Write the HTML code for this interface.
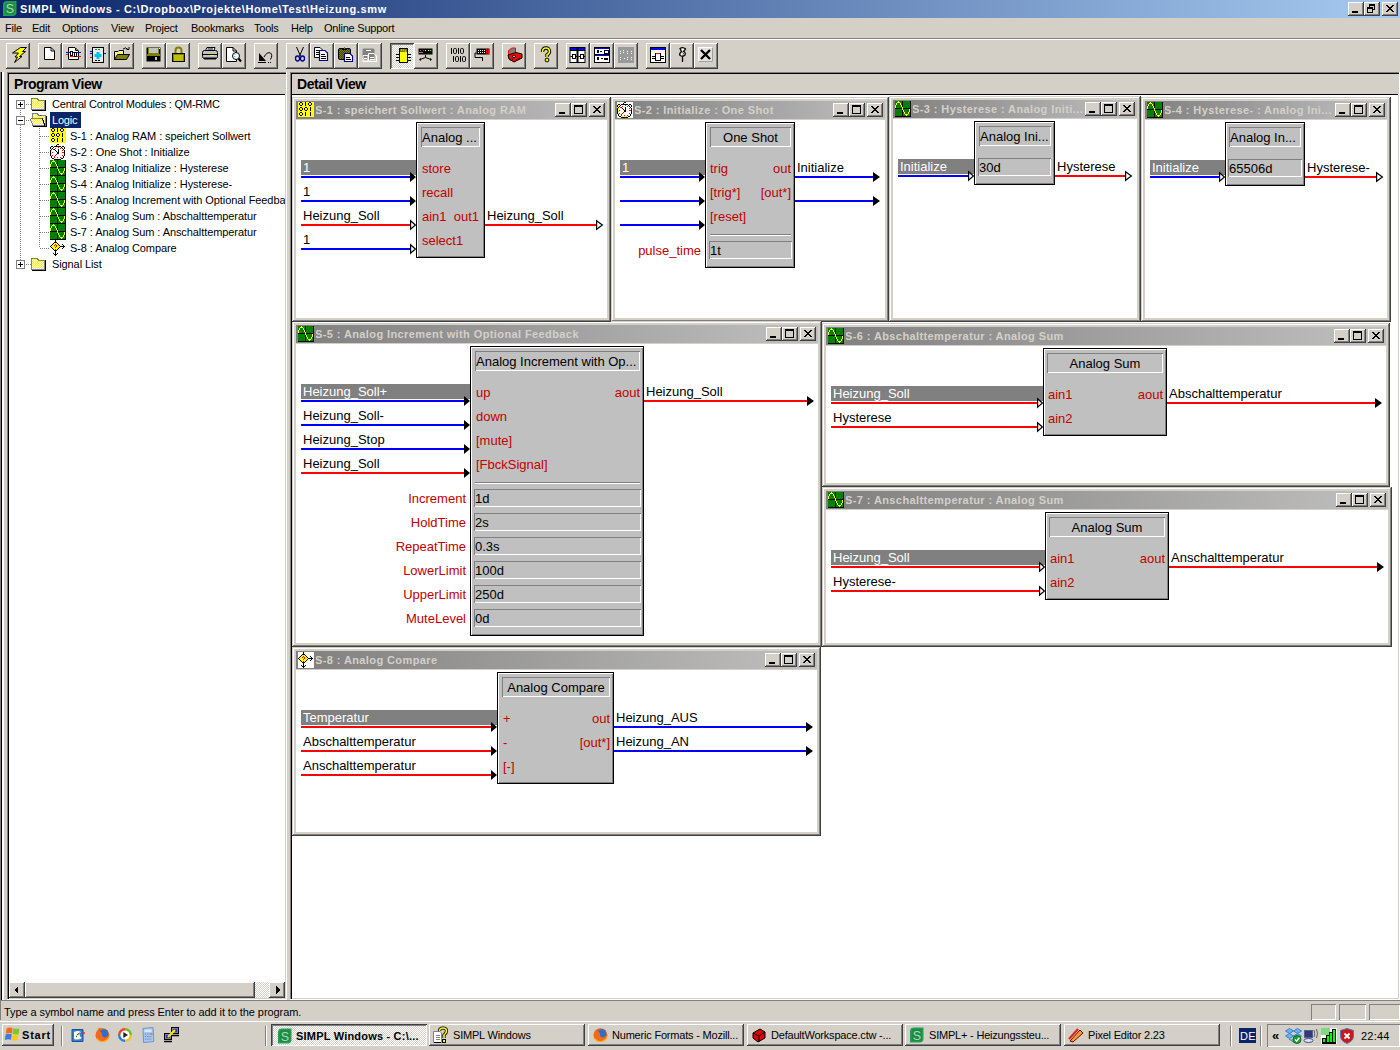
<!DOCTYPE html>
<html><head><meta charset="utf-8"><title>SIMPL Windows</title>
<style>
html,body{margin:0;padding:0;}
body{width:1400px;height:1050px;overflow:hidden;position:relative;background:#D4D0C8;font-family:"Liberation Sans",sans-serif;}
div,svg{position:absolute;box-sizing:border-box;}
.t{white-space:pre;}
svg{overflow:visible;}
</style></head><body>
<div style="left:0px;top:0px;width:1400px;height:18px;background:linear-gradient(to right,#0A246A,#A6CAF0);"></div>
<svg style="left:3px;top:1px;shape-rendering:auto" width="14" height="15" viewBox="0 0 14 15" shape-rendering="crispEdges"><path d="M4 0 H13.5 V11 Q13.5 15 9.5 15 H0 V4 Q0 0 4 0 Z" fill="#22A050"/><path d="M4 1.5 H12 V11 Q12 13.5 9.5 13.5 H1.5 V4 Q1.5 1.5 4 1.5 Z" fill="#1E8A46"/><text x="7" y="12" font-family="Liberation Sans" font-size="12.5" fill="#A8DCB4" text-anchor="middle">S</text></svg>
<div class="t" style="top:4px;font-size:11px;line-height:11px;color:#FFF;font-weight:bold;letter-spacing:0.6px;left:20px;">SIMPL Windows - C:\Dropbox\Projekte\Home\Test\Heizung.smw</div>
<div style="left:1348px;top:2px;width:16px;height:14px;background:#D4D0C8;box-shadow: inset -1px -1px #404040, inset 1px 1px #FFFFFF, inset -2px -2px #808080;"></div>
<svg style="left:1348px;top:2px;" width="16" height="14" viewBox="0 0 16 14" shape-rendering="crispEdges"><rect x="4" y="9" width="6" height="2" fill="#000"/></svg>
<div style="left:1364px;top:2px;width:16px;height:14px;background:#D4D0C8;box-shadow: inset -1px -1px #404040, inset 1px 1px #FFFFFF, inset -2px -2px #808080;"></div>
<svg style="left:1364px;top:2px;" width="16" height="14" viewBox="0 0 16 14" shape-rendering="crispEdges"><rect x="5.5" y="2.5" width="5" height="5" fill="none" stroke="#000"/><rect x="5" y="2" width="6" height="2" fill="#000"/><rect x="3.5" y="5.5" width="5" height="5" fill="#D4D0C8" stroke="#000"/><rect x="3" y="5" width="6" height="2" fill="#000"/></svg>
<div style="left:1382px;top:2px;width:16px;height:14px;background:#D4D0C8;box-shadow: inset -1px -1px #404040, inset 1px 1px #FFFFFF, inset -2px -2px #808080;"></div>
<svg style="left:1382px;top:2px;" width="16" height="14" viewBox="0 0 16 14" shape-rendering="crispEdges"><rect x="4" y="3" width="2" height="1" fill="#000"/><rect x="10" y="3" width="2" height="1" fill="#000"/><rect x="5" y="4" width="2" height="1" fill="#000"/><rect x="9" y="4" width="2" height="1" fill="#000"/><rect x="6" y="5" width="4" height="1" fill="#000"/><rect x="7" y="6" width="2" height="1" fill="#000"/><rect x="6" y="7" width="4" height="1" fill="#000"/><rect x="5" y="8" width="2" height="1" fill="#000"/><rect x="9" y="8" width="2" height="1" fill="#000"/><rect x="4" y="9" width="2" height="1" fill="#000"/><rect x="10" y="9" width="2" height="1" fill="#000"/></svg>
<div class="t" style="top:23px;font-size:11px;line-height:11px;color:#000;letter-spacing:-0.22px;left:5px;">File</div>
<div class="t" style="top:23px;font-size:11px;line-height:11px;color:#000;letter-spacing:-0.22px;left:32px;">Edit</div>
<div class="t" style="top:23px;font-size:11px;line-height:11px;color:#000;letter-spacing:-0.22px;left:62px;">Options</div>
<div class="t" style="top:23px;font-size:11px;line-height:11px;color:#000;letter-spacing:-0.22px;left:111px;">View</div>
<div class="t" style="top:23px;font-size:11px;line-height:11px;color:#000;letter-spacing:-0.22px;left:145px;">Project</div>
<div class="t" style="top:23px;font-size:11px;line-height:11px;color:#000;letter-spacing:-0.22px;left:191px;">Bookmarks</div>
<div class="t" style="top:23px;font-size:11px;line-height:11px;color:#000;letter-spacing:-0.22px;left:254px;">Tools</div>
<div class="t" style="top:23px;font-size:11px;line-height:11px;color:#000;letter-spacing:-0.22px;left:291px;">Help</div>
<div class="t" style="top:23px;font-size:11px;line-height:11px;color:#000;letter-spacing:-0.22px;left:324px;">Online Support</div>
<div style="left:0px;top:38px;width:1400px;height:1px;background:#808080;"></div>
<div style="left:0px;top:39px;width:1400px;height:1px;background:#FFFFFF;"></div>
<div style="left:6px;top:43px;width:24px;height:26px;background:#D4D0C8;box-shadow: inset -1px -1px #404040, inset 1px 1px #FFFFFF, inset -2px -2px #808080;"></div>
<div style="left:38px;top:43px;width:24px;height:26px;background:#D4D0C8;box-shadow: inset -1px -1px #404040, inset 1px 1px #FFFFFF, inset -2px -2px #808080;"></div>
<div style="left:62px;top:43px;width:24px;height:26px;background:#D4D0C8;box-shadow: inset -1px -1px #404040, inset 1px 1px #FFFFFF, inset -2px -2px #808080;"></div>
<div style="left:86px;top:43px;width:24px;height:26px;background:#D4D0C8;box-shadow: inset -1px -1px #404040, inset 1px 1px #FFFFFF, inset -2px -2px #808080;"></div>
<div style="left:110px;top:43px;width:24px;height:26px;background:#D4D0C8;box-shadow: inset -1px -1px #404040, inset 1px 1px #FFFFFF, inset -2px -2px #808080;"></div>
<div style="left:142px;top:43px;width:24px;height:26px;background:#D4D0C8;box-shadow: inset -1px -1px #404040, inset 1px 1px #FFFFFF, inset -2px -2px #808080;"></div>
<div style="left:166px;top:43px;width:24px;height:26px;background:#D4D0C8;box-shadow: inset -1px -1px #404040, inset 1px 1px #FFFFFF, inset -2px -2px #808080;"></div>
<div style="left:198px;top:43px;width:24px;height:26px;background:#D4D0C8;box-shadow: inset -1px -1px #404040, inset 1px 1px #FFFFFF, inset -2px -2px #808080;"></div>
<div style="left:222px;top:43px;width:24px;height:26px;background:#D4D0C8;box-shadow: inset -1px -1px #404040, inset 1px 1px #FFFFFF, inset -2px -2px #808080;"></div>
<div style="left:254px;top:43px;width:24px;height:26px;background:#D4D0C8;box-shadow: inset -1px -1px #404040, inset 1px 1px #FFFFFF, inset -2px -2px #808080;"></div>
<div style="left:286px;top:43px;width:24px;height:26px;background:#D4D0C8;box-shadow: inset -1px -1px #404040, inset 1px 1px #FFFFFF, inset -2px -2px #808080;"></div>
<div style="left:310px;top:43px;width:24px;height:26px;background:#D4D0C8;box-shadow: inset -1px -1px #404040, inset 1px 1px #FFFFFF, inset -2px -2px #808080;"></div>
<div style="left:334px;top:43px;width:24px;height:26px;background:#D4D0C8;box-shadow: inset -1px -1px #404040, inset 1px 1px #FFFFFF, inset -2px -2px #808080;"></div>
<div style="left:358px;top:43px;width:24px;height:26px;background:#D4D0C8;box-shadow: inset -1px -1px #404040, inset 1px 1px #FFFFFF, inset -2px -2px #808080;"></div>
<div style="left:390px;top:43px;width:24px;height:26px;background:repeating-conic-gradient(#FFF 0 25%,#D4D0C8 0 50%) 0 0/2px 2px;box-shadow: inset 1px 1px #404040, inset -1px -1px #FFFFFF, inset 2px 2px #808080;"></div>
<div style="left:414px;top:43px;width:24px;height:26px;background:#D4D0C8;box-shadow: inset -1px -1px #404040, inset 1px 1px #FFFFFF, inset -2px -2px #808080;"></div>
<div style="left:446px;top:43px;width:24px;height:26px;background:#D4D0C8;box-shadow: inset -1px -1px #404040, inset 1px 1px #FFFFFF, inset -2px -2px #808080;"></div>
<div style="left:470px;top:43px;width:24px;height:26px;background:#D4D0C8;box-shadow: inset -1px -1px #404040, inset 1px 1px #FFFFFF, inset -2px -2px #808080;"></div>
<div style="left:502px;top:43px;width:24px;height:26px;background:#D4D0C8;box-shadow: inset -1px -1px #404040, inset 1px 1px #FFFFFF, inset -2px -2px #808080;"></div>
<div style="left:534px;top:43px;width:24px;height:26px;background:#D4D0C8;box-shadow: inset -1px -1px #404040, inset 1px 1px #FFFFFF, inset -2px -2px #808080;"></div>
<div style="left:566px;top:43px;width:24px;height:26px;background:#D4D0C8;box-shadow: inset -1px -1px #404040, inset 1px 1px #FFFFFF, inset -2px -2px #808080;"></div>
<div style="left:590px;top:43px;width:24px;height:26px;background:#D4D0C8;box-shadow: inset -1px -1px #404040, inset 1px 1px #FFFFFF, inset -2px -2px #808080;"></div>
<div style="left:614px;top:43px;width:24px;height:26px;background:#D4D0C8;box-shadow: inset -1px -1px #404040, inset 1px 1px #FFFFFF, inset -2px -2px #808080;"></div>
<div style="left:646px;top:43px;width:24px;height:26px;background:#D4D0C8;box-shadow: inset -1px -1px #404040, inset 1px 1px #FFFFFF, inset -2px -2px #808080;"></div>
<div style="left:670px;top:43px;width:24px;height:26px;background:#D4D0C8;box-shadow: inset -1px -1px #404040, inset 1px 1px #FFFFFF, inset -2px -2px #808080;"></div>
<div style="left:694px;top:43px;width:24px;height:26px;background:#D4D0C8;box-shadow: inset -1px -1px #404040, inset 1px 1px #FFFFFF, inset -2px -2px #808080;"></div>
<svg style="left:11px;top:47px;shape-rendering:auto" width="16" height="16" viewBox="0 0 16 16" shape-rendering="crispEdges"><path d="M9.5 0.5 H15.5 L11.5 4.5 H14.5 L8.5 9.5 H11 L3.5 15.5 L6.5 10 H4 L7.5 6 H1.5 Z" fill="#FFFF00" stroke="#000" stroke-linejoin="bevel"/></svg>
<svg style="left:42px;top:47px;shape-rendering:auto" width="16" height="16" viewBox="0 0 16 16" shape-rendering="crispEdges"><path d="M2.5 0.5 H9 L12.5 4 V12.5 H2.5 Z" fill="#FFF" stroke="#000"/><path d="M9 0.5 V4 H12.5" fill="none" stroke="#000"/></svg>
<svg style="left:66px;top:47px;shape-rendering:auto" width="16" height="16" viewBox="0 0 16 16" shape-rendering="crispEdges"><path d="M2.5 0.5 H9 L12.5 4 V12.5 H2.5 Z" fill="#FFF" stroke="#000"/><path d="M9.5 1 V3.5 H12" fill="none" stroke="#000"/><path d="M0 5.5 H15" stroke="#0000FF"/><path d="M0 7.5 H2 M4 9.5 H15" stroke="#FF0000"/><rect x="4.5" y="4.5" width="2" height="4" fill="#FFF" stroke="#000"/><rect x="8.5" y="5.5" width="2" height="4" fill="#FFF" stroke="#000"/></svg>
<svg style="left:91px;top:47px;shape-rendering:auto" width="16" height="16" viewBox="0 0 16 16" shape-rendering="crispEdges"><rect x="1.5" y="0.5" width="11" height="15" fill="#E8E8E8" stroke="#000"/><path d="M4 2.5 H6 M7 2.5 H9" stroke="#00A000"/><path d="M-1 4.5 H1 M-1 6.5 H1 M13 6.5 H15" stroke="#0000FF"/><path d="M-1 10.5 H1" stroke="#FF0000"/><path d="M7 5 V12 M3.5 8.5 H10.5" stroke="#00C0F0" stroke-width="3"/><path d="M4 13.5 H10" stroke="#000" stroke-dasharray="2 1"/></svg>
<svg style="left:114px;top:47px;shape-rendering:auto" width="16" height="16" viewBox="0 0 16 16" shape-rendering="crispEdges"><defs><pattern id="fdt" width="2" height="2" patternUnits="userSpaceOnUse"><rect width="2" height="2" fill="#FFFF00"/><rect width="1" height="1" fill="#FFF"/><rect x="1" y="1" width="1" height="1" fill="#FFF"/></pattern></defs><path d="M0.5 4.5 H4 L5 3.5 H9.5 V12.5 H0.5 Z" fill="url(#fdt)" stroke="#000"/><path d="M0.5 12.5 L3.5 7.5 H15.5 L12.5 12.5 Z" fill="#808000" stroke="#000"/><path d="M9 2 Q11.5 -0.5 14 2.5" fill="none" stroke="#000"/><path d="M12.5 2.5 H15 V0" fill="none" stroke="#000"/></svg>
<svg style="left:146px;top:47px;shape-rendering:auto" width="16" height="16" viewBox="0 0 16 16" shape-rendering="crispEdges"><rect x="0.5" y="0.5" width="14" height="14" fill="#000"/><rect x="2" y="1" width="11" height="6" fill="#808000"/><rect x="3" y="1" width="9" height="5" fill="#C0C0C0"/><rect x="1" y="7" width="13" height="2" fill="#808000"/><rect x="3" y="9" width="9" height="5" fill="#000"/><rect x="9" y="10" width="2" height="3" fill="#C0C0C0"/><rect x="13" y="1" width="1" height="1" fill="#FFF"/></svg>
<svg style="left:171px;top:47px;shape-rendering:auto" width="16" height="16" viewBox="0 0 16 16" shape-rendering="crispEdges"><path d="M4.5 7 V3.5 Q4.5 0.5 7.5 0.5 Q10.5 0.5 10.5 3.5 V7" fill="none" stroke="#808000" stroke-width="2"/><rect x="1.5" y="6.5" width="12" height="8" fill="#808000" stroke="#000"/><path d="M3 9 H12 M3 11 H12 M3 13 H12" stroke="#FFFF00"/></svg>
<svg style="left:202px;top:47px;shape-rendering:auto" width="16" height="16" viewBox="0 0 16 16" shape-rendering="crispEdges"><path d="M3.5 3.5 L5 0.5 H13 L12 3.5 Z" fill="#FFF" stroke="#000"/><path d="M5.5 2 H11" stroke="#000"/><rect x="0.5" y="3.5" width="15" height="8" rx="2" fill="#C0C0C0" stroke="#000"/><path d="M1 7.5 H15" stroke="#000"/><rect x="8" y="8" width="4" height="1" fill="#FFFF00"/><path d="M2 11.5 H14" stroke="#000" stroke-width="2"/></svg>
<svg style="left:226px;top:47px;shape-rendering:auto" width="16" height="16" viewBox="0 0 16 16" shape-rendering="crispEdges"><path d="M0.5 0.5 H7 L10.5 4 V14.5 H0.5 Z" fill="#FFF" stroke="#000"/><path d="M7 0.5 V4 H10.5" fill="none" stroke="#000"/><circle cx="10" cy="9" r="3.5" fill="#FFF" stroke="#000"/><path d="M8.5 8 L9.5 7 M8.5 10 V9" stroke="#00E0F0"/><path d="M12.5 11.5 L15 14.5" stroke="#000" stroke-width="2"/></svg>
<svg style="left:258px;top:50px;shape-rendering:auto" width="16" height="16" viewBox="0 0 16 16" shape-rendering="crispEdges"><path d="M1 3 V11 H8 Z" fill="#000"/><path d="M6 7 Q9 1.5 12.5 3 Q15 5 12.5 9.5" fill="none" stroke="#000"/><path d="M0 12.5 H8 M10 12.5 H11 M12 12.5 H13" stroke="#000"/></svg>
<svg style="left:293px;top:47px;shape-rendering:auto" width="16" height="16" viewBox="0 0 16 16" shape-rendering="crispEdges"><path d="M3.5 0 L7.5 9 M10.5 0 L6.5 9" stroke="#000"/><ellipse cx="4.5" cy="11.5" rx="2" ry="2.5" fill="none" stroke="#000090" stroke-width="1.3"/><ellipse cx="9.5" cy="11.5" rx="2" ry="2.5" fill="none" stroke="#000090" stroke-width="1.3"/></svg>
<svg style="left:314px;top:47px;shape-rendering:auto" width="16" height="16" viewBox="0 0 16 16" shape-rendering="crispEdges"><path d="M0.5 0.5 H6 L8.5 3 V10.5 H0.5 Z" fill="#FFF" stroke="#000"/><path d="M2 3.5 H6 M2 5.5 H7 M2 7.5 H7" stroke="#000"/><path d="M5.5 3.5 H11 L13.5 6 V13.5 H5.5 Z" fill="#FFF" stroke="#000090" stroke-width="1.2"/><path d="M7 7.5 H11 M7 9.5 H12 M7 11.5 H12" stroke="#000"/></svg>
<svg style="left:338px;top:47px;shape-rendering:auto" width="16" height="16" viewBox="0 0 16 16" shape-rendering="crispEdges"><defs><pattern id="odt" width="2" height="2" patternUnits="userSpaceOnUse"><rect width="2" height="2" fill="#808000"/><rect width="1" height="1" fill="#404000"/><rect x="1" y="1" width="1" height="1" fill="#404000"/></pattern></defs><rect x="0.5" y="1.5" width="12" height="11" rx="1.5" fill="url(#odt)" stroke="#000"/><path d="M4 2.5 Q6.5 -0.5 9 2.5 Z" fill="#FFFF00" stroke="#000"/><path d="M6.5 6.5 H12 L14.5 9 V14.5 H6.5 Z" fill="#FFF" stroke="#000090" stroke-width="1.2"/><path d="M8 10.5 H12 M8 12.5 H13" stroke="#000"/></svg>
<svg style="left:362px;top:47px;shape-rendering:auto" width="16" height="16" viewBox="0 0 16 16" shape-rendering="crispEdges"><rect x="0.5" y="1.5" width="12" height="11" rx="1.5" fill="#808080"/><path d="M4 3.5 H9" stroke="#FFF"/><path d="M6.5 6.5 H12 L14.5 9 V14.5 H6.5 Z" fill="none" stroke="#FFF"/><path d="M1 8.5 H6 V14.5 H1 Z" fill="none" stroke="#FFF"/><path d="M8 10.5 H12 M8 12.5 H13 M2 11.5 H5" stroke="#FFF"/></svg>
<svg style="left:395px;top:48px;shape-rendering:auto" width="16" height="16" viewBox="0 0 16 16" shape-rendering="crispEdges"><rect x="4.5" y="0.5" width="8" height="14" fill="#FFFF00" stroke="#000"/><rect x="5" y="1" width="7" height="3" fill="#808000"/><path d="M6 2 H7 M8 2 H9 M10 3 H11" stroke="#FFFF00"/><path d="M1 6.5 H4 M1 9.5 H4 M1 12.5 H4 M13 6.5 H16 M13 9.5 H16 M13 12.5 H16" stroke="#000"/></svg>
<svg style="left:418px;top:47px;shape-rendering:auto" width="16" height="16" viewBox="0 0 16 16" shape-rendering="crispEdges"><rect x="0.5" y="1.5" width="14" height="6" fill="#000"/><path d="M2 3.5 H3" stroke="#FF0000"/><path d="M5 3.5 H6" stroke="#FF0000"/><path d="M7 3.5 H8 M10 3.5 H11" stroke="#FFFF00"/><path d="M12 3.5 H13" stroke="#00FF00"/><path d="M1 5.5 H5" stroke="#808080"/><path d="M7.5 8 V10.5 L2 12.5 M7.5 10.5 L13 12.5" fill="none" stroke="#000"/><path d="M1 12.5 L3 11 V14 Z M14 12.5 L12 11 V14 Z" fill="#000"/></svg>
<svg style="left:451px;top:47px;shape-rendering:auto" width="16" height="16" viewBox="0 0 16 16" shape-rendering="crispEdges"><rect x="0" y="1" width="1" height="6" fill="#000"/><rect x="2.5" y="1.5" width="3" height="5" rx="1.2" fill="none" stroke="#000"/><rect x="7" y="1" width="1" height="6" fill="#000"/><rect x="9.5" y="1.5" width="3" height="5" rx="1.2" fill="none" stroke="#000"/><rect x="2" y="9" width="1" height="6" fill="#000"/><rect x="4.5" y="9.5" width="3" height="5" rx="1.2" fill="none" stroke="#000"/><rect x="9" y="9" width="1" height="6" fill="#000"/><rect x="11.5" y="9.5" width="3" height="5" rx="1.2" fill="none" stroke="#000"/></svg>
<svg style="left:474px;top:47px;shape-rendering:auto" width="16" height="16" viewBox="0 0 16 16" shape-rendering="crispEdges"><rect x="2.5" y="1.5" width="13" height="6" fill="#000"/><path d="M4 3.5 H11 M4 5.5 H11" stroke="#FFF" stroke-dasharray="1 1"/><rect x="12" y="2" width="1" height="5" fill="#FF0000"/><rect x="14" y="2" width="1" height="5" fill="#FF0000"/><path d="M2.5 6 H1 V10.5 H8.5 V14" fill="none" stroke="#000"/></svg>
<svg style="left:507px;top:47px;shape-rendering:auto" width="16" height="16" viewBox="0 0 16 16" shape-rendering="crispEdges"><path d="M1.5 3.5 L5 1 H8.5 V7 L1.5 9 Z" fill="#808080" stroke="#F00"/><path d="M1 8 L9 5.5 L15 7 V11 L7 15 L2 12 Z" fill="#FF0000" stroke="#000"/><path d="M5 9.5 Q7 7.5 9 9.5 Q7 12 5 9.5" fill="#FFF" stroke="#000"/><path d="M3 13 L6 12 M9 13 L13 11" stroke="#000" stroke-dasharray="1 1"/></svg>
<svg style="left:538px;top:47px;shape-rendering:auto" width="16" height="16" viewBox="0 0 16 16" shape-rendering="crispEdges"><path d="M4.5 5 Q4.5 1 8 1 Q11.5 1 11.5 4.5 Q11.5 6.5 9 8 V10" fill="none" stroke="#000" stroke-width="3.4"/><path d="M4.5 5 Q4.5 1 8 1 Q11.5 1 11.5 4.5 Q11.5 6.5 9 8 V10" fill="none" stroke="#FFFF00" stroke-width="1.6"/><circle cx="9" cy="13" r="1.9" fill="#FFFF00" stroke="#000"/></svg>
<svg style="left:570px;top:47px;shape-rendering:auto" width="16" height="16" viewBox="0 0 16 16" shape-rendering="crispEdges"><rect x="-0.5" y="0" width="16" height="16" fill="#000"/><rect x="0.5" y="1" width="6" height="2" fill="#0000FF"/><rect x="8.5" y="1" width="6" height="2" fill="#0000FF"/><rect x="0.5" y="4" width="6" height="11" fill="#FFF"/><rect x="8.5" y="4" width="6" height="11" fill="#FFF"/><rect x="2.5" y="7.5" width="3" height="4" fill="none" stroke="#000"/><rect x="10.5" y="7.5" width="3" height="4" fill="none" stroke="#000"/><path d="M0.5 9.5 H2 M6 9.5 H8 M8.5 9.5 H10 M14 9.5 H15" stroke="#000"/></svg>
<svg style="left:594px;top:47px;shape-rendering:auto" width="16" height="16" viewBox="0 0 16 16" shape-rendering="crispEdges"><rect x="0" y="0" width="16" height="16" fill="#000"/><rect x="1" y="1" width="14" height="1" fill="#0000FF"/><rect x="1" y="2" width="14" height="5" fill="#FFF"/><rect x="1" y="8" width="14" height="1" fill="#0000FF"/><rect x="1" y="9" width="14" height="6" fill="#FFF"/><rect x="3" y="3" width="2" height="3" fill="#000"/><rect x="6" y="4" width="2" height="1" fill="#000"/><rect x="10" y="3" width="4" height="3" fill="none" stroke="#000" transform="translate(0.5 0.5)"/><rect x="3" y="10" width="2" height="3" fill="#000"/><rect x="7" y="11" width="2" height="1" fill="#000"/><rect x="10" y="11" width="4" height="2" fill="#000"/></svg>
<svg style="left:618px;top:47px;shape-rendering:auto" width="16" height="16" viewBox="0 0 16 16" shape-rendering="crispEdges"><rect x="0" y="0" width="16" height="16" fill="#9A9A9A"/><path d="M2.5 4 V7 M5.5 3 V6 M9.5 4 V7 M13.5 4 V7 M2.5 10 V13 M6.5 11 V12 M9.5 10 V13 M13.5 10 V13" stroke="#FFF" stroke-dasharray="1 1"/></svg>
<svg style="left:650px;top:47px;shape-rendering:auto" width="16" height="16" viewBox="0 0 16 16" shape-rendering="crispEdges"><rect x="0" y="0" width="16" height="16" fill="#000"/><rect x="1" y="1" width="14" height="2" fill="#0000FF"/><rect x="1" y="3" width="14" height="12" fill="#FFF"/><rect x="5.5" y="6.5" width="5" height="7" fill="#FFF" stroke="#000"/><rect x="6" y="6" width="4" height="1" fill="#FF0000"/><path d="M2 9.5 H5 M11 9.5 H14 M2 11.5 H5 M11 11.5 H14" stroke="#000"/></svg>
<svg style="left:675px;top:47px;shape-rendering:auto" width="16" height="16" viewBox="0 0 16 16" shape-rendering="crispEdges"><path d="M5 1.5 Q8 -0.5 10.5 2 L8.5 4.5 Q11 5.5 10 8 Q8 10 5 8.5 Q4 6.5 6.5 4.5 Z" fill="#FFF" stroke="#000" stroke-width="1.3"/><path d="M7.5 5.5 Q9 6 8 7.5" fill="none" stroke="#000"/><path d="M7.5 9 V15" stroke="#000" stroke-width="1.3"/></svg>
<svg style="left:698px;top:47px;shape-rendering:auto" width="16" height="16" viewBox="0 0 16 16" shape-rendering="crispEdges"><rect x="0.5" y="0.5" width="14" height="14" fill="#E4E2DC" stroke="#FFF"/><path d="M0.5 14.5 H14.5 V0.5" fill="none" stroke="#A0A0A0"/><path d="M3 3 L12 12 M12 3 L3 12" stroke="#000" stroke-width="2.4"/></svg>
<div style="left:0px;top:72px;width:1px;height:928px;background:#808080;"></div>
<div style="left:1px;top:72px;width:1px;height:928px;background:#000;"></div>
<div style="left:2px;top:72px;width:2px;height:928px;background:#FFFFFF;"></div>
<div style="left:7px;top:72px;width:280px;height:1px;background:#808080;"></div>
<div style="left:7px;top:72px;width:1px;height:928px;background:#808080;"></div>
<div style="left:8px;top:73px;width:278px;height:1px;background:#000;"></div>
<div style="left:8px;top:73px;width:1px;height:926px;background:#000;"></div>
<div style="left:286px;top:72px;width:1px;height:928px;background:#FFFFFF;"></div>
<div style="left:7px;top:999px;width:280px;height:1px;background:#FFFFFF;"></div>
<div style="left:290px;top:72px;width:1110px;height:1px;background:#808080;"></div>
<div style="left:290px;top:72px;width:1px;height:928px;background:#808080;"></div>
<div style="left:291px;top:73px;width:1108px;height:1px;background:#000;"></div>
<div style="left:291px;top:73px;width:1px;height:926px;background:#000;"></div>
<div style="left:1399px;top:72px;width:1px;height:928px;background:#FFFFFF;"></div>
<div style="left:290px;top:999px;width:1110px;height:1px;background:#FFFFFF;"></div>
<div style="left:9px;top:74px;width:276px;height:20px;background:#D4D0C8;"></div>
<div style="left:9px;top:94px;width:276px;height:1px;background:#000;"></div>
<div class="t" style="top:77px;font-size:14px;line-height:14px;color:#000;font-weight:bold;letter-spacing:-0.45px;left:14px;">Program View</div>
<div style="left:292px;top:74px;width:1106px;height:20px;background:#D4D0C8;"></div>
<div style="left:292px;top:94px;width:1106px;height:1px;background:#000;"></div>
<div class="t" style="top:77px;font-size:14px;line-height:14px;color:#000;font-weight:bold;letter-spacing:-0.45px;left:297px;">Detail View</div>
<div style="left:9px;top:95px;width:276px;height:887px;background:#FFF;"></div>
<div style="left:292px;top:95px;width:1106px;height:903px;background:#FFF;"></div>
<div style="left:9px;top:95px;width:276px;height:887px;overflow:hidden;">
<div style="left:7px;top:5px;width:9px;height:9px;background:#FFF;box-shadow: inset 0 0 0 1px #808080;"></div>
<div style="left:9px;top:9px;width:5px;height:1px;background:#000;"></div>
<div style="left:11px;top:7px;width:1px;height:5px;background:#000;"></div>
<div style="left:17px;top:9px;width:5px;height:1px;background:repeating-linear-gradient(to right,#808080 0 1px,transparent 1px 2px);"></div>
<svg style="left:21px;top:1px;" width="16" height="16" viewBox="0 0 16 16" shape-rendering="crispEdges"><defs><pattern id="dth1" width="2" height="2" patternUnits="userSpaceOnUse"><rect width="2" height="2" fill="#FFFF00"/><rect width="1" height="1" fill="#FFF"/><rect x="1" y="1" width="1" height="1" fill="#FFF"/></pattern></defs><path d="M1.5 2.5 H7 L8.5 4 H14.5 V13.5 H1.5 Z" fill="url(#dth1)" stroke="#808080"/><path d="M2 14.5 H15.5 V4" fill="none" stroke="#000"/></svg>
<div class="t" style="top:4px;font-size:11px;line-height:11px;color:#000;letter-spacing:-0.2px;left:43px;">Central Control Modules : QM-RMC</div>
<div style="left:7px;top:21px;width:9px;height:9px;background:#FFF;box-shadow: inset 0 0 0 1px #808080;"></div>
<div style="left:9px;top:25px;width:5px;height:1px;background:#000;"></div>
<div style="left:17px;top:25px;width:5px;height:1px;background:repeating-linear-gradient(to right,#808080 0 1px,transparent 1px 2px);"></div>
<svg style="left:21px;top:17px;" width="16" height="16" viewBox="0 0 16 16" shape-rendering="crispEdges"><defs><pattern id="dth2" width="2" height="2" patternUnits="userSpaceOnUse"><rect width="2" height="2" fill="#FFFF00"/><rect width="1" height="1" fill="#FFF"/><rect x="1" y="1" width="1" height="1" fill="#FFF"/></pattern></defs><path d="M2.5 1.5 H7 L8.5 3 H15.5 V13.5 H2.5 Z" fill="url(#dth2)" stroke="#808080"/><path d="M0.5 7.5 L1.5 6.5 H12 L14.5 13.5 H3 Z" fill="url(#dth2)" stroke="#808080"/><path d="M12.5 6.5 L15 13.5 M16.5 4 V14.5 H3" fill="none" stroke="#000"/><rect x="10" y="3" width="1" height="1" fill="#800080"/><rect x="12" y="6" width="1" height="1" fill="#800080"/></svg>
<div style="left:11px;top:15px;width:1px;height:6px;background:repeating-linear-gradient(to bottom,#808080 0 1px,transparent 1px 2px);"></div>
<div style="left:41px;top:17px;width:31px;height:16px;background:#0A246A;"></div>
<div class="t" style="top:20px;font-size:11px;line-height:11px;color:#FFF;letter-spacing:-0.22px;left:43px;">Logic</div>
<div style="left:30px;top:33px;width:1px;height:120px;background:repeating-linear-gradient(to bottom,#808080 0 1px,transparent 1px 2px);"></div>
<div style="left:11px;top:30px;width:1px;height:139px;background:repeating-linear-gradient(to bottom,#808080 0 1px,transparent 1px 2px);"></div>
<div style="left:31px;top:41px;width:10px;height:1px;background:repeating-linear-gradient(to right,#808080 0 1px,transparent 1px 2px);"></div>
<svg style="left:41px;top:33px;" width="16" height="16" viewBox="0 0 16 16" shape-rendering="crispEdges"><rect x="0" y="0" width="2" height="1" fill="#FFFF00"/><rect x="2" y="0" width="2" height="1" fill="#000"/><rect x="4" y="0" width="3" height="1" fill="#FFFF00"/><rect x="7" y="0" width="1" height="1" fill="#000"/><rect x="8" y="0" width="3" height="1" fill="#FFFF00"/><rect x="11" y="0" width="2" height="1" fill="#000"/><rect x="13" y="0" width="3" height="1" fill="#FFFF00"/><rect x="0" y="1" width="1" height="1" fill="#FFFF00"/><rect x="1" y="1" width="1" height="1" fill="#000"/><rect x="2" y="1" width="2" height="1" fill="#FFFF00"/><rect x="4" y="1" width="1" height="1" fill="#000"/><rect x="5" y="1" width="2" height="1" fill="#FFFF00"/><rect x="7" y="1" width="1" height="1" fill="#000"/><rect x="8" y="1" width="2" height="1" fill="#FFFF00"/><rect x="10" y="1" width="1" height="1" fill="#000"/><rect x="11" y="1" width="2" height="1" fill="#FFFF00"/><rect x="13" y="1" width="1" height="1" fill="#000"/><rect x="14" y="1" width="2" height="1" fill="#FFFF00"/><rect x="0" y="2" width="1" height="1" fill="#FFFF00"/><rect x="1" y="2" width="1" height="1" fill="#000"/><rect x="2" y="2" width="2" height="1" fill="#FFFF00"/><rect x="4" y="2" width="1" height="1" fill="#000"/><rect x="5" y="2" width="2" height="1" fill="#FFFF00"/><rect x="7" y="2" width="1" height="1" fill="#000"/><rect x="8" y="2" width="2" height="1" fill="#FFFF00"/><rect x="10" y="2" width="1" height="1" fill="#000"/><rect x="11" y="2" width="2" height="1" fill="#FFFF00"/><rect x="13" y="2" width="1" height="1" fill="#000"/><rect x="14" y="2" width="2" height="1" fill="#FFFF00"/><rect x="0" y="3" width="2" height="1" fill="#FFFF00"/><rect x="2" y="3" width="2" height="1" fill="#000"/><rect x="4" y="3" width="3" height="1" fill="#FFFF00"/><rect x="7" y="3" width="1" height="1" fill="#000"/><rect x="8" y="3" width="3" height="1" fill="#FFFF00"/><rect x="11" y="3" width="2" height="1" fill="#000"/><rect x="13" y="3" width="3" height="1" fill="#FFFF00"/><rect x="0" y="4" width="16" height="1" fill="#FFFF00"/><rect x="0" y="5" width="2" height="1" fill="#FFFF00"/><rect x="2" y="5" width="2" height="1" fill="#000"/><rect x="4" y="5" width="3" height="1" fill="#FFFF00"/><rect x="7" y="5" width="2" height="1" fill="#000"/><rect x="9" y="5" width="3" height="1" fill="#FFFF00"/><rect x="12" y="5" width="1" height="1" fill="#000"/><rect x="13" y="5" width="3" height="1" fill="#FFFF00"/><rect x="0" y="6" width="1" height="1" fill="#FFFF00"/><rect x="1" y="6" width="1" height="1" fill="#000"/><rect x="2" y="6" width="2" height="1" fill="#FFFF00"/><rect x="4" y="6" width="1" height="1" fill="#000"/><rect x="5" y="6" width="1" height="1" fill="#FFFF00"/><rect x="6" y="6" width="1" height="1" fill="#000"/><rect x="7" y="6" width="2" height="1" fill="#FFFF00"/><rect x="9" y="6" width="1" height="1" fill="#000"/><rect x="10" y="6" width="2" height="1" fill="#FFFF00"/><rect x="12" y="6" width="1" height="1" fill="#000"/><rect x="13" y="6" width="3" height="1" fill="#FFFF00"/><rect x="0" y="7" width="1" height="1" fill="#FFFF00"/><rect x="1" y="7" width="1" height="1" fill="#000"/><rect x="2" y="7" width="2" height="1" fill="#FFFF00"/><rect x="4" y="7" width="1" height="1" fill="#000"/><rect x="5" y="7" width="1" height="1" fill="#FFFF00"/><rect x="6" y="7" width="1" height="1" fill="#000"/><rect x="7" y="7" width="2" height="1" fill="#FFFF00"/><rect x="9" y="7" width="1" height="1" fill="#000"/><rect x="10" y="7" width="2" height="1" fill="#FFFF00"/><rect x="12" y="7" width="1" height="1" fill="#000"/><rect x="13" y="7" width="3" height="1" fill="#FFFF00"/><rect x="0" y="8" width="2" height="1" fill="#FFFF00"/><rect x="2" y="8" width="2" height="1" fill="#000"/><rect x="4" y="8" width="3" height="1" fill="#FFFF00"/><rect x="7" y="8" width="2" height="1" fill="#000"/><rect x="9" y="8" width="3" height="1" fill="#FFFF00"/><rect x="12" y="8" width="1" height="1" fill="#000"/><rect x="13" y="8" width="3" height="1" fill="#FFFF00"/><rect x="0" y="9" width="16" height="1" fill="#FFFF00"/><rect x="0" y="10" width="2" height="1" fill="#FFFF00"/><rect x="2" y="10" width="2" height="1" fill="#000"/><rect x="4" y="10" width="3" height="1" fill="#FFFF00"/><rect x="7" y="10" width="1" height="1" fill="#000"/><rect x="8" y="10" width="4" height="1" fill="#FFFF00"/><rect x="12" y="10" width="1" height="1" fill="#000"/><rect x="13" y="10" width="3" height="1" fill="#FFFF00"/><rect x="0" y="11" width="1" height="1" fill="#FFFF00"/><rect x="1" y="11" width="1" height="1" fill="#000"/><rect x="2" y="11" width="2" height="1" fill="#FFFF00"/><rect x="4" y="11" width="1" height="1" fill="#000"/><rect x="5" y="11" width="2" height="1" fill="#FFFF00"/><rect x="7" y="11" width="1" height="1" fill="#000"/><rect x="8" y="11" width="4" height="1" fill="#FFFF00"/><rect x="12" y="11" width="1" height="1" fill="#000"/><rect x="13" y="11" width="3" height="1" fill="#FFFF00"/><rect x="0" y="12" width="1" height="1" fill="#FFFF00"/><rect x="1" y="12" width="1" height="1" fill="#000"/><rect x="2" y="12" width="2" height="1" fill="#FFFF00"/><rect x="4" y="12" width="1" height="1" fill="#000"/><rect x="5" y="12" width="2" height="1" fill="#FFFF00"/><rect x="7" y="12" width="1" height="1" fill="#000"/><rect x="8" y="12" width="4" height="1" fill="#FFFF00"/><rect x="12" y="12" width="1" height="1" fill="#000"/><rect x="13" y="12" width="3" height="1" fill="#FFFF00"/><rect x="0" y="13" width="2" height="1" fill="#FFFF00"/><rect x="2" y="13" width="2" height="1" fill="#000"/><rect x="4" y="13" width="3" height="1" fill="#FFFF00"/><rect x="7" y="13" width="1" height="1" fill="#000"/><rect x="8" y="13" width="4" height="1" fill="#FFFF00"/><rect x="12" y="13" width="1" height="1" fill="#000"/><rect x="13" y="13" width="3" height="1" fill="#FFFF00"/><rect x="0" y="14" width="16" height="1" fill="#FFFF00"/></svg>
<div class="t" style="top:36px;font-size:11px;line-height:11px;color:#000;letter-spacing:-0.08px;left:61px;">S-1 : Analog RAM : speichert Sollwert</div>
<div style="left:31px;top:57px;width:10px;height:1px;background:repeating-linear-gradient(to right,#808080 0 1px,transparent 1px 2px);"></div>
<svg style="left:41px;top:49px;" width="16" height="16" viewBox="0 0 16 16" shape-rendering="crispEdges"><rect x="0" y="0" width="6" height="1" fill="#FFF"/><rect x="6" y="0" width="1" height="1" fill="#FFFF00"/><rect x="7" y="0" width="2" height="1" fill="#000"/><rect x="9" y="0" width="7" height="1" fill="#FFF"/><rect x="0" y="1" width="6" height="1" fill="#FFF"/><rect x="6" y="1" width="1" height="1" fill="#000"/><rect x="7" y="1" width="9" height="1" fill="#FFF"/><rect x="0" y="2" width="1" height="1" fill="#FFF"/><rect x="1" y="2" width="2" height="1" fill="#000"/><rect x="3" y="2" width="1" height="1" fill="#FFF"/><rect x="4" y="2" width="7" height="1" fill="#000"/><rect x="11" y="2" width="1" height="1" fill="#FFF"/><rect x="12" y="2" width="2" height="1" fill="#000"/><rect x="14" y="2" width="2" height="1" fill="#FFF"/><rect x="0" y="3" width="1" height="1" fill="#000"/><rect x="1" y="3" width="1" height="1" fill="#FFFF00"/><rect x="2" y="3" width="1" height="1" fill="#FFF"/><rect x="3" y="3" width="1" height="1" fill="#000"/><rect x="4" y="3" width="4" height="1" fill="#FFF"/><rect x="8" y="3" width="1" height="1" fill="#FF0000"/><rect x="9" y="3" width="2" height="1" fill="#FFF"/><rect x="11" y="3" width="1" height="1" fill="#000"/><rect x="12" y="3" width="1" height="1" fill="#FFFF00"/><rect x="13" y="3" width="1" height="1" fill="#FFF"/><rect x="14" y="3" width="1" height="1" fill="#000"/><rect x="15" y="3" width="1" height="1" fill="#FFF"/><rect x="0" y="4" width="1" height="1" fill="#000"/><rect x="1" y="4" width="1" height="1" fill="#FFF"/><rect x="2" y="4" width="1" height="1" fill="#000"/><rect x="3" y="4" width="2" height="1" fill="#FFF"/><rect x="5" y="4" width="1" height="1" fill="#FF0000"/><rect x="6" y="4" width="4" height="1" fill="#FFF"/><rect x="10" y="4" width="1" height="1" fill="#FF0000"/><rect x="11" y="4" width="1" height="1" fill="#FFF"/><rect x="12" y="4" width="1" height="1" fill="#000"/><rect x="13" y="4" width="1" height="1" fill="#FFF"/><rect x="14" y="4" width="1" height="1" fill="#000"/><rect x="15" y="4" width="1" height="1" fill="#FFF"/><rect x="0" y="5" width="1" height="1" fill="#FFF"/><rect x="1" y="5" width="1" height="1" fill="#000"/><rect x="2" y="5" width="1" height="1" fill="#FFF"/><rect x="3" y="5" width="1" height="1" fill="#FF0000"/><rect x="4" y="5" width="1" height="1" fill="#000"/><rect x="5" y="5" width="3" height="1" fill="#FFF"/><rect x="8" y="5" width="1" height="1" fill="#000"/><rect x="9" y="5" width="4" height="1" fill="#FFF"/><rect x="13" y="5" width="1" height="1" fill="#000"/><rect x="14" y="5" width="2" height="1" fill="#FFF"/><rect x="0" y="6" width="1" height="1" fill="#000"/><rect x="1" y="6" width="1" height="1" fill="#FFFF00"/><rect x="2" y="6" width="3" height="1" fill="#FFF"/><rect x="5" y="6" width="1" height="1" fill="#000"/><rect x="6" y="6" width="2" height="1" fill="#FFF"/><rect x="8" y="6" width="1" height="1" fill="#000"/><rect x="9" y="6" width="3" height="1" fill="#FFF"/><rect x="12" y="6" width="1" height="1" fill="#FF0000"/><rect x="13" y="6" width="1" height="1" fill="#FFF"/><rect x="14" y="6" width="1" height="1" fill="#000"/><rect x="15" y="6" width="1" height="1" fill="#FFF"/><rect x="0" y="7" width="1" height="1" fill="#000"/><rect x="1" y="7" width="1" height="1" fill="#FFFF00"/><rect x="2" y="7" width="4" height="1" fill="#FFF"/><rect x="6" y="7" width="1" height="1" fill="#000"/><rect x="7" y="7" width="1" height="1" fill="#FFF"/><rect x="8" y="7" width="1" height="1" fill="#000"/><rect x="9" y="7" width="5" height="1" fill="#FFF"/><rect x="14" y="7" width="1" height="1" fill="#000"/><rect x="15" y="7" width="1" height="1" fill="#FFF"/><rect x="0" y="8" width="1" height="1" fill="#000"/><rect x="1" y="8" width="1" height="1" fill="#FFF"/><rect x="2" y="8" width="1" height="1" fill="#FF0000"/><rect x="3" y="8" width="4" height="1" fill="#FFF"/><rect x="7" y="8" width="2" height="1" fill="#000"/><rect x="9" y="8" width="3" height="1" fill="#FFF"/><rect x="12" y="8" width="2" height="1" fill="#FF0000"/><rect x="14" y="8" width="1" height="1" fill="#000"/><rect x="15" y="8" width="1" height="1" fill="#FFF"/><rect x="0" y="9" width="1" height="1" fill="#000"/><rect x="1" y="9" width="1" height="1" fill="#FFFF00"/><rect x="2" y="9" width="5" height="1" fill="#FFF"/><rect x="7" y="9" width="2" height="1" fill="#000"/><rect x="9" y="9" width="5" height="1" fill="#FFF"/><rect x="14" y="9" width="1" height="1" fill="#000"/><rect x="15" y="9" width="1" height="1" fill="#FFF"/><rect x="0" y="10" width="1" height="1" fill="#000"/><rect x="1" y="10" width="5" height="1" fill="#FFF"/><rect x="6" y="10" width="1" height="1" fill="#FF0000"/><rect x="7" y="10" width="7" height="1" fill="#FFF"/><rect x="14" y="10" width="1" height="1" fill="#000"/><rect x="15" y="10" width="1" height="1" fill="#FFF"/><rect x="0" y="11" width="1" height="1" fill="#000"/><rect x="1" y="11" width="1" height="1" fill="#FFFF00"/><rect x="2" y="11" width="1" height="1" fill="#FF0000"/><rect x="3" y="11" width="2" height="1" fill="#FFF"/><rect x="5" y="11" width="1" height="1" fill="#FF0000"/><rect x="6" y="11" width="6" height="1" fill="#FFF"/><rect x="12" y="11" width="1" height="1" fill="#FF0000"/><rect x="13" y="11" width="1" height="1" fill="#FFF"/><rect x="14" y="11" width="1" height="1" fill="#000"/><rect x="15" y="11" width="1" height="1" fill="#FFF"/><rect x="0" y="12" width="1" height="1" fill="#FFF"/><rect x="1" y="12" width="1" height="1" fill="#000"/><rect x="2" y="12" width="2" height="1" fill="#FFF"/><rect x="4" y="12" width="1" height="1" fill="#FF0000"/><rect x="5" y="12" width="8" height="1" fill="#FFF"/><rect x="13" y="12" width="1" height="1" fill="#000"/><rect x="14" y="12" width="2" height="1" fill="#FFF"/><rect x="0" y="13" width="1" height="1" fill="#FFF"/><rect x="1" y="13" width="1" height="1" fill="#000"/><rect x="2" y="13" width="2" height="1" fill="#FFF"/><rect x="4" y="13" width="1" height="1" fill="#FF0000"/><rect x="5" y="13" width="2" height="1" fill="#FFF"/><rect x="7" y="13" width="1" height="1" fill="#FF0000"/><rect x="8" y="13" width="2" height="1" fill="#FFF"/><rect x="10" y="13" width="1" height="1" fill="#FF0000"/><rect x="11" y="13" width="2" height="1" fill="#FFF"/><rect x="13" y="13" width="1" height="1" fill="#000"/><rect x="14" y="13" width="2" height="1" fill="#FFF"/><rect x="0" y="14" width="2" height="1" fill="#FFF"/><rect x="2" y="14" width="2" height="1" fill="#000"/><rect x="4" y="14" width="1" height="1" fill="#FFF"/><rect x="5" y="14" width="1" height="1" fill="#FFFF00"/><rect x="6" y="14" width="1" height="1" fill="#FFF"/><rect x="7" y="14" width="1" height="1" fill="#FFFF00"/><rect x="8" y="14" width="1" height="1" fill="#FFF"/><rect x="9" y="14" width="1" height="1" fill="#FFFF00"/><rect x="10" y="14" width="1" height="1" fill="#FFF"/><rect x="11" y="14" width="2" height="1" fill="#000"/><rect x="13" y="14" width="3" height="1" fill="#FFF"/><rect x="0" y="15" width="4" height="1" fill="#FFF"/><rect x="4" y="15" width="7" height="1" fill="#000"/><rect x="11" y="15" width="5" height="1" fill="#FFF"/></svg>
<div class="t" style="top:52px;font-size:11px;line-height:11px;color:#000;letter-spacing:-0.08px;left:61px;">S-2 : One Shot : Initialize</div>
<div style="left:31px;top:73px;width:10px;height:1px;background:repeating-linear-gradient(to right,#808080 0 1px,transparent 1px 2px);"></div>
<svg style="left:41px;top:65px;" width="16" height="16" viewBox="0 0 16 16" shape-rendering="crispEdges"><rect x="0" y="0" width="3" height="1" fill="#008000"/><rect x="3" y="0" width="1" height="1" fill="#FFFF00"/><rect x="4" y="0" width="3" height="1" fill="#008000"/><rect x="7" y="0" width="1" height="1" fill="#000"/><rect x="8" y="0" width="7" height="1" fill="#008000"/><rect x="15" y="0" width="1" height="1" fill="#000"/><rect x="0" y="1" width="2" height="1" fill="#008000"/><rect x="2" y="1" width="3" height="1" fill="#FFFF00"/><rect x="5" y="1" width="2" height="1" fill="#008000"/><rect x="7" y="1" width="1" height="1" fill="#000"/><rect x="8" y="1" width="7" height="1" fill="#008000"/><rect x="15" y="1" width="1" height="1" fill="#000"/><rect x="0" y="2" width="1" height="1" fill="#008000"/><rect x="1" y="2" width="1" height="1" fill="#FFFF00"/><rect x="2" y="2" width="3" height="1" fill="#008000"/><rect x="5" y="2" width="1" height="1" fill="#FFFF00"/><rect x="6" y="2" width="1" height="1" fill="#008000"/><rect x="7" y="2" width="1" height="1" fill="#000"/><rect x="8" y="2" width="7" height="1" fill="#008000"/><rect x="15" y="2" width="1" height="1" fill="#000"/><rect x="0" y="3" width="1" height="1" fill="#008000"/><rect x="1" y="3" width="1" height="1" fill="#FFFF00"/><rect x="2" y="3" width="3" height="1" fill="#008000"/><rect x="5" y="3" width="1" height="1" fill="#FFFF00"/><rect x="6" y="3" width="1" height="1" fill="#008000"/><rect x="7" y="3" width="1" height="1" fill="#000"/><rect x="8" y="3" width="7" height="1" fill="#008000"/><rect x="15" y="3" width="1" height="1" fill="#000"/><rect x="0" y="4" width="1" height="1" fill="#FFFF00"/><rect x="1" y="4" width="5" height="1" fill="#008000"/><rect x="6" y="4" width="1" height="1" fill="#FFFF00"/><rect x="7" y="4" width="1" height="1" fill="#000"/><rect x="8" y="4" width="7" height="1" fill="#008000"/><rect x="15" y="4" width="1" height="1" fill="#000"/><rect x="0" y="5" width="1" height="1" fill="#FFFF00"/><rect x="1" y="5" width="5" height="1" fill="#008000"/><rect x="6" y="5" width="1" height="1" fill="#FFFF00"/><rect x="7" y="5" width="1" height="1" fill="#000"/><rect x="8" y="5" width="7" height="1" fill="#008000"/><rect x="15" y="5" width="1" height="1" fill="#000"/><rect x="0" y="6" width="1" height="1" fill="#FFFF00"/><rect x="1" y="6" width="6" height="1" fill="#008000"/><rect x="7" y="6" width="1" height="1" fill="#FFFF00"/><rect x="8" y="6" width="7" height="1" fill="#008000"/><rect x="15" y="6" width="1" height="1" fill="#000"/><rect x="0" y="7" width="7" height="1" fill="#000"/><rect x="7" y="7" width="1" height="1" fill="#FFFF00"/><rect x="8" y="7" width="8" height="1" fill="#000"/><rect x="0" y="8" width="7" height="1" fill="#008000"/><rect x="7" y="8" width="1" height="1" fill="#FFFF00"/><rect x="8" y="8" width="6" height="1" fill="#008000"/><rect x="14" y="8" width="1" height="1" fill="#FFFF00"/><rect x="15" y="8" width="1" height="1" fill="#000"/><rect x="0" y="9" width="7" height="1" fill="#008000"/><rect x="7" y="9" width="1" height="1" fill="#000"/><rect x="8" y="9" width="1" height="1" fill="#FFFF00"/><rect x="9" y="9" width="5" height="1" fill="#008000"/><rect x="14" y="9" width="1" height="1" fill="#FFFF00"/><rect x="15" y="9" width="1" height="1" fill="#000"/><rect x="0" y="10" width="7" height="1" fill="#008000"/><rect x="7" y="10" width="1" height="1" fill="#000"/><rect x="8" y="10" width="1" height="1" fill="#FFFF00"/><rect x="9" y="10" width="5" height="1" fill="#008000"/><rect x="14" y="10" width="1" height="1" fill="#FFFF00"/><rect x="15" y="10" width="1" height="1" fill="#000"/><rect x="0" y="11" width="7" height="1" fill="#008000"/><rect x="7" y="11" width="1" height="1" fill="#000"/><rect x="8" y="11" width="1" height="1" fill="#008000"/><rect x="9" y="11" width="1" height="1" fill="#FFFF00"/><rect x="10" y="11" width="3" height="1" fill="#008000"/><rect x="13" y="11" width="1" height="1" fill="#FFFF00"/><rect x="14" y="11" width="1" height="1" fill="#008000"/><rect x="15" y="11" width="1" height="1" fill="#000"/><rect x="0" y="12" width="7" height="1" fill="#008000"/><rect x="7" y="12" width="1" height="1" fill="#000"/><rect x="8" y="12" width="1" height="1" fill="#008000"/><rect x="9" y="12" width="1" height="1" fill="#FFFF00"/><rect x="10" y="12" width="3" height="1" fill="#008000"/><rect x="13" y="12" width="1" height="1" fill="#FFFF00"/><rect x="14" y="12" width="1" height="1" fill="#008000"/><rect x="15" y="12" width="1" height="1" fill="#000"/><rect x="0" y="13" width="7" height="1" fill="#008000"/><rect x="7" y="13" width="1" height="1" fill="#000"/><rect x="8" y="13" width="2" height="1" fill="#008000"/><rect x="10" y="13" width="3" height="1" fill="#FFFF00"/><rect x="13" y="13" width="2" height="1" fill="#008000"/><rect x="15" y="13" width="1" height="1" fill="#000"/><rect x="0" y="14" width="7" height="1" fill="#008000"/><rect x="7" y="14" width="1" height="1" fill="#000"/><rect x="8" y="14" width="3" height="1" fill="#008000"/><rect x="11" y="14" width="1" height="1" fill="#FFFF00"/><rect x="12" y="14" width="3" height="1" fill="#008000"/><rect x="15" y="14" width="1" height="1" fill="#000"/><rect x="0" y="15" width="16" height="1" fill="#000"/></svg>
<div class="t" style="top:68px;font-size:11px;line-height:11px;color:#000;letter-spacing:-0.08px;left:61px;">S-3 : Analog Initialize : Hysterese</div>
<div style="left:31px;top:89px;width:10px;height:1px;background:repeating-linear-gradient(to right,#808080 0 1px,transparent 1px 2px);"></div>
<svg style="left:41px;top:81px;" width="16" height="16" viewBox="0 0 16 16" shape-rendering="crispEdges"><rect x="0" y="0" width="3" height="1" fill="#008000"/><rect x="3" y="0" width="1" height="1" fill="#FFFF00"/><rect x="4" y="0" width="3" height="1" fill="#008000"/><rect x="7" y="0" width="1" height="1" fill="#000"/><rect x="8" y="0" width="7" height="1" fill="#008000"/><rect x="15" y="0" width="1" height="1" fill="#000"/><rect x="0" y="1" width="2" height="1" fill="#008000"/><rect x="2" y="1" width="3" height="1" fill="#FFFF00"/><rect x="5" y="1" width="2" height="1" fill="#008000"/><rect x="7" y="1" width="1" height="1" fill="#000"/><rect x="8" y="1" width="7" height="1" fill="#008000"/><rect x="15" y="1" width="1" height="1" fill="#000"/><rect x="0" y="2" width="1" height="1" fill="#008000"/><rect x="1" y="2" width="1" height="1" fill="#FFFF00"/><rect x="2" y="2" width="3" height="1" fill="#008000"/><rect x="5" y="2" width="1" height="1" fill="#FFFF00"/><rect x="6" y="2" width="1" height="1" fill="#008000"/><rect x="7" y="2" width="1" height="1" fill="#000"/><rect x="8" y="2" width="7" height="1" fill="#008000"/><rect x="15" y="2" width="1" height="1" fill="#000"/><rect x="0" y="3" width="1" height="1" fill="#008000"/><rect x="1" y="3" width="1" height="1" fill="#FFFF00"/><rect x="2" y="3" width="3" height="1" fill="#008000"/><rect x="5" y="3" width="1" height="1" fill="#FFFF00"/><rect x="6" y="3" width="1" height="1" fill="#008000"/><rect x="7" y="3" width="1" height="1" fill="#000"/><rect x="8" y="3" width="7" height="1" fill="#008000"/><rect x="15" y="3" width="1" height="1" fill="#000"/><rect x="0" y="4" width="1" height="1" fill="#FFFF00"/><rect x="1" y="4" width="5" height="1" fill="#008000"/><rect x="6" y="4" width="1" height="1" fill="#FFFF00"/><rect x="7" y="4" width="1" height="1" fill="#000"/><rect x="8" y="4" width="7" height="1" fill="#008000"/><rect x="15" y="4" width="1" height="1" fill="#000"/><rect x="0" y="5" width="1" height="1" fill="#FFFF00"/><rect x="1" y="5" width="5" height="1" fill="#008000"/><rect x="6" y="5" width="1" height="1" fill="#FFFF00"/><rect x="7" y="5" width="1" height="1" fill="#000"/><rect x="8" y="5" width="7" height="1" fill="#008000"/><rect x="15" y="5" width="1" height="1" fill="#000"/><rect x="0" y="6" width="1" height="1" fill="#FFFF00"/><rect x="1" y="6" width="6" height="1" fill="#008000"/><rect x="7" y="6" width="1" height="1" fill="#FFFF00"/><rect x="8" y="6" width="7" height="1" fill="#008000"/><rect x="15" y="6" width="1" height="1" fill="#000"/><rect x="0" y="7" width="7" height="1" fill="#000"/><rect x="7" y="7" width="1" height="1" fill="#FFFF00"/><rect x="8" y="7" width="8" height="1" fill="#000"/><rect x="0" y="8" width="7" height="1" fill="#008000"/><rect x="7" y="8" width="1" height="1" fill="#FFFF00"/><rect x="8" y="8" width="6" height="1" fill="#008000"/><rect x="14" y="8" width="1" height="1" fill="#FFFF00"/><rect x="15" y="8" width="1" height="1" fill="#000"/><rect x="0" y="9" width="7" height="1" fill="#008000"/><rect x="7" y="9" width="1" height="1" fill="#000"/><rect x="8" y="9" width="1" height="1" fill="#FFFF00"/><rect x="9" y="9" width="5" height="1" fill="#008000"/><rect x="14" y="9" width="1" height="1" fill="#FFFF00"/><rect x="15" y="9" width="1" height="1" fill="#000"/><rect x="0" y="10" width="7" height="1" fill="#008000"/><rect x="7" y="10" width="1" height="1" fill="#000"/><rect x="8" y="10" width="1" height="1" fill="#FFFF00"/><rect x="9" y="10" width="5" height="1" fill="#008000"/><rect x="14" y="10" width="1" height="1" fill="#FFFF00"/><rect x="15" y="10" width="1" height="1" fill="#000"/><rect x="0" y="11" width="7" height="1" fill="#008000"/><rect x="7" y="11" width="1" height="1" fill="#000"/><rect x="8" y="11" width="1" height="1" fill="#008000"/><rect x="9" y="11" width="1" height="1" fill="#FFFF00"/><rect x="10" y="11" width="3" height="1" fill="#008000"/><rect x="13" y="11" width="1" height="1" fill="#FFFF00"/><rect x="14" y="11" width="1" height="1" fill="#008000"/><rect x="15" y="11" width="1" height="1" fill="#000"/><rect x="0" y="12" width="7" height="1" fill="#008000"/><rect x="7" y="12" width="1" height="1" fill="#000"/><rect x="8" y="12" width="1" height="1" fill="#008000"/><rect x="9" y="12" width="1" height="1" fill="#FFFF00"/><rect x="10" y="12" width="3" height="1" fill="#008000"/><rect x="13" y="12" width="1" height="1" fill="#FFFF00"/><rect x="14" y="12" width="1" height="1" fill="#008000"/><rect x="15" y="12" width="1" height="1" fill="#000"/><rect x="0" y="13" width="7" height="1" fill="#008000"/><rect x="7" y="13" width="1" height="1" fill="#000"/><rect x="8" y="13" width="2" height="1" fill="#008000"/><rect x="10" y="13" width="3" height="1" fill="#FFFF00"/><rect x="13" y="13" width="2" height="1" fill="#008000"/><rect x="15" y="13" width="1" height="1" fill="#000"/><rect x="0" y="14" width="7" height="1" fill="#008000"/><rect x="7" y="14" width="1" height="1" fill="#000"/><rect x="8" y="14" width="3" height="1" fill="#008000"/><rect x="11" y="14" width="1" height="1" fill="#FFFF00"/><rect x="12" y="14" width="3" height="1" fill="#008000"/><rect x="15" y="14" width="1" height="1" fill="#000"/><rect x="0" y="15" width="16" height="1" fill="#000"/></svg>
<div class="t" style="top:84px;font-size:11px;line-height:11px;color:#000;letter-spacing:-0.08px;left:61px;">S-4 : Analog Initialize : Hysterese-</div>
<div style="left:31px;top:105px;width:10px;height:1px;background:repeating-linear-gradient(to right,#808080 0 1px,transparent 1px 2px);"></div>
<svg style="left:41px;top:97px;" width="16" height="16" viewBox="0 0 16 16" shape-rendering="crispEdges"><rect x="0" y="0" width="3" height="1" fill="#008000"/><rect x="3" y="0" width="1" height="1" fill="#FFFF00"/><rect x="4" y="0" width="3" height="1" fill="#008000"/><rect x="7" y="0" width="1" height="1" fill="#000"/><rect x="8" y="0" width="7" height="1" fill="#008000"/><rect x="15" y="0" width="1" height="1" fill="#000"/><rect x="0" y="1" width="2" height="1" fill="#008000"/><rect x="2" y="1" width="3" height="1" fill="#FFFF00"/><rect x="5" y="1" width="2" height="1" fill="#008000"/><rect x="7" y="1" width="1" height="1" fill="#000"/><rect x="8" y="1" width="7" height="1" fill="#008000"/><rect x="15" y="1" width="1" height="1" fill="#000"/><rect x="0" y="2" width="1" height="1" fill="#008000"/><rect x="1" y="2" width="1" height="1" fill="#FFFF00"/><rect x="2" y="2" width="3" height="1" fill="#008000"/><rect x="5" y="2" width="1" height="1" fill="#FFFF00"/><rect x="6" y="2" width="1" height="1" fill="#008000"/><rect x="7" y="2" width="1" height="1" fill="#000"/><rect x="8" y="2" width="7" height="1" fill="#008000"/><rect x="15" y="2" width="1" height="1" fill="#000"/><rect x="0" y="3" width="1" height="1" fill="#008000"/><rect x="1" y="3" width="1" height="1" fill="#FFFF00"/><rect x="2" y="3" width="3" height="1" fill="#008000"/><rect x="5" y="3" width="1" height="1" fill="#FFFF00"/><rect x="6" y="3" width="1" height="1" fill="#008000"/><rect x="7" y="3" width="1" height="1" fill="#000"/><rect x="8" y="3" width="7" height="1" fill="#008000"/><rect x="15" y="3" width="1" height="1" fill="#000"/><rect x="0" y="4" width="1" height="1" fill="#FFFF00"/><rect x="1" y="4" width="5" height="1" fill="#008000"/><rect x="6" y="4" width="1" height="1" fill="#FFFF00"/><rect x="7" y="4" width="1" height="1" fill="#000"/><rect x="8" y="4" width="7" height="1" fill="#008000"/><rect x="15" y="4" width="1" height="1" fill="#000"/><rect x="0" y="5" width="1" height="1" fill="#FFFF00"/><rect x="1" y="5" width="5" height="1" fill="#008000"/><rect x="6" y="5" width="1" height="1" fill="#FFFF00"/><rect x="7" y="5" width="1" height="1" fill="#000"/><rect x="8" y="5" width="7" height="1" fill="#008000"/><rect x="15" y="5" width="1" height="1" fill="#000"/><rect x="0" y="6" width="1" height="1" fill="#FFFF00"/><rect x="1" y="6" width="6" height="1" fill="#008000"/><rect x="7" y="6" width="1" height="1" fill="#FFFF00"/><rect x="8" y="6" width="7" height="1" fill="#008000"/><rect x="15" y="6" width="1" height="1" fill="#000"/><rect x="0" y="7" width="7" height="1" fill="#000"/><rect x="7" y="7" width="1" height="1" fill="#FFFF00"/><rect x="8" y="7" width="8" height="1" fill="#000"/><rect x="0" y="8" width="7" height="1" fill="#008000"/><rect x="7" y="8" width="1" height="1" fill="#FFFF00"/><rect x="8" y="8" width="6" height="1" fill="#008000"/><rect x="14" y="8" width="1" height="1" fill="#FFFF00"/><rect x="15" y="8" width="1" height="1" fill="#000"/><rect x="0" y="9" width="7" height="1" fill="#008000"/><rect x="7" y="9" width="1" height="1" fill="#000"/><rect x="8" y="9" width="1" height="1" fill="#FFFF00"/><rect x="9" y="9" width="5" height="1" fill="#008000"/><rect x="14" y="9" width="1" height="1" fill="#FFFF00"/><rect x="15" y="9" width="1" height="1" fill="#000"/><rect x="0" y="10" width="7" height="1" fill="#008000"/><rect x="7" y="10" width="1" height="1" fill="#000"/><rect x="8" y="10" width="1" height="1" fill="#FFFF00"/><rect x="9" y="10" width="5" height="1" fill="#008000"/><rect x="14" y="10" width="1" height="1" fill="#FFFF00"/><rect x="15" y="10" width="1" height="1" fill="#000"/><rect x="0" y="11" width="7" height="1" fill="#008000"/><rect x="7" y="11" width="1" height="1" fill="#000"/><rect x="8" y="11" width="1" height="1" fill="#008000"/><rect x="9" y="11" width="1" height="1" fill="#FFFF00"/><rect x="10" y="11" width="3" height="1" fill="#008000"/><rect x="13" y="11" width="1" height="1" fill="#FFFF00"/><rect x="14" y="11" width="1" height="1" fill="#008000"/><rect x="15" y="11" width="1" height="1" fill="#000"/><rect x="0" y="12" width="7" height="1" fill="#008000"/><rect x="7" y="12" width="1" height="1" fill="#000"/><rect x="8" y="12" width="1" height="1" fill="#008000"/><rect x="9" y="12" width="1" height="1" fill="#FFFF00"/><rect x="10" y="12" width="3" height="1" fill="#008000"/><rect x="13" y="12" width="1" height="1" fill="#FFFF00"/><rect x="14" y="12" width="1" height="1" fill="#008000"/><rect x="15" y="12" width="1" height="1" fill="#000"/><rect x="0" y="13" width="7" height="1" fill="#008000"/><rect x="7" y="13" width="1" height="1" fill="#000"/><rect x="8" y="13" width="2" height="1" fill="#008000"/><rect x="10" y="13" width="3" height="1" fill="#FFFF00"/><rect x="13" y="13" width="2" height="1" fill="#008000"/><rect x="15" y="13" width="1" height="1" fill="#000"/><rect x="0" y="14" width="7" height="1" fill="#008000"/><rect x="7" y="14" width="1" height="1" fill="#000"/><rect x="8" y="14" width="3" height="1" fill="#008000"/><rect x="11" y="14" width="1" height="1" fill="#FFFF00"/><rect x="12" y="14" width="3" height="1" fill="#008000"/><rect x="15" y="14" width="1" height="1" fill="#000"/><rect x="0" y="15" width="16" height="1" fill="#000"/></svg>
<div class="t" style="top:100px;font-size:11px;line-height:11px;color:#000;letter-spacing:-0.08px;left:61px;">S-5 : Analog Increment with Optional Feedback</div>
<div style="left:31px;top:121px;width:10px;height:1px;background:repeating-linear-gradient(to right,#808080 0 1px,transparent 1px 2px);"></div>
<svg style="left:41px;top:113px;" width="16" height="16" viewBox="0 0 16 16" shape-rendering="crispEdges"><rect x="0" y="0" width="3" height="1" fill="#008000"/><rect x="3" y="0" width="1" height="1" fill="#FFFF00"/><rect x="4" y="0" width="3" height="1" fill="#008000"/><rect x="7" y="0" width="1" height="1" fill="#000"/><rect x="8" y="0" width="7" height="1" fill="#008000"/><rect x="15" y="0" width="1" height="1" fill="#000"/><rect x="0" y="1" width="2" height="1" fill="#008000"/><rect x="2" y="1" width="3" height="1" fill="#FFFF00"/><rect x="5" y="1" width="2" height="1" fill="#008000"/><rect x="7" y="1" width="1" height="1" fill="#000"/><rect x="8" y="1" width="7" height="1" fill="#008000"/><rect x="15" y="1" width="1" height="1" fill="#000"/><rect x="0" y="2" width="1" height="1" fill="#008000"/><rect x="1" y="2" width="1" height="1" fill="#FFFF00"/><rect x="2" y="2" width="3" height="1" fill="#008000"/><rect x="5" y="2" width="1" height="1" fill="#FFFF00"/><rect x="6" y="2" width="1" height="1" fill="#008000"/><rect x="7" y="2" width="1" height="1" fill="#000"/><rect x="8" y="2" width="7" height="1" fill="#008000"/><rect x="15" y="2" width="1" height="1" fill="#000"/><rect x="0" y="3" width="1" height="1" fill="#008000"/><rect x="1" y="3" width="1" height="1" fill="#FFFF00"/><rect x="2" y="3" width="3" height="1" fill="#008000"/><rect x="5" y="3" width="1" height="1" fill="#FFFF00"/><rect x="6" y="3" width="1" height="1" fill="#008000"/><rect x="7" y="3" width="1" height="1" fill="#000"/><rect x="8" y="3" width="7" height="1" fill="#008000"/><rect x="15" y="3" width="1" height="1" fill="#000"/><rect x="0" y="4" width="1" height="1" fill="#FFFF00"/><rect x="1" y="4" width="5" height="1" fill="#008000"/><rect x="6" y="4" width="1" height="1" fill="#FFFF00"/><rect x="7" y="4" width="1" height="1" fill="#000"/><rect x="8" y="4" width="7" height="1" fill="#008000"/><rect x="15" y="4" width="1" height="1" fill="#000"/><rect x="0" y="5" width="1" height="1" fill="#FFFF00"/><rect x="1" y="5" width="5" height="1" fill="#008000"/><rect x="6" y="5" width="1" height="1" fill="#FFFF00"/><rect x="7" y="5" width="1" height="1" fill="#000"/><rect x="8" y="5" width="7" height="1" fill="#008000"/><rect x="15" y="5" width="1" height="1" fill="#000"/><rect x="0" y="6" width="1" height="1" fill="#FFFF00"/><rect x="1" y="6" width="6" height="1" fill="#008000"/><rect x="7" y="6" width="1" height="1" fill="#FFFF00"/><rect x="8" y="6" width="7" height="1" fill="#008000"/><rect x="15" y="6" width="1" height="1" fill="#000"/><rect x="0" y="7" width="7" height="1" fill="#000"/><rect x="7" y="7" width="1" height="1" fill="#FFFF00"/><rect x="8" y="7" width="8" height="1" fill="#000"/><rect x="0" y="8" width="7" height="1" fill="#008000"/><rect x="7" y="8" width="1" height="1" fill="#FFFF00"/><rect x="8" y="8" width="6" height="1" fill="#008000"/><rect x="14" y="8" width="1" height="1" fill="#FFFF00"/><rect x="15" y="8" width="1" height="1" fill="#000"/><rect x="0" y="9" width="7" height="1" fill="#008000"/><rect x="7" y="9" width="1" height="1" fill="#000"/><rect x="8" y="9" width="1" height="1" fill="#FFFF00"/><rect x="9" y="9" width="5" height="1" fill="#008000"/><rect x="14" y="9" width="1" height="1" fill="#FFFF00"/><rect x="15" y="9" width="1" height="1" fill="#000"/><rect x="0" y="10" width="7" height="1" fill="#008000"/><rect x="7" y="10" width="1" height="1" fill="#000"/><rect x="8" y="10" width="1" height="1" fill="#FFFF00"/><rect x="9" y="10" width="5" height="1" fill="#008000"/><rect x="14" y="10" width="1" height="1" fill="#FFFF00"/><rect x="15" y="10" width="1" height="1" fill="#000"/><rect x="0" y="11" width="7" height="1" fill="#008000"/><rect x="7" y="11" width="1" height="1" fill="#000"/><rect x="8" y="11" width="1" height="1" fill="#008000"/><rect x="9" y="11" width="1" height="1" fill="#FFFF00"/><rect x="10" y="11" width="3" height="1" fill="#008000"/><rect x="13" y="11" width="1" height="1" fill="#FFFF00"/><rect x="14" y="11" width="1" height="1" fill="#008000"/><rect x="15" y="11" width="1" height="1" fill="#000"/><rect x="0" y="12" width="7" height="1" fill="#008000"/><rect x="7" y="12" width="1" height="1" fill="#000"/><rect x="8" y="12" width="1" height="1" fill="#008000"/><rect x="9" y="12" width="1" height="1" fill="#FFFF00"/><rect x="10" y="12" width="3" height="1" fill="#008000"/><rect x="13" y="12" width="1" height="1" fill="#FFFF00"/><rect x="14" y="12" width="1" height="1" fill="#008000"/><rect x="15" y="12" width="1" height="1" fill="#000"/><rect x="0" y="13" width="7" height="1" fill="#008000"/><rect x="7" y="13" width="1" height="1" fill="#000"/><rect x="8" y="13" width="2" height="1" fill="#008000"/><rect x="10" y="13" width="3" height="1" fill="#FFFF00"/><rect x="13" y="13" width="2" height="1" fill="#008000"/><rect x="15" y="13" width="1" height="1" fill="#000"/><rect x="0" y="14" width="7" height="1" fill="#008000"/><rect x="7" y="14" width="1" height="1" fill="#000"/><rect x="8" y="14" width="3" height="1" fill="#008000"/><rect x="11" y="14" width="1" height="1" fill="#FFFF00"/><rect x="12" y="14" width="3" height="1" fill="#008000"/><rect x="15" y="14" width="1" height="1" fill="#000"/><rect x="0" y="15" width="16" height="1" fill="#000"/></svg>
<div class="t" style="top:116px;font-size:11px;line-height:11px;color:#000;letter-spacing:-0.08px;left:61px;">S-6 : Analog Sum : Abschalttemperatur</div>
<div style="left:31px;top:137px;width:10px;height:1px;background:repeating-linear-gradient(to right,#808080 0 1px,transparent 1px 2px);"></div>
<svg style="left:41px;top:129px;" width="16" height="16" viewBox="0 0 16 16" shape-rendering="crispEdges"><rect x="0" y="0" width="3" height="1" fill="#008000"/><rect x="3" y="0" width="1" height="1" fill="#FFFF00"/><rect x="4" y="0" width="3" height="1" fill="#008000"/><rect x="7" y="0" width="1" height="1" fill="#000"/><rect x="8" y="0" width="7" height="1" fill="#008000"/><rect x="15" y="0" width="1" height="1" fill="#000"/><rect x="0" y="1" width="2" height="1" fill="#008000"/><rect x="2" y="1" width="3" height="1" fill="#FFFF00"/><rect x="5" y="1" width="2" height="1" fill="#008000"/><rect x="7" y="1" width="1" height="1" fill="#000"/><rect x="8" y="1" width="7" height="1" fill="#008000"/><rect x="15" y="1" width="1" height="1" fill="#000"/><rect x="0" y="2" width="1" height="1" fill="#008000"/><rect x="1" y="2" width="1" height="1" fill="#FFFF00"/><rect x="2" y="2" width="3" height="1" fill="#008000"/><rect x="5" y="2" width="1" height="1" fill="#FFFF00"/><rect x="6" y="2" width="1" height="1" fill="#008000"/><rect x="7" y="2" width="1" height="1" fill="#000"/><rect x="8" y="2" width="7" height="1" fill="#008000"/><rect x="15" y="2" width="1" height="1" fill="#000"/><rect x="0" y="3" width="1" height="1" fill="#008000"/><rect x="1" y="3" width="1" height="1" fill="#FFFF00"/><rect x="2" y="3" width="3" height="1" fill="#008000"/><rect x="5" y="3" width="1" height="1" fill="#FFFF00"/><rect x="6" y="3" width="1" height="1" fill="#008000"/><rect x="7" y="3" width="1" height="1" fill="#000"/><rect x="8" y="3" width="7" height="1" fill="#008000"/><rect x="15" y="3" width="1" height="1" fill="#000"/><rect x="0" y="4" width="1" height="1" fill="#FFFF00"/><rect x="1" y="4" width="5" height="1" fill="#008000"/><rect x="6" y="4" width="1" height="1" fill="#FFFF00"/><rect x="7" y="4" width="1" height="1" fill="#000"/><rect x="8" y="4" width="7" height="1" fill="#008000"/><rect x="15" y="4" width="1" height="1" fill="#000"/><rect x="0" y="5" width="1" height="1" fill="#FFFF00"/><rect x="1" y="5" width="5" height="1" fill="#008000"/><rect x="6" y="5" width="1" height="1" fill="#FFFF00"/><rect x="7" y="5" width="1" height="1" fill="#000"/><rect x="8" y="5" width="7" height="1" fill="#008000"/><rect x="15" y="5" width="1" height="1" fill="#000"/><rect x="0" y="6" width="1" height="1" fill="#FFFF00"/><rect x="1" y="6" width="6" height="1" fill="#008000"/><rect x="7" y="6" width="1" height="1" fill="#FFFF00"/><rect x="8" y="6" width="7" height="1" fill="#008000"/><rect x="15" y="6" width="1" height="1" fill="#000"/><rect x="0" y="7" width="7" height="1" fill="#000"/><rect x="7" y="7" width="1" height="1" fill="#FFFF00"/><rect x="8" y="7" width="8" height="1" fill="#000"/><rect x="0" y="8" width="7" height="1" fill="#008000"/><rect x="7" y="8" width="1" height="1" fill="#FFFF00"/><rect x="8" y="8" width="6" height="1" fill="#008000"/><rect x="14" y="8" width="1" height="1" fill="#FFFF00"/><rect x="15" y="8" width="1" height="1" fill="#000"/><rect x="0" y="9" width="7" height="1" fill="#008000"/><rect x="7" y="9" width="1" height="1" fill="#000"/><rect x="8" y="9" width="1" height="1" fill="#FFFF00"/><rect x="9" y="9" width="5" height="1" fill="#008000"/><rect x="14" y="9" width="1" height="1" fill="#FFFF00"/><rect x="15" y="9" width="1" height="1" fill="#000"/><rect x="0" y="10" width="7" height="1" fill="#008000"/><rect x="7" y="10" width="1" height="1" fill="#000"/><rect x="8" y="10" width="1" height="1" fill="#FFFF00"/><rect x="9" y="10" width="5" height="1" fill="#008000"/><rect x="14" y="10" width="1" height="1" fill="#FFFF00"/><rect x="15" y="10" width="1" height="1" fill="#000"/><rect x="0" y="11" width="7" height="1" fill="#008000"/><rect x="7" y="11" width="1" height="1" fill="#000"/><rect x="8" y="11" width="1" height="1" fill="#008000"/><rect x="9" y="11" width="1" height="1" fill="#FFFF00"/><rect x="10" y="11" width="3" height="1" fill="#008000"/><rect x="13" y="11" width="1" height="1" fill="#FFFF00"/><rect x="14" y="11" width="1" height="1" fill="#008000"/><rect x="15" y="11" width="1" height="1" fill="#000"/><rect x="0" y="12" width="7" height="1" fill="#008000"/><rect x="7" y="12" width="1" height="1" fill="#000"/><rect x="8" y="12" width="1" height="1" fill="#008000"/><rect x="9" y="12" width="1" height="1" fill="#FFFF00"/><rect x="10" y="12" width="3" height="1" fill="#008000"/><rect x="13" y="12" width="1" height="1" fill="#FFFF00"/><rect x="14" y="12" width="1" height="1" fill="#008000"/><rect x="15" y="12" width="1" height="1" fill="#000"/><rect x="0" y="13" width="7" height="1" fill="#008000"/><rect x="7" y="13" width="1" height="1" fill="#000"/><rect x="8" y="13" width="2" height="1" fill="#008000"/><rect x="10" y="13" width="3" height="1" fill="#FFFF00"/><rect x="13" y="13" width="2" height="1" fill="#008000"/><rect x="15" y="13" width="1" height="1" fill="#000"/><rect x="0" y="14" width="7" height="1" fill="#008000"/><rect x="7" y="14" width="1" height="1" fill="#000"/><rect x="8" y="14" width="3" height="1" fill="#008000"/><rect x="11" y="14" width="1" height="1" fill="#FFFF00"/><rect x="12" y="14" width="3" height="1" fill="#008000"/><rect x="15" y="14" width="1" height="1" fill="#000"/><rect x="0" y="15" width="16" height="1" fill="#000"/></svg>
<div class="t" style="top:132px;font-size:11px;line-height:11px;color:#000;letter-spacing:-0.08px;left:61px;">S-7 : Analog Sum : Anschalttemperatur</div>
<div style="left:31px;top:153px;width:10px;height:1px;background:repeating-linear-gradient(to right,#808080 0 1px,transparent 1px 2px);"></div>
<svg style="left:41px;top:145px;" width="16" height="16" viewBox="0 0 16 16" shape-rendering="crispEdges"><rect x="0" y="0" width="5" height="1" fill="#FFF"/><rect x="5" y="0" width="1" height="1" fill="#000"/><rect x="6" y="0" width="10" height="1" fill="#FFF"/><rect x="0" y="1" width="5" height="1" fill="#FFF"/><rect x="5" y="1" width="1" height="1" fill="#000"/><rect x="6" y="1" width="10" height="1" fill="#FFF"/><rect x="0" y="2" width="4" height="1" fill="#FFF"/><rect x="4" y="2" width="3" height="1" fill="#000"/><rect x="7" y="2" width="9" height="1" fill="#FFF"/><rect x="0" y="3" width="3" height="1" fill="#FFF"/><rect x="3" y="3" width="1" height="1" fill="#000"/><rect x="4" y="3" width="3" height="1" fill="#FFFF00"/><rect x="7" y="3" width="1" height="1" fill="#000"/><rect x="8" y="3" width="8" height="1" fill="#FFF"/><rect x="0" y="4" width="2" height="1" fill="#FFF"/><rect x="2" y="4" width="1" height="1" fill="#000"/><rect x="3" y="4" width="2" height="1" fill="#FFFF00"/><rect x="5" y="4" width="1" height="1" fill="#FF0000"/><rect x="6" y="4" width="2" height="1" fill="#FFFF00"/><rect x="8" y="4" width="1" height="1" fill="#000"/><rect x="9" y="4" width="3" height="1" fill="#FFF"/><rect x="12" y="4" width="1" height="1" fill="#000"/><rect x="13" y="4" width="3" height="1" fill="#FFF"/><rect x="0" y="5" width="1" height="1" fill="#FFF"/><rect x="1" y="5" width="1" height="1" fill="#000"/><rect x="2" y="5" width="2" height="1" fill="#FFFF00"/><rect x="4" y="5" width="1" height="1" fill="#FF0000"/><rect x="5" y="5" width="1" height="1" fill="#FFFF00"/><rect x="6" y="5" width="1" height="1" fill="#FF0000"/><rect x="7" y="5" width="2" height="1" fill="#FFFF00"/><rect x="9" y="5" width="1" height="1" fill="#000"/><rect x="10" y="5" width="3" height="1" fill="#FFF"/><rect x="13" y="5" width="1" height="1" fill="#000"/><rect x="14" y="5" width="2" height="1" fill="#FFF"/><rect x="0" y="6" width="1" height="1" fill="#000"/><rect x="1" y="6" width="5" height="1" fill="#FFFF00"/><rect x="6" y="6" width="1" height="1" fill="#FF0000"/><rect x="7" y="6" width="3" height="1" fill="#FFFF00"/><rect x="10" y="6" width="5" height="1" fill="#000"/><rect x="15" y="6" width="1" height="1" fill="#FFF"/><rect x="0" y="7" width="1" height="1" fill="#FFF"/><rect x="1" y="7" width="1" height="1" fill="#000"/><rect x="2" y="7" width="3" height="1" fill="#FFFF00"/><rect x="5" y="7" width="1" height="1" fill="#FF0000"/><rect x="6" y="7" width="3" height="1" fill="#FFFF00"/><rect x="9" y="7" width="1" height="1" fill="#000"/><rect x="10" y="7" width="3" height="1" fill="#FFF"/><rect x="13" y="7" width="1" height="1" fill="#000"/><rect x="14" y="7" width="2" height="1" fill="#FFF"/><rect x="0" y="8" width="2" height="1" fill="#FFF"/><rect x="2" y="8" width="1" height="1" fill="#000"/><rect x="3" y="8" width="5" height="1" fill="#FFFF00"/><rect x="8" y="8" width="1" height="1" fill="#000"/><rect x="9" y="8" width="3" height="1" fill="#FFF"/><rect x="12" y="8" width="1" height="1" fill="#000"/><rect x="13" y="8" width="3" height="1" fill="#FFF"/><rect x="0" y="9" width="3" height="1" fill="#FFF"/><rect x="3" y="9" width="1" height="1" fill="#000"/><rect x="4" y="9" width="1" height="1" fill="#FFFF00"/><rect x="5" y="9" width="1" height="1" fill="#FF0000"/><rect x="6" y="9" width="1" height="1" fill="#FFFF00"/><rect x="7" y="9" width="1" height="1" fill="#000"/><rect x="8" y="9" width="8" height="1" fill="#FFF"/><rect x="0" y="10" width="4" height="1" fill="#FFF"/><rect x="4" y="10" width="3" height="1" fill="#000"/><rect x="7" y="10" width="9" height="1" fill="#FFF"/><rect x="0" y="11" width="5" height="1" fill="#FFF"/><rect x="5" y="11" width="1" height="1" fill="#000"/><rect x="6" y="11" width="10" height="1" fill="#FFF"/><rect x="0" y="12" width="5" height="1" fill="#FFF"/><rect x="5" y="12" width="1" height="1" fill="#000"/><rect x="6" y="12" width="10" height="1" fill="#FFF"/><rect x="0" y="13" width="3" height="1" fill="#FFF"/><rect x="3" y="13" width="1" height="1" fill="#000"/><rect x="4" y="13" width="1" height="1" fill="#FFF"/><rect x="5" y="13" width="1" height="1" fill="#000"/><rect x="6" y="13" width="1" height="1" fill="#FFF"/><rect x="7" y="13" width="1" height="1" fill="#000"/><rect x="8" y="13" width="8" height="1" fill="#FFF"/><rect x="0" y="14" width="4" height="1" fill="#FFF"/><rect x="4" y="14" width="3" height="1" fill="#000"/><rect x="7" y="14" width="9" height="1" fill="#FFF"/><rect x="0" y="15" width="5" height="1" fill="#FFF"/><rect x="5" y="15" width="1" height="1" fill="#000"/><rect x="6" y="15" width="10" height="1" fill="#FFF"/></svg>
<div class="t" style="top:148px;font-size:11px;line-height:11px;color:#000;letter-spacing:-0.08px;left:61px;">S-8 : Analog Compare</div>
<div style="left:7px;top:165px;width:9px;height:9px;background:#FFF;box-shadow: inset 0 0 0 1px #808080;"></div>
<div style="left:9px;top:169px;width:5px;height:1px;background:#000;"></div>
<div style="left:11px;top:167px;width:1px;height:5px;background:#000;"></div>
<div style="left:17px;top:169px;width:5px;height:1px;background:repeating-linear-gradient(to right,#808080 0 1px,transparent 1px 2px);"></div>
<svg style="left:21px;top:161px;" width="16" height="16" viewBox="0 0 16 16" shape-rendering="crispEdges"><defs><pattern id="dth3" width="2" height="2" patternUnits="userSpaceOnUse"><rect width="2" height="2" fill="#FFFF00"/><rect width="1" height="1" fill="#FFF"/><rect x="1" y="1" width="1" height="1" fill="#FFF"/></pattern></defs><path d="M1.5 2.5 H7 L8.5 4 H14.5 V13.5 H1.5 Z" fill="url(#dth3)" stroke="#808080"/><path d="M2 14.5 H15.5 V4" fill="none" stroke="#000"/></svg>
<div class="t" style="top:164px;font-size:11px;line-height:11px;color:#000;letter-spacing:-0.1px;left:43px;">Signal List</div>
</div>
<div style="left:9px;top:982px;width:276px;height:16px;background:repeating-conic-gradient(#FFF 0 25%,#D4D0C8 0 50%) 0 0/2px 2px;"></div>
<div style="left:9px;top:982px;width:16px;height:16px;background:#D4D0C8;box-shadow: inset -1px -1px #404040, inset 1px 1px #FFFFFF, inset -2px -2px #808080;"></div>
<svg style="left:9px;top:982px;" width="16" height="16" viewBox="0 0 16 16" shape-rendering="crispEdges"><path d="M5 8 L9 4 V12 Z" fill="#000"/></svg>
<div style="left:25px;top:982px;width:230px;height:16px;background:#D4D0C8;box-shadow: inset -1px -1px #404040, inset 1px 1px #FFFFFF, inset -2px -2px #808080;"></div>
<div style="left:269px;top:982px;width:16px;height:16px;background:#D4D0C8;box-shadow: inset -1px -1px #404040, inset 1px 1px #FFFFFF, inset -2px -2px #808080;"></div>
<svg style="left:269px;top:982px;" width="16" height="16" viewBox="0 0 16 16" shape-rendering="crispEdges"><path d="M11 8 L7 4 V12 Z" fill="#000"/></svg>
<div style="left:611px;top:97px;width:278px;height:225px;background:#D4D0C8;box-shadow: inset -1px -1px #404040, inset 1px 1px #D4D0C8, inset -2px -2px #808080, inset 2px 2px #FFFFFF;"></div>
<div style="left:615px;top:101px;width:270px;height:18px;background:linear-gradient(to right,#808080,#C0C0C0);"></div>
<svg style="left:617px;top:102px;" width="16" height="16" viewBox="0 0 16 16" shape-rendering="crispEdges"><rect x="0" y="0" width="6" height="1" fill="#FFF"/><rect x="6" y="0" width="1" height="1" fill="#FFFF00"/><rect x="7" y="0" width="2" height="1" fill="#000"/><rect x="9" y="0" width="7" height="1" fill="#FFF"/><rect x="0" y="1" width="6" height="1" fill="#FFF"/><rect x="6" y="1" width="1" height="1" fill="#000"/><rect x="7" y="1" width="9" height="1" fill="#FFF"/><rect x="0" y="2" width="1" height="1" fill="#FFF"/><rect x="1" y="2" width="2" height="1" fill="#000"/><rect x="3" y="2" width="1" height="1" fill="#FFF"/><rect x="4" y="2" width="7" height="1" fill="#000"/><rect x="11" y="2" width="1" height="1" fill="#FFF"/><rect x="12" y="2" width="2" height="1" fill="#000"/><rect x="14" y="2" width="2" height="1" fill="#FFF"/><rect x="0" y="3" width="1" height="1" fill="#000"/><rect x="1" y="3" width="1" height="1" fill="#FFFF00"/><rect x="2" y="3" width="1" height="1" fill="#FFF"/><rect x="3" y="3" width="1" height="1" fill="#000"/><rect x="4" y="3" width="4" height="1" fill="#FFF"/><rect x="8" y="3" width="1" height="1" fill="#FF0000"/><rect x="9" y="3" width="2" height="1" fill="#FFF"/><rect x="11" y="3" width="1" height="1" fill="#000"/><rect x="12" y="3" width="1" height="1" fill="#FFFF00"/><rect x="13" y="3" width="1" height="1" fill="#FFF"/><rect x="14" y="3" width="1" height="1" fill="#000"/><rect x="15" y="3" width="1" height="1" fill="#FFF"/><rect x="0" y="4" width="1" height="1" fill="#000"/><rect x="1" y="4" width="1" height="1" fill="#FFF"/><rect x="2" y="4" width="1" height="1" fill="#000"/><rect x="3" y="4" width="2" height="1" fill="#FFF"/><rect x="5" y="4" width="1" height="1" fill="#FF0000"/><rect x="6" y="4" width="4" height="1" fill="#FFF"/><rect x="10" y="4" width="1" height="1" fill="#FF0000"/><rect x="11" y="4" width="1" height="1" fill="#FFF"/><rect x="12" y="4" width="1" height="1" fill="#000"/><rect x="13" y="4" width="1" height="1" fill="#FFF"/><rect x="14" y="4" width="1" height="1" fill="#000"/><rect x="15" y="4" width="1" height="1" fill="#FFF"/><rect x="0" y="5" width="1" height="1" fill="#FFF"/><rect x="1" y="5" width="1" height="1" fill="#000"/><rect x="2" y="5" width="1" height="1" fill="#FFF"/><rect x="3" y="5" width="1" height="1" fill="#FF0000"/><rect x="4" y="5" width="1" height="1" fill="#000"/><rect x="5" y="5" width="3" height="1" fill="#FFF"/><rect x="8" y="5" width="1" height="1" fill="#000"/><rect x="9" y="5" width="4" height="1" fill="#FFF"/><rect x="13" y="5" width="1" height="1" fill="#000"/><rect x="14" y="5" width="2" height="1" fill="#FFF"/><rect x="0" y="6" width="1" height="1" fill="#000"/><rect x="1" y="6" width="1" height="1" fill="#FFFF00"/><rect x="2" y="6" width="3" height="1" fill="#FFF"/><rect x="5" y="6" width="1" height="1" fill="#000"/><rect x="6" y="6" width="2" height="1" fill="#FFF"/><rect x="8" y="6" width="1" height="1" fill="#000"/><rect x="9" y="6" width="3" height="1" fill="#FFF"/><rect x="12" y="6" width="1" height="1" fill="#FF0000"/><rect x="13" y="6" width="1" height="1" fill="#FFF"/><rect x="14" y="6" width="1" height="1" fill="#000"/><rect x="15" y="6" width="1" height="1" fill="#FFF"/><rect x="0" y="7" width="1" height="1" fill="#000"/><rect x="1" y="7" width="1" height="1" fill="#FFFF00"/><rect x="2" y="7" width="4" height="1" fill="#FFF"/><rect x="6" y="7" width="1" height="1" fill="#000"/><rect x="7" y="7" width="1" height="1" fill="#FFF"/><rect x="8" y="7" width="1" height="1" fill="#000"/><rect x="9" y="7" width="5" height="1" fill="#FFF"/><rect x="14" y="7" width="1" height="1" fill="#000"/><rect x="15" y="7" width="1" height="1" fill="#FFF"/><rect x="0" y="8" width="1" height="1" fill="#000"/><rect x="1" y="8" width="1" height="1" fill="#FFF"/><rect x="2" y="8" width="1" height="1" fill="#FF0000"/><rect x="3" y="8" width="4" height="1" fill="#FFF"/><rect x="7" y="8" width="2" height="1" fill="#000"/><rect x="9" y="8" width="3" height="1" fill="#FFF"/><rect x="12" y="8" width="2" height="1" fill="#FF0000"/><rect x="14" y="8" width="1" height="1" fill="#000"/><rect x="15" y="8" width="1" height="1" fill="#FFF"/><rect x="0" y="9" width="1" height="1" fill="#000"/><rect x="1" y="9" width="1" height="1" fill="#FFFF00"/><rect x="2" y="9" width="5" height="1" fill="#FFF"/><rect x="7" y="9" width="2" height="1" fill="#000"/><rect x="9" y="9" width="5" height="1" fill="#FFF"/><rect x="14" y="9" width="1" height="1" fill="#000"/><rect x="15" y="9" width="1" height="1" fill="#FFF"/><rect x="0" y="10" width="1" height="1" fill="#000"/><rect x="1" y="10" width="5" height="1" fill="#FFF"/><rect x="6" y="10" width="1" height="1" fill="#FF0000"/><rect x="7" y="10" width="7" height="1" fill="#FFF"/><rect x="14" y="10" width="1" height="1" fill="#000"/><rect x="15" y="10" width="1" height="1" fill="#FFF"/><rect x="0" y="11" width="1" height="1" fill="#000"/><rect x="1" y="11" width="1" height="1" fill="#FFFF00"/><rect x="2" y="11" width="1" height="1" fill="#FF0000"/><rect x="3" y="11" width="2" height="1" fill="#FFF"/><rect x="5" y="11" width="1" height="1" fill="#FF0000"/><rect x="6" y="11" width="6" height="1" fill="#FFF"/><rect x="12" y="11" width="1" height="1" fill="#FF0000"/><rect x="13" y="11" width="1" height="1" fill="#FFF"/><rect x="14" y="11" width="1" height="1" fill="#000"/><rect x="15" y="11" width="1" height="1" fill="#FFF"/><rect x="0" y="12" width="1" height="1" fill="#FFF"/><rect x="1" y="12" width="1" height="1" fill="#000"/><rect x="2" y="12" width="2" height="1" fill="#FFF"/><rect x="4" y="12" width="1" height="1" fill="#FF0000"/><rect x="5" y="12" width="8" height="1" fill="#FFF"/><rect x="13" y="12" width="1" height="1" fill="#000"/><rect x="14" y="12" width="2" height="1" fill="#FFF"/><rect x="0" y="13" width="1" height="1" fill="#FFF"/><rect x="1" y="13" width="1" height="1" fill="#000"/><rect x="2" y="13" width="2" height="1" fill="#FFF"/><rect x="4" y="13" width="1" height="1" fill="#FF0000"/><rect x="5" y="13" width="2" height="1" fill="#FFF"/><rect x="7" y="13" width="1" height="1" fill="#FF0000"/><rect x="8" y="13" width="2" height="1" fill="#FFF"/><rect x="10" y="13" width="1" height="1" fill="#FF0000"/><rect x="11" y="13" width="2" height="1" fill="#FFF"/><rect x="13" y="13" width="1" height="1" fill="#000"/><rect x="14" y="13" width="2" height="1" fill="#FFF"/><rect x="0" y="14" width="2" height="1" fill="#FFF"/><rect x="2" y="14" width="2" height="1" fill="#000"/><rect x="4" y="14" width="1" height="1" fill="#FFF"/><rect x="5" y="14" width="1" height="1" fill="#FFFF00"/><rect x="6" y="14" width="1" height="1" fill="#FFF"/><rect x="7" y="14" width="1" height="1" fill="#FFFF00"/><rect x="8" y="14" width="1" height="1" fill="#FFF"/><rect x="9" y="14" width="1" height="1" fill="#FFFF00"/><rect x="10" y="14" width="1" height="1" fill="#FFF"/><rect x="11" y="14" width="2" height="1" fill="#000"/><rect x="13" y="14" width="3" height="1" fill="#FFF"/><rect x="0" y="15" width="4" height="1" fill="#FFF"/><rect x="4" y="15" width="7" height="1" fill="#000"/><rect x="11" y="15" width="5" height="1" fill="#FFF"/></svg>
<div style="left:635px;top:101px;width:196px;height:18px;overflow:hidden;">
<div class="t" style="top:4px;font-size:11px;line-height:11px;color:#D4D0C8;font-weight:bold;letter-spacing:0.4px;left:-1px;">S-2 : Initialize : One Shot</div>
</div>
<div style="left:867px;top:103px;width:16px;height:14px;background:#D4D0C8;box-shadow: inset -1px -1px #404040, inset 1px 1px #FFFFFF, inset -2px -2px #808080;"></div>
<svg style="left:867px;top:103px;" width="16" height="14" viewBox="0 0 16 14" shape-rendering="crispEdges"><rect x="4" y="3" width="2" height="1" fill="#000"/><rect x="10" y="3" width="2" height="1" fill="#000"/><rect x="5" y="4" width="2" height="1" fill="#000"/><rect x="9" y="4" width="2" height="1" fill="#000"/><rect x="6" y="5" width="4" height="1" fill="#000"/><rect x="7" y="6" width="2" height="1" fill="#000"/><rect x="6" y="7" width="4" height="1" fill="#000"/><rect x="5" y="8" width="2" height="1" fill="#000"/><rect x="9" y="8" width="2" height="1" fill="#000"/><rect x="4" y="9" width="2" height="1" fill="#000"/><rect x="10" y="9" width="2" height="1" fill="#000"/></svg>
<div style="left:849px;top:103px;width:16px;height:14px;background:#D4D0C8;box-shadow: inset -1px -1px #404040, inset 1px 1px #FFFFFF, inset -2px -2px #808080;"></div>
<svg style="left:849px;top:103px;" width="16" height="14" viewBox="0 0 16 14" shape-rendering="crispEdges"><rect x="3.5" y="2.5" width="8" height="8" fill="none" stroke="#000"/><rect x="3" y="2" width="9" height="2" fill="#000"/></svg>
<div style="left:833px;top:103px;width:16px;height:14px;background:#D4D0C8;box-shadow: inset -1px -1px #404040, inset 1px 1px #FFFFFF, inset -2px -2px #808080;"></div>
<svg style="left:833px;top:103px;" width="16" height="14" viewBox="0 0 16 14" shape-rendering="crispEdges"><rect x="4" y="9" width="6" height="2" fill="#000"/></svg>
<div style="left:615px;top:120px;width:270px;height:198px;background:#FFF;"></div>
<div style="left:705px;top:122px;width:90px;height:146px;background:#000;"></div>
<div style="left:706px;top:123px;width:88px;height:144px;background:#FFFFFF;"></div>
<div style="left:707px;top:124px;width:87px;height:143px;background:#808080;"></div>
<div style="left:707px;top:124px;width:86px;height:142px;background:#C0C0C0;"></div>
<div style="left:710px;top:127px;width:81px;height:20px;background:#C0C0C0;box-shadow: inset 1px 1px #808080, inset -1px -1px #FFFFFF;"></div>
<div class="t" style="top:131px;font-size:13px;line-height:13px;color:#000;left:710px;width:81px;text-align:center;">One Shot</div>
<div style="left:620px;top:160px;width:85px;height:15px;background:#808080;"></div>
<div class="t" style="top:161px;font-size:13px;line-height:13px;color:#FFF;left:622px;">1</div>
<div style="left:620px;top:176px;width:80px;height:2px;background:#0000FF;"></div>
<svg style="left:699px;top:172px;shape-rendering:auto" width="6" height="10" viewBox="0 0 6 10" shape-rendering="crispEdges"><path d="M0 0 L6 5 L0 10 Z" fill="#000"/></svg>
<div style="left:620px;top:200px;width:80px;height:2px;background:#0000FF;"></div>
<svg style="left:699px;top:196px;shape-rendering:auto" width="6" height="10" viewBox="0 0 6 10" shape-rendering="crispEdges"><path d="M0 0 L6 5 L0 10 Z" fill="#000"/></svg>
<div style="left:620px;top:224px;width:80px;height:2px;background:#0000FF;"></div>
<svg style="left:699px;top:220px;shape-rendering:auto" width="6" height="10" viewBox="0 0 6 10" shape-rendering="crispEdges"><path d="M0 0 L6 5 L0 10 Z" fill="#000"/></svg>
<div class="t" style="top:162px;font-size:13px;line-height:13px;color:#C00000;left:710px;">trig</div>
<div class="t" style="top:186px;font-size:13px;line-height:13px;color:#C00000;left:710px;">[trig*]</div>
<div class="t" style="top:210px;font-size:13px;line-height:13px;color:#C00000;left:710px;">[reset]</div>
<div class="t" style="top:162px;font-size:13px;line-height:13px;color:#C00000;right:calc(100% - 791px);text-align:right;">out</div>
<div class="t" style="top:186px;font-size:13px;line-height:13px;color:#C00000;right:calc(100% - 791px);text-align:right;">[out*]</div>
<div class="t" style="top:161px;font-size:13px;line-height:13px;color:#000;left:797px;">Initialize</div>
<div style="left:795px;top:176px;width:79px;height:2px;background:#0000FF;"></div>
<svg style="left:873px;top:172px;shape-rendering:auto" width="7" height="10" viewBox="0 0 7 10" shape-rendering="crispEdges"><path d="M0 0 L7 5 L0 10 Z" fill="#000"/></svg>
<div style="left:795px;top:200px;width:79px;height:2px;background:#0000FF;"></div>
<svg style="left:873px;top:196px;shape-rendering:auto" width="7" height="10" viewBox="0 0 7 10" shape-rendering="crispEdges"><path d="M0 0 L7 5 L0 10 Z" fill="#000"/></svg>
<div style="left:710px;top:234px;width:81px;height:1px;background:#808080;"></div>
<div style="left:710px;top:235px;width:81px;height:1px;background:#FFFFFF;"></div>
<div style="left:709px;top:241px;width:83px;height:18px;background:#C0C0C0;box-shadow: inset 1px 1px #808080, inset -1px -1px #FFFFFF;"></div>
<div class="t" style="top:244px;font-size:13px;line-height:13px;color:#000;left:710px;">1t</div>
<div class="t" style="top:244px;font-size:13px;line-height:13px;color:#C00000;right:calc(100% - 701px);text-align:right;">pulse_time</div>
<div style="left:889px;top:96px;width:252px;height:226px;background:#D4D0C8;box-shadow: inset -1px -1px #404040, inset 1px 1px #D4D0C8, inset -2px -2px #808080, inset 2px 2px #FFFFFF;"></div>
<div style="left:893px;top:100px;width:244px;height:18px;background:linear-gradient(to right,#808080,#C0C0C0);"></div>
<svg style="left:895px;top:101px;" width="16" height="16" viewBox="0 0 16 16" shape-rendering="crispEdges"><rect x="0" y="0" width="3" height="1" fill="#008000"/><rect x="3" y="0" width="1" height="1" fill="#FFFF00"/><rect x="4" y="0" width="3" height="1" fill="#008000"/><rect x="7" y="0" width="1" height="1" fill="#000"/><rect x="8" y="0" width="7" height="1" fill="#008000"/><rect x="15" y="0" width="1" height="1" fill="#000"/><rect x="0" y="1" width="2" height="1" fill="#008000"/><rect x="2" y="1" width="3" height="1" fill="#FFFF00"/><rect x="5" y="1" width="2" height="1" fill="#008000"/><rect x="7" y="1" width="1" height="1" fill="#000"/><rect x="8" y="1" width="7" height="1" fill="#008000"/><rect x="15" y="1" width="1" height="1" fill="#000"/><rect x="0" y="2" width="1" height="1" fill="#008000"/><rect x="1" y="2" width="1" height="1" fill="#FFFF00"/><rect x="2" y="2" width="3" height="1" fill="#008000"/><rect x="5" y="2" width="1" height="1" fill="#FFFF00"/><rect x="6" y="2" width="1" height="1" fill="#008000"/><rect x="7" y="2" width="1" height="1" fill="#000"/><rect x="8" y="2" width="7" height="1" fill="#008000"/><rect x="15" y="2" width="1" height="1" fill="#000"/><rect x="0" y="3" width="1" height="1" fill="#008000"/><rect x="1" y="3" width="1" height="1" fill="#FFFF00"/><rect x="2" y="3" width="3" height="1" fill="#008000"/><rect x="5" y="3" width="1" height="1" fill="#FFFF00"/><rect x="6" y="3" width="1" height="1" fill="#008000"/><rect x="7" y="3" width="1" height="1" fill="#000"/><rect x="8" y="3" width="7" height="1" fill="#008000"/><rect x="15" y="3" width="1" height="1" fill="#000"/><rect x="0" y="4" width="1" height="1" fill="#FFFF00"/><rect x="1" y="4" width="5" height="1" fill="#008000"/><rect x="6" y="4" width="1" height="1" fill="#FFFF00"/><rect x="7" y="4" width="1" height="1" fill="#000"/><rect x="8" y="4" width="7" height="1" fill="#008000"/><rect x="15" y="4" width="1" height="1" fill="#000"/><rect x="0" y="5" width="1" height="1" fill="#FFFF00"/><rect x="1" y="5" width="5" height="1" fill="#008000"/><rect x="6" y="5" width="1" height="1" fill="#FFFF00"/><rect x="7" y="5" width="1" height="1" fill="#000"/><rect x="8" y="5" width="7" height="1" fill="#008000"/><rect x="15" y="5" width="1" height="1" fill="#000"/><rect x="0" y="6" width="1" height="1" fill="#FFFF00"/><rect x="1" y="6" width="6" height="1" fill="#008000"/><rect x="7" y="6" width="1" height="1" fill="#FFFF00"/><rect x="8" y="6" width="7" height="1" fill="#008000"/><rect x="15" y="6" width="1" height="1" fill="#000"/><rect x="0" y="7" width="7" height="1" fill="#000"/><rect x="7" y="7" width="1" height="1" fill="#FFFF00"/><rect x="8" y="7" width="8" height="1" fill="#000"/><rect x="0" y="8" width="7" height="1" fill="#008000"/><rect x="7" y="8" width="1" height="1" fill="#FFFF00"/><rect x="8" y="8" width="6" height="1" fill="#008000"/><rect x="14" y="8" width="1" height="1" fill="#FFFF00"/><rect x="15" y="8" width="1" height="1" fill="#000"/><rect x="0" y="9" width="7" height="1" fill="#008000"/><rect x="7" y="9" width="1" height="1" fill="#000"/><rect x="8" y="9" width="1" height="1" fill="#FFFF00"/><rect x="9" y="9" width="5" height="1" fill="#008000"/><rect x="14" y="9" width="1" height="1" fill="#FFFF00"/><rect x="15" y="9" width="1" height="1" fill="#000"/><rect x="0" y="10" width="7" height="1" fill="#008000"/><rect x="7" y="10" width="1" height="1" fill="#000"/><rect x="8" y="10" width="1" height="1" fill="#FFFF00"/><rect x="9" y="10" width="5" height="1" fill="#008000"/><rect x="14" y="10" width="1" height="1" fill="#FFFF00"/><rect x="15" y="10" width="1" height="1" fill="#000"/><rect x="0" y="11" width="7" height="1" fill="#008000"/><rect x="7" y="11" width="1" height="1" fill="#000"/><rect x="8" y="11" width="1" height="1" fill="#008000"/><rect x="9" y="11" width="1" height="1" fill="#FFFF00"/><rect x="10" y="11" width="3" height="1" fill="#008000"/><rect x="13" y="11" width="1" height="1" fill="#FFFF00"/><rect x="14" y="11" width="1" height="1" fill="#008000"/><rect x="15" y="11" width="1" height="1" fill="#000"/><rect x="0" y="12" width="7" height="1" fill="#008000"/><rect x="7" y="12" width="1" height="1" fill="#000"/><rect x="8" y="12" width="1" height="1" fill="#008000"/><rect x="9" y="12" width="1" height="1" fill="#FFFF00"/><rect x="10" y="12" width="3" height="1" fill="#008000"/><rect x="13" y="12" width="1" height="1" fill="#FFFF00"/><rect x="14" y="12" width="1" height="1" fill="#008000"/><rect x="15" y="12" width="1" height="1" fill="#000"/><rect x="0" y="13" width="7" height="1" fill="#008000"/><rect x="7" y="13" width="1" height="1" fill="#000"/><rect x="8" y="13" width="2" height="1" fill="#008000"/><rect x="10" y="13" width="3" height="1" fill="#FFFF00"/><rect x="13" y="13" width="2" height="1" fill="#008000"/><rect x="15" y="13" width="1" height="1" fill="#000"/><rect x="0" y="14" width="7" height="1" fill="#008000"/><rect x="7" y="14" width="1" height="1" fill="#000"/><rect x="8" y="14" width="3" height="1" fill="#008000"/><rect x="11" y="14" width="1" height="1" fill="#FFFF00"/><rect x="12" y="14" width="3" height="1" fill="#008000"/><rect x="15" y="14" width="1" height="1" fill="#000"/><rect x="0" y="15" width="16" height="1" fill="#000"/></svg>
<div style="left:913px;top:100px;width:170px;height:18px;overflow:hidden;">
<div class="t" style="top:4px;font-size:11px;line-height:11px;color:#D4D0C8;font-weight:bold;letter-spacing:0.4px;left:-1px;">S-3 : Hysterese : Analog Initi...</div>
</div>
<div style="left:1119px;top:102px;width:16px;height:14px;background:#D4D0C8;box-shadow: inset -1px -1px #404040, inset 1px 1px #FFFFFF, inset -2px -2px #808080;"></div>
<svg style="left:1119px;top:102px;" width="16" height="14" viewBox="0 0 16 14" shape-rendering="crispEdges"><rect x="4" y="3" width="2" height="1" fill="#000"/><rect x="10" y="3" width="2" height="1" fill="#000"/><rect x="5" y="4" width="2" height="1" fill="#000"/><rect x="9" y="4" width="2" height="1" fill="#000"/><rect x="6" y="5" width="4" height="1" fill="#000"/><rect x="7" y="6" width="2" height="1" fill="#000"/><rect x="6" y="7" width="4" height="1" fill="#000"/><rect x="5" y="8" width="2" height="1" fill="#000"/><rect x="9" y="8" width="2" height="1" fill="#000"/><rect x="4" y="9" width="2" height="1" fill="#000"/><rect x="10" y="9" width="2" height="1" fill="#000"/></svg>
<div style="left:1101px;top:102px;width:16px;height:14px;background:#D4D0C8;box-shadow: inset -1px -1px #404040, inset 1px 1px #FFFFFF, inset -2px -2px #808080;"></div>
<svg style="left:1101px;top:102px;" width="16" height="14" viewBox="0 0 16 14" shape-rendering="crispEdges"><rect x="3.5" y="2.5" width="8" height="8" fill="none" stroke="#000"/><rect x="3" y="2" width="9" height="2" fill="#000"/></svg>
<div style="left:1085px;top:102px;width:16px;height:14px;background:#D4D0C8;box-shadow: inset -1px -1px #404040, inset 1px 1px #FFFFFF, inset -2px -2px #808080;"></div>
<svg style="left:1085px;top:102px;" width="16" height="14" viewBox="0 0 16 14" shape-rendering="crispEdges"><rect x="4" y="9" width="6" height="2" fill="#000"/></svg>
<div style="left:893px;top:119px;width:244px;height:199px;background:#FFF;"></div>
<div style="left:974px;top:121px;width:81px;height:64px;background:#000;"></div>
<div style="left:975px;top:122px;width:79px;height:62px;background:#FFFFFF;"></div>
<div style="left:976px;top:123px;width:78px;height:61px;background:#808080;"></div>
<div style="left:976px;top:123px;width:77px;height:60px;background:#C0C0C0;"></div>
<div style="left:979px;top:126px;width:72px;height:20px;background:#C0C0C0;box-shadow: inset 1px 1px #808080, inset -1px -1px #FFFFFF;"></div>
<div class="t" style="top:130px;font-size:13px;line-height:13px;color:#000;left:980px;">Analog Ini...</div>
<div style="left:898px;top:159px;width:76px;height:15px;background:#808080;"></div>
<div class="t" style="top:160px;font-size:13px;line-height:13px;color:#FFF;left:900px;">Initialize</div>
<div style="left:898px;top:175px;width:71px;height:2px;background:#0000FF;"></div>
<svg style="left:968px;top:171px;shape-rendering:auto" width="6" height="10" viewBox="0 0 6 10" shape-rendering="crispEdges"><path d="M0.6 0.8 L5.4 5 L0.6 9.2 Z" fill="#FFF" stroke="#000" stroke-width="1.2"/></svg>
<div style="left:978px;top:158px;width:73px;height:18px;background:#C0C0C0;box-shadow: inset 1px 1px #808080, inset -1px -1px #FFFFFF;"></div>
<div class="t" style="top:161px;font-size:13px;line-height:13px;color:#000;left:979px;">30d</div>
<div class="t" style="top:160px;font-size:13px;line-height:13px;color:#000;left:1057px;">Hysterese</div>
<div style="left:1055px;top:175px;width:71px;height:2px;background:#FF0000;"></div>
<svg style="left:1125px;top:171px;shape-rendering:auto" width="7" height="10" viewBox="0 0 7 10" shape-rendering="crispEdges"><path d="M0.6 0.8 L6.4 5 L0.6 9.2 Z" fill="#FFF" stroke="#000" stroke-width="1.2"/></svg>
<div style="left:1141px;top:97px;width:250px;height:225px;background:#D4D0C8;box-shadow: inset -1px -1px #404040, inset 1px 1px #D4D0C8, inset -2px -2px #808080, inset 2px 2px #FFFFFF;"></div>
<div style="left:1145px;top:101px;width:242px;height:18px;background:linear-gradient(to right,#808080,#C0C0C0);"></div>
<svg style="left:1147px;top:102px;" width="16" height="16" viewBox="0 0 16 16" shape-rendering="crispEdges"><rect x="0" y="0" width="3" height="1" fill="#008000"/><rect x="3" y="0" width="1" height="1" fill="#FFFF00"/><rect x="4" y="0" width="3" height="1" fill="#008000"/><rect x="7" y="0" width="1" height="1" fill="#000"/><rect x="8" y="0" width="7" height="1" fill="#008000"/><rect x="15" y="0" width="1" height="1" fill="#000"/><rect x="0" y="1" width="2" height="1" fill="#008000"/><rect x="2" y="1" width="3" height="1" fill="#FFFF00"/><rect x="5" y="1" width="2" height="1" fill="#008000"/><rect x="7" y="1" width="1" height="1" fill="#000"/><rect x="8" y="1" width="7" height="1" fill="#008000"/><rect x="15" y="1" width="1" height="1" fill="#000"/><rect x="0" y="2" width="1" height="1" fill="#008000"/><rect x="1" y="2" width="1" height="1" fill="#FFFF00"/><rect x="2" y="2" width="3" height="1" fill="#008000"/><rect x="5" y="2" width="1" height="1" fill="#FFFF00"/><rect x="6" y="2" width="1" height="1" fill="#008000"/><rect x="7" y="2" width="1" height="1" fill="#000"/><rect x="8" y="2" width="7" height="1" fill="#008000"/><rect x="15" y="2" width="1" height="1" fill="#000"/><rect x="0" y="3" width="1" height="1" fill="#008000"/><rect x="1" y="3" width="1" height="1" fill="#FFFF00"/><rect x="2" y="3" width="3" height="1" fill="#008000"/><rect x="5" y="3" width="1" height="1" fill="#FFFF00"/><rect x="6" y="3" width="1" height="1" fill="#008000"/><rect x="7" y="3" width="1" height="1" fill="#000"/><rect x="8" y="3" width="7" height="1" fill="#008000"/><rect x="15" y="3" width="1" height="1" fill="#000"/><rect x="0" y="4" width="1" height="1" fill="#FFFF00"/><rect x="1" y="4" width="5" height="1" fill="#008000"/><rect x="6" y="4" width="1" height="1" fill="#FFFF00"/><rect x="7" y="4" width="1" height="1" fill="#000"/><rect x="8" y="4" width="7" height="1" fill="#008000"/><rect x="15" y="4" width="1" height="1" fill="#000"/><rect x="0" y="5" width="1" height="1" fill="#FFFF00"/><rect x="1" y="5" width="5" height="1" fill="#008000"/><rect x="6" y="5" width="1" height="1" fill="#FFFF00"/><rect x="7" y="5" width="1" height="1" fill="#000"/><rect x="8" y="5" width="7" height="1" fill="#008000"/><rect x="15" y="5" width="1" height="1" fill="#000"/><rect x="0" y="6" width="1" height="1" fill="#FFFF00"/><rect x="1" y="6" width="6" height="1" fill="#008000"/><rect x="7" y="6" width="1" height="1" fill="#FFFF00"/><rect x="8" y="6" width="7" height="1" fill="#008000"/><rect x="15" y="6" width="1" height="1" fill="#000"/><rect x="0" y="7" width="7" height="1" fill="#000"/><rect x="7" y="7" width="1" height="1" fill="#FFFF00"/><rect x="8" y="7" width="8" height="1" fill="#000"/><rect x="0" y="8" width="7" height="1" fill="#008000"/><rect x="7" y="8" width="1" height="1" fill="#FFFF00"/><rect x="8" y="8" width="6" height="1" fill="#008000"/><rect x="14" y="8" width="1" height="1" fill="#FFFF00"/><rect x="15" y="8" width="1" height="1" fill="#000"/><rect x="0" y="9" width="7" height="1" fill="#008000"/><rect x="7" y="9" width="1" height="1" fill="#000"/><rect x="8" y="9" width="1" height="1" fill="#FFFF00"/><rect x="9" y="9" width="5" height="1" fill="#008000"/><rect x="14" y="9" width="1" height="1" fill="#FFFF00"/><rect x="15" y="9" width="1" height="1" fill="#000"/><rect x="0" y="10" width="7" height="1" fill="#008000"/><rect x="7" y="10" width="1" height="1" fill="#000"/><rect x="8" y="10" width="1" height="1" fill="#FFFF00"/><rect x="9" y="10" width="5" height="1" fill="#008000"/><rect x="14" y="10" width="1" height="1" fill="#FFFF00"/><rect x="15" y="10" width="1" height="1" fill="#000"/><rect x="0" y="11" width="7" height="1" fill="#008000"/><rect x="7" y="11" width="1" height="1" fill="#000"/><rect x="8" y="11" width="1" height="1" fill="#008000"/><rect x="9" y="11" width="1" height="1" fill="#FFFF00"/><rect x="10" y="11" width="3" height="1" fill="#008000"/><rect x="13" y="11" width="1" height="1" fill="#FFFF00"/><rect x="14" y="11" width="1" height="1" fill="#008000"/><rect x="15" y="11" width="1" height="1" fill="#000"/><rect x="0" y="12" width="7" height="1" fill="#008000"/><rect x="7" y="12" width="1" height="1" fill="#000"/><rect x="8" y="12" width="1" height="1" fill="#008000"/><rect x="9" y="12" width="1" height="1" fill="#FFFF00"/><rect x="10" y="12" width="3" height="1" fill="#008000"/><rect x="13" y="12" width="1" height="1" fill="#FFFF00"/><rect x="14" y="12" width="1" height="1" fill="#008000"/><rect x="15" y="12" width="1" height="1" fill="#000"/><rect x="0" y="13" width="7" height="1" fill="#008000"/><rect x="7" y="13" width="1" height="1" fill="#000"/><rect x="8" y="13" width="2" height="1" fill="#008000"/><rect x="10" y="13" width="3" height="1" fill="#FFFF00"/><rect x="13" y="13" width="2" height="1" fill="#008000"/><rect x="15" y="13" width="1" height="1" fill="#000"/><rect x="0" y="14" width="7" height="1" fill="#008000"/><rect x="7" y="14" width="1" height="1" fill="#000"/><rect x="8" y="14" width="3" height="1" fill="#008000"/><rect x="11" y="14" width="1" height="1" fill="#FFFF00"/><rect x="12" y="14" width="3" height="1" fill="#008000"/><rect x="15" y="14" width="1" height="1" fill="#000"/><rect x="0" y="15" width="16" height="1" fill="#000"/></svg>
<div style="left:1165px;top:101px;width:168px;height:18px;overflow:hidden;">
<div class="t" style="top:4px;font-size:11px;line-height:11px;color:#D4D0C8;font-weight:bold;letter-spacing:0.4px;left:-1px;">S-4 : Hysterese- : Analog Ini...</div>
</div>
<div style="left:1369px;top:103px;width:16px;height:14px;background:#D4D0C8;box-shadow: inset -1px -1px #404040, inset 1px 1px #FFFFFF, inset -2px -2px #808080;"></div>
<svg style="left:1369px;top:103px;" width="16" height="14" viewBox="0 0 16 14" shape-rendering="crispEdges"><rect x="4" y="3" width="2" height="1" fill="#000"/><rect x="10" y="3" width="2" height="1" fill="#000"/><rect x="5" y="4" width="2" height="1" fill="#000"/><rect x="9" y="4" width="2" height="1" fill="#000"/><rect x="6" y="5" width="4" height="1" fill="#000"/><rect x="7" y="6" width="2" height="1" fill="#000"/><rect x="6" y="7" width="4" height="1" fill="#000"/><rect x="5" y="8" width="2" height="1" fill="#000"/><rect x="9" y="8" width="2" height="1" fill="#000"/><rect x="4" y="9" width="2" height="1" fill="#000"/><rect x="10" y="9" width="2" height="1" fill="#000"/></svg>
<div style="left:1351px;top:103px;width:16px;height:14px;background:#D4D0C8;box-shadow: inset -1px -1px #404040, inset 1px 1px #FFFFFF, inset -2px -2px #808080;"></div>
<svg style="left:1351px;top:103px;" width="16" height="14" viewBox="0 0 16 14" shape-rendering="crispEdges"><rect x="3.5" y="2.5" width="8" height="8" fill="none" stroke="#000"/><rect x="3" y="2" width="9" height="2" fill="#000"/></svg>
<div style="left:1335px;top:103px;width:16px;height:14px;background:#D4D0C8;box-shadow: inset -1px -1px #404040, inset 1px 1px #FFFFFF, inset -2px -2px #808080;"></div>
<svg style="left:1335px;top:103px;" width="16" height="14" viewBox="0 0 16 14" shape-rendering="crispEdges"><rect x="4" y="9" width="6" height="2" fill="#000"/></svg>
<div style="left:1145px;top:120px;width:242px;height:198px;background:#FFF;"></div>
<div style="left:1225px;top:122px;width:80px;height:64px;background:#000;"></div>
<div style="left:1226px;top:123px;width:78px;height:62px;background:#FFFFFF;"></div>
<div style="left:1227px;top:124px;width:77px;height:61px;background:#808080;"></div>
<div style="left:1227px;top:124px;width:76px;height:60px;background:#C0C0C0;"></div>
<div style="left:1229px;top:127px;width:72px;height:20px;background:#C0C0C0;box-shadow: inset 1px 1px #808080, inset -1px -1px #FFFFFF;"></div>
<div class="t" style="top:131px;font-size:13px;line-height:13px;color:#000;left:1230px;">Analog In...</div>
<div style="left:1150px;top:160px;width:75px;height:15px;background:#808080;"></div>
<div class="t" style="top:161px;font-size:13px;line-height:13px;color:#FFF;left:1152px;">Initialize</div>
<div style="left:1150px;top:176px;width:70px;height:2px;background:#0000FF;"></div>
<svg style="left:1219px;top:172px;shape-rendering:auto" width="6" height="10" viewBox="0 0 6 10" shape-rendering="crispEdges"><path d="M0.6 0.8 L5.4 5 L0.6 9.2 Z" fill="#FFF" stroke="#000" stroke-width="1.2"/></svg>
<div style="left:1228px;top:159px;width:74px;height:18px;background:#C0C0C0;box-shadow: inset 1px 1px #808080, inset -1px -1px #FFFFFF;"></div>
<div class="t" style="top:162px;font-size:13px;line-height:13px;color:#000;left:1229px;">65506d</div>
<div class="t" style="top:161px;font-size:13px;line-height:13px;color:#000;left:1307px;">Hysterese-</div>
<div style="left:1305px;top:176px;width:72px;height:2px;background:#FF0000;"></div>
<svg style="left:1376px;top:172px;shape-rendering:auto" width="7" height="10" viewBox="0 0 7 10" shape-rendering="crispEdges"><path d="M0.6 0.8 L6.4 5 L0.6 9.2 Z" fill="#FFF" stroke="#000" stroke-width="1.2"/></svg>
<div style="left:292px;top:321px;width:530px;height:326px;background:#D4D0C8;box-shadow: inset -1px -1px #404040, inset 1px 1px #D4D0C8, inset -2px -2px #808080, inset 2px 2px #FFFFFF;"></div>
<div style="left:296px;top:325px;width:522px;height:18px;background:linear-gradient(to right,#808080,#C0C0C0);"></div>
<svg style="left:298px;top:326px;" width="16" height="16" viewBox="0 0 16 16" shape-rendering="crispEdges"><rect x="0" y="0" width="3" height="1" fill="#008000"/><rect x="3" y="0" width="1" height="1" fill="#FFFF00"/><rect x="4" y="0" width="3" height="1" fill="#008000"/><rect x="7" y="0" width="1" height="1" fill="#000"/><rect x="8" y="0" width="7" height="1" fill="#008000"/><rect x="15" y="0" width="1" height="1" fill="#000"/><rect x="0" y="1" width="2" height="1" fill="#008000"/><rect x="2" y="1" width="3" height="1" fill="#FFFF00"/><rect x="5" y="1" width="2" height="1" fill="#008000"/><rect x="7" y="1" width="1" height="1" fill="#000"/><rect x="8" y="1" width="7" height="1" fill="#008000"/><rect x="15" y="1" width="1" height="1" fill="#000"/><rect x="0" y="2" width="1" height="1" fill="#008000"/><rect x="1" y="2" width="1" height="1" fill="#FFFF00"/><rect x="2" y="2" width="3" height="1" fill="#008000"/><rect x="5" y="2" width="1" height="1" fill="#FFFF00"/><rect x="6" y="2" width="1" height="1" fill="#008000"/><rect x="7" y="2" width="1" height="1" fill="#000"/><rect x="8" y="2" width="7" height="1" fill="#008000"/><rect x="15" y="2" width="1" height="1" fill="#000"/><rect x="0" y="3" width="1" height="1" fill="#008000"/><rect x="1" y="3" width="1" height="1" fill="#FFFF00"/><rect x="2" y="3" width="3" height="1" fill="#008000"/><rect x="5" y="3" width="1" height="1" fill="#FFFF00"/><rect x="6" y="3" width="1" height="1" fill="#008000"/><rect x="7" y="3" width="1" height="1" fill="#000"/><rect x="8" y="3" width="7" height="1" fill="#008000"/><rect x="15" y="3" width="1" height="1" fill="#000"/><rect x="0" y="4" width="1" height="1" fill="#FFFF00"/><rect x="1" y="4" width="5" height="1" fill="#008000"/><rect x="6" y="4" width="1" height="1" fill="#FFFF00"/><rect x="7" y="4" width="1" height="1" fill="#000"/><rect x="8" y="4" width="7" height="1" fill="#008000"/><rect x="15" y="4" width="1" height="1" fill="#000"/><rect x="0" y="5" width="1" height="1" fill="#FFFF00"/><rect x="1" y="5" width="5" height="1" fill="#008000"/><rect x="6" y="5" width="1" height="1" fill="#FFFF00"/><rect x="7" y="5" width="1" height="1" fill="#000"/><rect x="8" y="5" width="7" height="1" fill="#008000"/><rect x="15" y="5" width="1" height="1" fill="#000"/><rect x="0" y="6" width="1" height="1" fill="#FFFF00"/><rect x="1" y="6" width="6" height="1" fill="#008000"/><rect x="7" y="6" width="1" height="1" fill="#FFFF00"/><rect x="8" y="6" width="7" height="1" fill="#008000"/><rect x="15" y="6" width="1" height="1" fill="#000"/><rect x="0" y="7" width="7" height="1" fill="#000"/><rect x="7" y="7" width="1" height="1" fill="#FFFF00"/><rect x="8" y="7" width="8" height="1" fill="#000"/><rect x="0" y="8" width="7" height="1" fill="#008000"/><rect x="7" y="8" width="1" height="1" fill="#FFFF00"/><rect x="8" y="8" width="6" height="1" fill="#008000"/><rect x="14" y="8" width="1" height="1" fill="#FFFF00"/><rect x="15" y="8" width="1" height="1" fill="#000"/><rect x="0" y="9" width="7" height="1" fill="#008000"/><rect x="7" y="9" width="1" height="1" fill="#000"/><rect x="8" y="9" width="1" height="1" fill="#FFFF00"/><rect x="9" y="9" width="5" height="1" fill="#008000"/><rect x="14" y="9" width="1" height="1" fill="#FFFF00"/><rect x="15" y="9" width="1" height="1" fill="#000"/><rect x="0" y="10" width="7" height="1" fill="#008000"/><rect x="7" y="10" width="1" height="1" fill="#000"/><rect x="8" y="10" width="1" height="1" fill="#FFFF00"/><rect x="9" y="10" width="5" height="1" fill="#008000"/><rect x="14" y="10" width="1" height="1" fill="#FFFF00"/><rect x="15" y="10" width="1" height="1" fill="#000"/><rect x="0" y="11" width="7" height="1" fill="#008000"/><rect x="7" y="11" width="1" height="1" fill="#000"/><rect x="8" y="11" width="1" height="1" fill="#008000"/><rect x="9" y="11" width="1" height="1" fill="#FFFF00"/><rect x="10" y="11" width="3" height="1" fill="#008000"/><rect x="13" y="11" width="1" height="1" fill="#FFFF00"/><rect x="14" y="11" width="1" height="1" fill="#008000"/><rect x="15" y="11" width="1" height="1" fill="#000"/><rect x="0" y="12" width="7" height="1" fill="#008000"/><rect x="7" y="12" width="1" height="1" fill="#000"/><rect x="8" y="12" width="1" height="1" fill="#008000"/><rect x="9" y="12" width="1" height="1" fill="#FFFF00"/><rect x="10" y="12" width="3" height="1" fill="#008000"/><rect x="13" y="12" width="1" height="1" fill="#FFFF00"/><rect x="14" y="12" width="1" height="1" fill="#008000"/><rect x="15" y="12" width="1" height="1" fill="#000"/><rect x="0" y="13" width="7" height="1" fill="#008000"/><rect x="7" y="13" width="1" height="1" fill="#000"/><rect x="8" y="13" width="2" height="1" fill="#008000"/><rect x="10" y="13" width="3" height="1" fill="#FFFF00"/><rect x="13" y="13" width="2" height="1" fill="#008000"/><rect x="15" y="13" width="1" height="1" fill="#000"/><rect x="0" y="14" width="7" height="1" fill="#008000"/><rect x="7" y="14" width="1" height="1" fill="#000"/><rect x="8" y="14" width="3" height="1" fill="#008000"/><rect x="11" y="14" width="1" height="1" fill="#FFFF00"/><rect x="12" y="14" width="3" height="1" fill="#008000"/><rect x="15" y="14" width="1" height="1" fill="#000"/><rect x="0" y="15" width="16" height="1" fill="#000"/></svg>
<div style="left:316px;top:325px;width:448px;height:18px;overflow:hidden;">
<div class="t" style="top:4px;font-size:11px;line-height:11px;color:#D4D0C8;font-weight:bold;letter-spacing:0.4px;left:-1px;">S-5 : Analog Increment with Optional Feedback</div>
</div>
<div style="left:800px;top:327px;width:16px;height:14px;background:#D4D0C8;box-shadow: inset -1px -1px #404040, inset 1px 1px #FFFFFF, inset -2px -2px #808080;"></div>
<svg style="left:800px;top:327px;" width="16" height="14" viewBox="0 0 16 14" shape-rendering="crispEdges"><rect x="4" y="3" width="2" height="1" fill="#000"/><rect x="10" y="3" width="2" height="1" fill="#000"/><rect x="5" y="4" width="2" height="1" fill="#000"/><rect x="9" y="4" width="2" height="1" fill="#000"/><rect x="6" y="5" width="4" height="1" fill="#000"/><rect x="7" y="6" width="2" height="1" fill="#000"/><rect x="6" y="7" width="4" height="1" fill="#000"/><rect x="5" y="8" width="2" height="1" fill="#000"/><rect x="9" y="8" width="2" height="1" fill="#000"/><rect x="4" y="9" width="2" height="1" fill="#000"/><rect x="10" y="9" width="2" height="1" fill="#000"/></svg>
<div style="left:782px;top:327px;width:16px;height:14px;background:#D4D0C8;box-shadow: inset -1px -1px #404040, inset 1px 1px #FFFFFF, inset -2px -2px #808080;"></div>
<svg style="left:782px;top:327px;" width="16" height="14" viewBox="0 0 16 14" shape-rendering="crispEdges"><rect x="3.5" y="2.5" width="8" height="8" fill="none" stroke="#000"/><rect x="3" y="2" width="9" height="2" fill="#000"/></svg>
<div style="left:766px;top:327px;width:16px;height:14px;background:#D4D0C8;box-shadow: inset -1px -1px #404040, inset 1px 1px #FFFFFF, inset -2px -2px #808080;"></div>
<svg style="left:766px;top:327px;" width="16" height="14" viewBox="0 0 16 14" shape-rendering="crispEdges"><rect x="4" y="9" width="6" height="2" fill="#000"/></svg>
<div style="left:296px;top:344px;width:522px;height:299px;background:#FFF;"></div>
<div style="left:470px;top:346px;width:174px;height:290px;background:#000;"></div>
<div style="left:471px;top:347px;width:172px;height:288px;background:#FFFFFF;"></div>
<div style="left:472px;top:348px;width:171px;height:287px;background:#808080;"></div>
<div style="left:472px;top:348px;width:170px;height:286px;background:#C0C0C0;"></div>
<div style="left:475px;top:351px;width:165px;height:20px;background:#C0C0C0;box-shadow: inset 1px 1px #808080, inset -1px -1px #FFFFFF;"></div>
<div class="t" style="top:355px;font-size:13px;line-height:13px;color:#000;left:476px;">Analog Increment with Op...</div>
<div style="left:301px;top:384px;width:169px;height:15px;background:#808080;"></div>
<div class="t" style="top:385px;font-size:13px;line-height:13px;color:#FFF;left:303px;">Heizung_Soll+</div>
<div style="left:301px;top:400px;width:164px;height:2px;background:#0000FF;"></div>
<svg style="left:464px;top:396px;shape-rendering:auto" width="6" height="10" viewBox="0 0 6 10" shape-rendering="crispEdges"><path d="M0 0 L6 5 L0 10 Z" fill="#000"/></svg>
<div class="t" style="top:409px;font-size:13px;line-height:13px;color:#000;left:303px;">Heizung_Soll-</div>
<div style="left:301px;top:424px;width:164px;height:2px;background:#0000FF;"></div>
<svg style="left:464px;top:420px;shape-rendering:auto" width="6" height="10" viewBox="0 0 6 10" shape-rendering="crispEdges"><path d="M0 0 L6 5 L0 10 Z" fill="#000"/></svg>
<div class="t" style="top:433px;font-size:13px;line-height:13px;color:#000;left:303px;">Heizung_Stop</div>
<div style="left:301px;top:448px;width:164px;height:2px;background:#0000FF;"></div>
<svg style="left:464px;top:444px;shape-rendering:auto" width="6" height="10" viewBox="0 0 6 10" shape-rendering="crispEdges"><path d="M0 0 L6 5 L0 10 Z" fill="#000"/></svg>
<div class="t" style="top:457px;font-size:13px;line-height:13px;color:#000;left:303px;">Heizung_Soll</div>
<div style="left:301px;top:472px;width:164px;height:2px;background:#FF0000;"></div>
<svg style="left:464px;top:468px;shape-rendering:auto" width="6" height="10" viewBox="0 0 6 10" shape-rendering="crispEdges"><path d="M0 0 L6 5 L0 10 Z" fill="#000"/></svg>
<div class="t" style="top:386px;font-size:13px;line-height:13px;color:#C00000;left:476px;">up</div>
<div class="t" style="top:410px;font-size:13px;line-height:13px;color:#C00000;left:476px;">down</div>
<div class="t" style="top:434px;font-size:13px;line-height:13px;color:#C00000;left:476px;">[mute]</div>
<div class="t" style="top:458px;font-size:13px;line-height:13px;color:#C00000;left:476px;">[FbckSignal]</div>
<div class="t" style="top:386px;font-size:13px;line-height:13px;color:#C00000;right:calc(100% - 640px);text-align:right;">aout</div>
<div class="t" style="top:385px;font-size:13px;line-height:13px;color:#000;left:646px;">Heizung_Soll</div>
<div style="left:644px;top:400px;width:164px;height:2px;background:#FF0000;"></div>
<svg style="left:807px;top:396px;shape-rendering:auto" width="7" height="10" viewBox="0 0 7 10" shape-rendering="crispEdges"><path d="M0 0 L7 5 L0 10 Z" fill="#000"/></svg>
<div style="left:475px;top:482px;width:165px;height:1px;background:#808080;"></div>
<div style="left:475px;top:483px;width:165px;height:1px;background:#FFFFFF;"></div>
<div style="left:474px;top:489px;width:167px;height:18px;background:#C0C0C0;box-shadow: inset 1px 1px #808080, inset -1px -1px #FFFFFF;"></div>
<div class="t" style="top:492px;font-size:13px;line-height:13px;color:#000;left:475px;">1d</div>
<div class="t" style="top:492px;font-size:13px;line-height:13px;color:#C00000;right:calc(100% - 466px);text-align:right;">Increment</div>
<div style="left:474px;top:513px;width:167px;height:18px;background:#C0C0C0;box-shadow: inset 1px 1px #808080, inset -1px -1px #FFFFFF;"></div>
<div class="t" style="top:516px;font-size:13px;line-height:13px;color:#000;left:475px;">2s</div>
<div class="t" style="top:516px;font-size:13px;line-height:13px;color:#C00000;right:calc(100% - 466px);text-align:right;">HoldTime</div>
<div style="left:474px;top:537px;width:167px;height:18px;background:#C0C0C0;box-shadow: inset 1px 1px #808080, inset -1px -1px #FFFFFF;"></div>
<div class="t" style="top:540px;font-size:13px;line-height:13px;color:#000;left:475px;">0.3s</div>
<div class="t" style="top:540px;font-size:13px;line-height:13px;color:#C00000;right:calc(100% - 466px);text-align:right;">RepeatTime</div>
<div style="left:474px;top:561px;width:167px;height:18px;background:#C0C0C0;box-shadow: inset 1px 1px #808080, inset -1px -1px #FFFFFF;"></div>
<div class="t" style="top:564px;font-size:13px;line-height:13px;color:#000;left:475px;">100d</div>
<div class="t" style="top:564px;font-size:13px;line-height:13px;color:#C00000;right:calc(100% - 466px);text-align:right;">LowerLimit</div>
<div style="left:474px;top:585px;width:167px;height:18px;background:#C0C0C0;box-shadow: inset 1px 1px #808080, inset -1px -1px #FFFFFF;"></div>
<div class="t" style="top:588px;font-size:13px;line-height:13px;color:#000;left:475px;">250d</div>
<div class="t" style="top:588px;font-size:13px;line-height:13px;color:#C00000;right:calc(100% - 466px);text-align:right;">UpperLimit</div>
<div style="left:474px;top:609px;width:167px;height:18px;background:#C0C0C0;box-shadow: inset 1px 1px #808080, inset -1px -1px #FFFFFF;"></div>
<div class="t" style="top:612px;font-size:13px;line-height:13px;color:#000;left:475px;">0d</div>
<div class="t" style="top:612px;font-size:13px;line-height:13px;color:#C00000;right:calc(100% - 466px);text-align:right;">MuteLevel</div>
<div style="left:292px;top:97px;width:319px;height:225px;background:#D4D0C8;box-shadow: inset -1px -1px #404040, inset 1px 1px #D4D0C8, inset -2px -2px #808080, inset 2px 2px #FFFFFF;"></div>
<div style="left:296px;top:101px;width:311px;height:18px;background:linear-gradient(to right,#808080,#C0C0C0);"></div>
<svg style="left:298px;top:102px;" width="16" height="16" viewBox="0 0 16 16" shape-rendering="crispEdges"><rect x="0" y="0" width="2" height="1" fill="#FFFF00"/><rect x="2" y="0" width="2" height="1" fill="#000"/><rect x="4" y="0" width="3" height="1" fill="#FFFF00"/><rect x="7" y="0" width="1" height="1" fill="#000"/><rect x="8" y="0" width="3" height="1" fill="#FFFF00"/><rect x="11" y="0" width="2" height="1" fill="#000"/><rect x="13" y="0" width="3" height="1" fill="#FFFF00"/><rect x="0" y="1" width="1" height="1" fill="#FFFF00"/><rect x="1" y="1" width="1" height="1" fill="#000"/><rect x="2" y="1" width="2" height="1" fill="#FFFF00"/><rect x="4" y="1" width="1" height="1" fill="#000"/><rect x="5" y="1" width="2" height="1" fill="#FFFF00"/><rect x="7" y="1" width="1" height="1" fill="#000"/><rect x="8" y="1" width="2" height="1" fill="#FFFF00"/><rect x="10" y="1" width="1" height="1" fill="#000"/><rect x="11" y="1" width="2" height="1" fill="#FFFF00"/><rect x="13" y="1" width="1" height="1" fill="#000"/><rect x="14" y="1" width="2" height="1" fill="#FFFF00"/><rect x="0" y="2" width="1" height="1" fill="#FFFF00"/><rect x="1" y="2" width="1" height="1" fill="#000"/><rect x="2" y="2" width="2" height="1" fill="#FFFF00"/><rect x="4" y="2" width="1" height="1" fill="#000"/><rect x="5" y="2" width="2" height="1" fill="#FFFF00"/><rect x="7" y="2" width="1" height="1" fill="#000"/><rect x="8" y="2" width="2" height="1" fill="#FFFF00"/><rect x="10" y="2" width="1" height="1" fill="#000"/><rect x="11" y="2" width="2" height="1" fill="#FFFF00"/><rect x="13" y="2" width="1" height="1" fill="#000"/><rect x="14" y="2" width="2" height="1" fill="#FFFF00"/><rect x="0" y="3" width="2" height="1" fill="#FFFF00"/><rect x="2" y="3" width="2" height="1" fill="#000"/><rect x="4" y="3" width="3" height="1" fill="#FFFF00"/><rect x="7" y="3" width="1" height="1" fill="#000"/><rect x="8" y="3" width="3" height="1" fill="#FFFF00"/><rect x="11" y="3" width="2" height="1" fill="#000"/><rect x="13" y="3" width="3" height="1" fill="#FFFF00"/><rect x="0" y="4" width="16" height="1" fill="#FFFF00"/><rect x="0" y="5" width="2" height="1" fill="#FFFF00"/><rect x="2" y="5" width="2" height="1" fill="#000"/><rect x="4" y="5" width="3" height="1" fill="#FFFF00"/><rect x="7" y="5" width="2" height="1" fill="#000"/><rect x="9" y="5" width="3" height="1" fill="#FFFF00"/><rect x="12" y="5" width="1" height="1" fill="#000"/><rect x="13" y="5" width="3" height="1" fill="#FFFF00"/><rect x="0" y="6" width="1" height="1" fill="#FFFF00"/><rect x="1" y="6" width="1" height="1" fill="#000"/><rect x="2" y="6" width="2" height="1" fill="#FFFF00"/><rect x="4" y="6" width="1" height="1" fill="#000"/><rect x="5" y="6" width="1" height="1" fill="#FFFF00"/><rect x="6" y="6" width="1" height="1" fill="#000"/><rect x="7" y="6" width="2" height="1" fill="#FFFF00"/><rect x="9" y="6" width="1" height="1" fill="#000"/><rect x="10" y="6" width="2" height="1" fill="#FFFF00"/><rect x="12" y="6" width="1" height="1" fill="#000"/><rect x="13" y="6" width="3" height="1" fill="#FFFF00"/><rect x="0" y="7" width="1" height="1" fill="#FFFF00"/><rect x="1" y="7" width="1" height="1" fill="#000"/><rect x="2" y="7" width="2" height="1" fill="#FFFF00"/><rect x="4" y="7" width="1" height="1" fill="#000"/><rect x="5" y="7" width="1" height="1" fill="#FFFF00"/><rect x="6" y="7" width="1" height="1" fill="#000"/><rect x="7" y="7" width="2" height="1" fill="#FFFF00"/><rect x="9" y="7" width="1" height="1" fill="#000"/><rect x="10" y="7" width="2" height="1" fill="#FFFF00"/><rect x="12" y="7" width="1" height="1" fill="#000"/><rect x="13" y="7" width="3" height="1" fill="#FFFF00"/><rect x="0" y="8" width="2" height="1" fill="#FFFF00"/><rect x="2" y="8" width="2" height="1" fill="#000"/><rect x="4" y="8" width="3" height="1" fill="#FFFF00"/><rect x="7" y="8" width="2" height="1" fill="#000"/><rect x="9" y="8" width="3" height="1" fill="#FFFF00"/><rect x="12" y="8" width="1" height="1" fill="#000"/><rect x="13" y="8" width="3" height="1" fill="#FFFF00"/><rect x="0" y="9" width="16" height="1" fill="#FFFF00"/><rect x="0" y="10" width="2" height="1" fill="#FFFF00"/><rect x="2" y="10" width="2" height="1" fill="#000"/><rect x="4" y="10" width="3" height="1" fill="#FFFF00"/><rect x="7" y="10" width="1" height="1" fill="#000"/><rect x="8" y="10" width="4" height="1" fill="#FFFF00"/><rect x="12" y="10" width="1" height="1" fill="#000"/><rect x="13" y="10" width="3" height="1" fill="#FFFF00"/><rect x="0" y="11" width="1" height="1" fill="#FFFF00"/><rect x="1" y="11" width="1" height="1" fill="#000"/><rect x="2" y="11" width="2" height="1" fill="#FFFF00"/><rect x="4" y="11" width="1" height="1" fill="#000"/><rect x="5" y="11" width="2" height="1" fill="#FFFF00"/><rect x="7" y="11" width="1" height="1" fill="#000"/><rect x="8" y="11" width="4" height="1" fill="#FFFF00"/><rect x="12" y="11" width="1" height="1" fill="#000"/><rect x="13" y="11" width="3" height="1" fill="#FFFF00"/><rect x="0" y="12" width="1" height="1" fill="#FFFF00"/><rect x="1" y="12" width="1" height="1" fill="#000"/><rect x="2" y="12" width="2" height="1" fill="#FFFF00"/><rect x="4" y="12" width="1" height="1" fill="#000"/><rect x="5" y="12" width="2" height="1" fill="#FFFF00"/><rect x="7" y="12" width="1" height="1" fill="#000"/><rect x="8" y="12" width="4" height="1" fill="#FFFF00"/><rect x="12" y="12" width="1" height="1" fill="#000"/><rect x="13" y="12" width="3" height="1" fill="#FFFF00"/><rect x="0" y="13" width="2" height="1" fill="#FFFF00"/><rect x="2" y="13" width="2" height="1" fill="#000"/><rect x="4" y="13" width="3" height="1" fill="#FFFF00"/><rect x="7" y="13" width="1" height="1" fill="#000"/><rect x="8" y="13" width="4" height="1" fill="#FFFF00"/><rect x="12" y="13" width="1" height="1" fill="#000"/><rect x="13" y="13" width="3" height="1" fill="#FFFF00"/><rect x="0" y="14" width="16" height="1" fill="#FFFF00"/></svg>
<div style="left:316px;top:101px;width:237px;height:18px;overflow:hidden;">
<div class="t" style="top:4px;font-size:11px;line-height:11px;color:#D4D0C8;font-weight:bold;letter-spacing:0.4px;left:-1px;">S-1 : speichert Sollwert : Analog RAM</div>
</div>
<div style="left:589px;top:103px;width:16px;height:14px;background:#D4D0C8;box-shadow: inset -1px -1px #404040, inset 1px 1px #FFFFFF, inset -2px -2px #808080;"></div>
<svg style="left:589px;top:103px;" width="16" height="14" viewBox="0 0 16 14" shape-rendering="crispEdges"><rect x="4" y="3" width="2" height="1" fill="#000"/><rect x="10" y="3" width="2" height="1" fill="#000"/><rect x="5" y="4" width="2" height="1" fill="#000"/><rect x="9" y="4" width="2" height="1" fill="#000"/><rect x="6" y="5" width="4" height="1" fill="#000"/><rect x="7" y="6" width="2" height="1" fill="#000"/><rect x="6" y="7" width="4" height="1" fill="#000"/><rect x="5" y="8" width="2" height="1" fill="#000"/><rect x="9" y="8" width="2" height="1" fill="#000"/><rect x="4" y="9" width="2" height="1" fill="#000"/><rect x="10" y="9" width="2" height="1" fill="#000"/></svg>
<div style="left:571px;top:103px;width:16px;height:14px;background:#D4D0C8;box-shadow: inset -1px -1px #404040, inset 1px 1px #FFFFFF, inset -2px -2px #808080;"></div>
<svg style="left:571px;top:103px;" width="16" height="14" viewBox="0 0 16 14" shape-rendering="crispEdges"><rect x="3.5" y="2.5" width="8" height="8" fill="none" stroke="#000"/><rect x="3" y="2" width="9" height="2" fill="#000"/></svg>
<div style="left:555px;top:103px;width:16px;height:14px;background:#D4D0C8;box-shadow: inset -1px -1px #404040, inset 1px 1px #FFFFFF, inset -2px -2px #808080;"></div>
<svg style="left:555px;top:103px;" width="16" height="14" viewBox="0 0 16 14" shape-rendering="crispEdges"><rect x="4" y="9" width="6" height="2" fill="#000"/></svg>
<div style="left:296px;top:120px;width:311px;height:198px;background:#FFF;"></div>
<div style="left:416px;top:122px;width:69px;height:136px;background:#000;"></div>
<div style="left:417px;top:123px;width:67px;height:134px;background:#FFFFFF;"></div>
<div style="left:418px;top:124px;width:66px;height:133px;background:#808080;"></div>
<div style="left:418px;top:124px;width:65px;height:132px;background:#C0C0C0;"></div>
<div style="left:421px;top:127px;width:59px;height:20px;background:#C0C0C0;box-shadow: inset 1px 1px #808080, inset -1px -1px #FFFFFF;"></div>
<div class="t" style="top:131px;font-size:13px;line-height:13px;color:#000;left:422px;">Analog ...</div>
<div style="left:301px;top:160px;width:115px;height:15px;background:#808080;"></div>
<div class="t" style="top:161px;font-size:13px;line-height:13px;color:#FFF;left:303px;">1</div>
<div style="left:301px;top:176px;width:110px;height:2px;background:#0000FF;"></div>
<svg style="left:410px;top:172px;shape-rendering:auto" width="6" height="10" viewBox="0 0 6 10" shape-rendering="crispEdges"><path d="M0 0 L6 5 L0 10 Z" fill="#000"/></svg>
<div class="t" style="top:185px;font-size:13px;line-height:13px;color:#000;left:303px;">1</div>
<div style="left:301px;top:200px;width:110px;height:2px;background:#0000FF;"></div>
<svg style="left:410px;top:196px;shape-rendering:auto" width="6" height="10" viewBox="0 0 6 10" shape-rendering="crispEdges"><path d="M0 0 L6 5 L0 10 Z" fill="#000"/></svg>
<div class="t" style="top:209px;font-size:13px;line-height:13px;color:#000;left:303px;">Heizung_Soll</div>
<div style="left:301px;top:224px;width:110px;height:2px;background:#FF0000;"></div>
<svg style="left:410px;top:220px;shape-rendering:auto" width="6" height="10" viewBox="0 0 6 10" shape-rendering="crispEdges"><path d="M0.6 0.8 L5.4 5 L0.6 9.2 Z" fill="#FFF" stroke="#000" stroke-width="1.2"/></svg>
<div class="t" style="top:233px;font-size:13px;line-height:13px;color:#000;left:303px;">1</div>
<div style="left:301px;top:248px;width:110px;height:2px;background:#0000FF;"></div>
<svg style="left:410px;top:244px;shape-rendering:auto" width="6" height="10" viewBox="0 0 6 10" shape-rendering="crispEdges"><path d="M0.6 0.8 L5.4 5 L0.6 9.2 Z" fill="#FFF" stroke="#000" stroke-width="1.2"/></svg>
<div class="t" style="top:162px;font-size:13px;line-height:13px;color:#C00000;left:422px;">store</div>
<div class="t" style="top:186px;font-size:13px;line-height:13px;color:#C00000;left:422px;">recall</div>
<div class="t" style="top:210px;font-size:13px;line-height:13px;color:#C00000;left:422px;">ain1</div>
<div class="t" style="top:234px;font-size:13px;line-height:13px;color:#C00000;left:422px;">select1</div>
<div class="t" style="top:210px;font-size:13px;line-height:13px;color:#C00000;right:calc(100% - 479px);text-align:right;">out1</div>
<div class="t" style="top:209px;font-size:13px;line-height:13px;color:#000;left:487px;">Heizung_Soll</div>
<div style="left:485px;top:224px;width:112px;height:2px;background:#FF0000;"></div>
<svg style="left:596px;top:220px;shape-rendering:auto" width="7" height="10" viewBox="0 0 7 10" shape-rendering="crispEdges"><path d="M0.6 0.8 L6.4 5 L0.6 9.2 Z" fill="#FFF" stroke="#000" stroke-width="1.2"/></svg>
<div style="left:822px;top:323px;width:568px;height:164px;background:#D4D0C8;box-shadow: inset -1px -1px #404040, inset 1px 1px #D4D0C8, inset -2px -2px #808080, inset 2px 2px #FFFFFF;"></div>
<div style="left:826px;top:327px;width:560px;height:18px;background:linear-gradient(to right,#808080,#C0C0C0);"></div>
<svg style="left:828px;top:328px;" width="16" height="16" viewBox="0 0 16 16" shape-rendering="crispEdges"><rect x="0" y="0" width="3" height="1" fill="#008000"/><rect x="3" y="0" width="1" height="1" fill="#FFFF00"/><rect x="4" y="0" width="3" height="1" fill="#008000"/><rect x="7" y="0" width="1" height="1" fill="#000"/><rect x="8" y="0" width="7" height="1" fill="#008000"/><rect x="15" y="0" width="1" height="1" fill="#000"/><rect x="0" y="1" width="2" height="1" fill="#008000"/><rect x="2" y="1" width="3" height="1" fill="#FFFF00"/><rect x="5" y="1" width="2" height="1" fill="#008000"/><rect x="7" y="1" width="1" height="1" fill="#000"/><rect x="8" y="1" width="7" height="1" fill="#008000"/><rect x="15" y="1" width="1" height="1" fill="#000"/><rect x="0" y="2" width="1" height="1" fill="#008000"/><rect x="1" y="2" width="1" height="1" fill="#FFFF00"/><rect x="2" y="2" width="3" height="1" fill="#008000"/><rect x="5" y="2" width="1" height="1" fill="#FFFF00"/><rect x="6" y="2" width="1" height="1" fill="#008000"/><rect x="7" y="2" width="1" height="1" fill="#000"/><rect x="8" y="2" width="7" height="1" fill="#008000"/><rect x="15" y="2" width="1" height="1" fill="#000"/><rect x="0" y="3" width="1" height="1" fill="#008000"/><rect x="1" y="3" width="1" height="1" fill="#FFFF00"/><rect x="2" y="3" width="3" height="1" fill="#008000"/><rect x="5" y="3" width="1" height="1" fill="#FFFF00"/><rect x="6" y="3" width="1" height="1" fill="#008000"/><rect x="7" y="3" width="1" height="1" fill="#000"/><rect x="8" y="3" width="7" height="1" fill="#008000"/><rect x="15" y="3" width="1" height="1" fill="#000"/><rect x="0" y="4" width="1" height="1" fill="#FFFF00"/><rect x="1" y="4" width="5" height="1" fill="#008000"/><rect x="6" y="4" width="1" height="1" fill="#FFFF00"/><rect x="7" y="4" width="1" height="1" fill="#000"/><rect x="8" y="4" width="7" height="1" fill="#008000"/><rect x="15" y="4" width="1" height="1" fill="#000"/><rect x="0" y="5" width="1" height="1" fill="#FFFF00"/><rect x="1" y="5" width="5" height="1" fill="#008000"/><rect x="6" y="5" width="1" height="1" fill="#FFFF00"/><rect x="7" y="5" width="1" height="1" fill="#000"/><rect x="8" y="5" width="7" height="1" fill="#008000"/><rect x="15" y="5" width="1" height="1" fill="#000"/><rect x="0" y="6" width="1" height="1" fill="#FFFF00"/><rect x="1" y="6" width="6" height="1" fill="#008000"/><rect x="7" y="6" width="1" height="1" fill="#FFFF00"/><rect x="8" y="6" width="7" height="1" fill="#008000"/><rect x="15" y="6" width="1" height="1" fill="#000"/><rect x="0" y="7" width="7" height="1" fill="#000"/><rect x="7" y="7" width="1" height="1" fill="#FFFF00"/><rect x="8" y="7" width="8" height="1" fill="#000"/><rect x="0" y="8" width="7" height="1" fill="#008000"/><rect x="7" y="8" width="1" height="1" fill="#FFFF00"/><rect x="8" y="8" width="6" height="1" fill="#008000"/><rect x="14" y="8" width="1" height="1" fill="#FFFF00"/><rect x="15" y="8" width="1" height="1" fill="#000"/><rect x="0" y="9" width="7" height="1" fill="#008000"/><rect x="7" y="9" width="1" height="1" fill="#000"/><rect x="8" y="9" width="1" height="1" fill="#FFFF00"/><rect x="9" y="9" width="5" height="1" fill="#008000"/><rect x="14" y="9" width="1" height="1" fill="#FFFF00"/><rect x="15" y="9" width="1" height="1" fill="#000"/><rect x="0" y="10" width="7" height="1" fill="#008000"/><rect x="7" y="10" width="1" height="1" fill="#000"/><rect x="8" y="10" width="1" height="1" fill="#FFFF00"/><rect x="9" y="10" width="5" height="1" fill="#008000"/><rect x="14" y="10" width="1" height="1" fill="#FFFF00"/><rect x="15" y="10" width="1" height="1" fill="#000"/><rect x="0" y="11" width="7" height="1" fill="#008000"/><rect x="7" y="11" width="1" height="1" fill="#000"/><rect x="8" y="11" width="1" height="1" fill="#008000"/><rect x="9" y="11" width="1" height="1" fill="#FFFF00"/><rect x="10" y="11" width="3" height="1" fill="#008000"/><rect x="13" y="11" width="1" height="1" fill="#FFFF00"/><rect x="14" y="11" width="1" height="1" fill="#008000"/><rect x="15" y="11" width="1" height="1" fill="#000"/><rect x="0" y="12" width="7" height="1" fill="#008000"/><rect x="7" y="12" width="1" height="1" fill="#000"/><rect x="8" y="12" width="1" height="1" fill="#008000"/><rect x="9" y="12" width="1" height="1" fill="#FFFF00"/><rect x="10" y="12" width="3" height="1" fill="#008000"/><rect x="13" y="12" width="1" height="1" fill="#FFFF00"/><rect x="14" y="12" width="1" height="1" fill="#008000"/><rect x="15" y="12" width="1" height="1" fill="#000"/><rect x="0" y="13" width="7" height="1" fill="#008000"/><rect x="7" y="13" width="1" height="1" fill="#000"/><rect x="8" y="13" width="2" height="1" fill="#008000"/><rect x="10" y="13" width="3" height="1" fill="#FFFF00"/><rect x="13" y="13" width="2" height="1" fill="#008000"/><rect x="15" y="13" width="1" height="1" fill="#000"/><rect x="0" y="14" width="7" height="1" fill="#008000"/><rect x="7" y="14" width="1" height="1" fill="#000"/><rect x="8" y="14" width="3" height="1" fill="#008000"/><rect x="11" y="14" width="1" height="1" fill="#FFFF00"/><rect x="12" y="14" width="3" height="1" fill="#008000"/><rect x="15" y="14" width="1" height="1" fill="#000"/><rect x="0" y="15" width="16" height="1" fill="#000"/></svg>
<div style="left:846px;top:327px;width:486px;height:18px;overflow:hidden;">
<div class="t" style="top:4px;font-size:11px;line-height:11px;color:#D4D0C8;font-weight:bold;letter-spacing:0.4px;left:-1px;">S-6 : Abschalttemperatur : Analog Sum</div>
</div>
<div style="left:1368px;top:329px;width:16px;height:14px;background:#D4D0C8;box-shadow: inset -1px -1px #404040, inset 1px 1px #FFFFFF, inset -2px -2px #808080;"></div>
<svg style="left:1368px;top:329px;" width="16" height="14" viewBox="0 0 16 14" shape-rendering="crispEdges"><rect x="4" y="3" width="2" height="1" fill="#000"/><rect x="10" y="3" width="2" height="1" fill="#000"/><rect x="5" y="4" width="2" height="1" fill="#000"/><rect x="9" y="4" width="2" height="1" fill="#000"/><rect x="6" y="5" width="4" height="1" fill="#000"/><rect x="7" y="6" width="2" height="1" fill="#000"/><rect x="6" y="7" width="4" height="1" fill="#000"/><rect x="5" y="8" width="2" height="1" fill="#000"/><rect x="9" y="8" width="2" height="1" fill="#000"/><rect x="4" y="9" width="2" height="1" fill="#000"/><rect x="10" y="9" width="2" height="1" fill="#000"/></svg>
<div style="left:1350px;top:329px;width:16px;height:14px;background:#D4D0C8;box-shadow: inset -1px -1px #404040, inset 1px 1px #FFFFFF, inset -2px -2px #808080;"></div>
<svg style="left:1350px;top:329px;" width="16" height="14" viewBox="0 0 16 14" shape-rendering="crispEdges"><rect x="3.5" y="2.5" width="8" height="8" fill="none" stroke="#000"/><rect x="3" y="2" width="9" height="2" fill="#000"/></svg>
<div style="left:1334px;top:329px;width:16px;height:14px;background:#D4D0C8;box-shadow: inset -1px -1px #404040, inset 1px 1px #FFFFFF, inset -2px -2px #808080;"></div>
<svg style="left:1334px;top:329px;" width="16" height="14" viewBox="0 0 16 14" shape-rendering="crispEdges"><rect x="4" y="9" width="6" height="2" fill="#000"/></svg>
<div style="left:826px;top:346px;width:560px;height:137px;background:#FFF;"></div>
<div style="left:1043px;top:348px;width:124px;height:88px;background:#000;"></div>
<div style="left:1044px;top:349px;width:122px;height:86px;background:#FFFFFF;"></div>
<div style="left:1045px;top:350px;width:121px;height:85px;background:#808080;"></div>
<div style="left:1045px;top:350px;width:120px;height:84px;background:#C0C0C0;"></div>
<div style="left:1047px;top:353px;width:116px;height:20px;background:#C0C0C0;box-shadow: inset 1px 1px #808080, inset -1px -1px #FFFFFF;"></div>
<div class="t" style="top:357px;font-size:13px;line-height:13px;color:#000;left:1047px;width:116px;text-align:center;">Analog Sum</div>
<div style="left:831px;top:386px;width:212px;height:15px;background:#808080;"></div>
<div class="t" style="top:387px;font-size:13px;line-height:13px;color:#FFF;left:833px;">Heizung_Soll</div>
<div style="left:831px;top:402px;width:207px;height:2px;background:#FF0000;"></div>
<svg style="left:1037px;top:398px;shape-rendering:auto" width="6" height="10" viewBox="0 0 6 10" shape-rendering="crispEdges"><path d="M0.6 0.8 L5.4 5 L0.6 9.2 Z" fill="#FFF" stroke="#000" stroke-width="1.2"/></svg>
<div class="t" style="top:411px;font-size:13px;line-height:13px;color:#000;left:833px;">Hysterese</div>
<div style="left:831px;top:426px;width:207px;height:2px;background:#FF0000;"></div>
<svg style="left:1037px;top:422px;shape-rendering:auto" width="6" height="10" viewBox="0 0 6 10" shape-rendering="crispEdges"><path d="M0.6 0.8 L5.4 5 L0.6 9.2 Z" fill="#FFF" stroke="#000" stroke-width="1.2"/></svg>
<div class="t" style="top:388px;font-size:13px;line-height:13px;color:#C00000;left:1048px;">ain1</div>
<div class="t" style="top:412px;font-size:13px;line-height:13px;color:#C00000;left:1048px;">ain2</div>
<div class="t" style="top:388px;font-size:13px;line-height:13px;color:#C00000;right:calc(100% - 1163px);text-align:right;">aout</div>
<div class="t" style="top:387px;font-size:13px;line-height:13px;color:#000;left:1169px;">Abschalttemperatur</div>
<div style="left:1167px;top:402px;width:209px;height:2px;background:#FF0000;"></div>
<svg style="left:1375px;top:398px;shape-rendering:auto" width="7" height="10" viewBox="0 0 7 10" shape-rendering="crispEdges"><path d="M0 0 L7 5 L0 10 Z" fill="#000"/></svg>
<div style="left:822px;top:487px;width:570px;height:160px;background:#D4D0C8;box-shadow: inset -1px -1px #404040, inset 1px 1px #D4D0C8, inset -2px -2px #808080, inset 2px 2px #FFFFFF;"></div>
<div style="left:826px;top:491px;width:562px;height:18px;background:linear-gradient(to right,#808080,#C0C0C0);"></div>
<svg style="left:828px;top:492px;" width="16" height="16" viewBox="0 0 16 16" shape-rendering="crispEdges"><rect x="0" y="0" width="3" height="1" fill="#008000"/><rect x="3" y="0" width="1" height="1" fill="#FFFF00"/><rect x="4" y="0" width="3" height="1" fill="#008000"/><rect x="7" y="0" width="1" height="1" fill="#000"/><rect x="8" y="0" width="7" height="1" fill="#008000"/><rect x="15" y="0" width="1" height="1" fill="#000"/><rect x="0" y="1" width="2" height="1" fill="#008000"/><rect x="2" y="1" width="3" height="1" fill="#FFFF00"/><rect x="5" y="1" width="2" height="1" fill="#008000"/><rect x="7" y="1" width="1" height="1" fill="#000"/><rect x="8" y="1" width="7" height="1" fill="#008000"/><rect x="15" y="1" width="1" height="1" fill="#000"/><rect x="0" y="2" width="1" height="1" fill="#008000"/><rect x="1" y="2" width="1" height="1" fill="#FFFF00"/><rect x="2" y="2" width="3" height="1" fill="#008000"/><rect x="5" y="2" width="1" height="1" fill="#FFFF00"/><rect x="6" y="2" width="1" height="1" fill="#008000"/><rect x="7" y="2" width="1" height="1" fill="#000"/><rect x="8" y="2" width="7" height="1" fill="#008000"/><rect x="15" y="2" width="1" height="1" fill="#000"/><rect x="0" y="3" width="1" height="1" fill="#008000"/><rect x="1" y="3" width="1" height="1" fill="#FFFF00"/><rect x="2" y="3" width="3" height="1" fill="#008000"/><rect x="5" y="3" width="1" height="1" fill="#FFFF00"/><rect x="6" y="3" width="1" height="1" fill="#008000"/><rect x="7" y="3" width="1" height="1" fill="#000"/><rect x="8" y="3" width="7" height="1" fill="#008000"/><rect x="15" y="3" width="1" height="1" fill="#000"/><rect x="0" y="4" width="1" height="1" fill="#FFFF00"/><rect x="1" y="4" width="5" height="1" fill="#008000"/><rect x="6" y="4" width="1" height="1" fill="#FFFF00"/><rect x="7" y="4" width="1" height="1" fill="#000"/><rect x="8" y="4" width="7" height="1" fill="#008000"/><rect x="15" y="4" width="1" height="1" fill="#000"/><rect x="0" y="5" width="1" height="1" fill="#FFFF00"/><rect x="1" y="5" width="5" height="1" fill="#008000"/><rect x="6" y="5" width="1" height="1" fill="#FFFF00"/><rect x="7" y="5" width="1" height="1" fill="#000"/><rect x="8" y="5" width="7" height="1" fill="#008000"/><rect x="15" y="5" width="1" height="1" fill="#000"/><rect x="0" y="6" width="1" height="1" fill="#FFFF00"/><rect x="1" y="6" width="6" height="1" fill="#008000"/><rect x="7" y="6" width="1" height="1" fill="#FFFF00"/><rect x="8" y="6" width="7" height="1" fill="#008000"/><rect x="15" y="6" width="1" height="1" fill="#000"/><rect x="0" y="7" width="7" height="1" fill="#000"/><rect x="7" y="7" width="1" height="1" fill="#FFFF00"/><rect x="8" y="7" width="8" height="1" fill="#000"/><rect x="0" y="8" width="7" height="1" fill="#008000"/><rect x="7" y="8" width="1" height="1" fill="#FFFF00"/><rect x="8" y="8" width="6" height="1" fill="#008000"/><rect x="14" y="8" width="1" height="1" fill="#FFFF00"/><rect x="15" y="8" width="1" height="1" fill="#000"/><rect x="0" y="9" width="7" height="1" fill="#008000"/><rect x="7" y="9" width="1" height="1" fill="#000"/><rect x="8" y="9" width="1" height="1" fill="#FFFF00"/><rect x="9" y="9" width="5" height="1" fill="#008000"/><rect x="14" y="9" width="1" height="1" fill="#FFFF00"/><rect x="15" y="9" width="1" height="1" fill="#000"/><rect x="0" y="10" width="7" height="1" fill="#008000"/><rect x="7" y="10" width="1" height="1" fill="#000"/><rect x="8" y="10" width="1" height="1" fill="#FFFF00"/><rect x="9" y="10" width="5" height="1" fill="#008000"/><rect x="14" y="10" width="1" height="1" fill="#FFFF00"/><rect x="15" y="10" width="1" height="1" fill="#000"/><rect x="0" y="11" width="7" height="1" fill="#008000"/><rect x="7" y="11" width="1" height="1" fill="#000"/><rect x="8" y="11" width="1" height="1" fill="#008000"/><rect x="9" y="11" width="1" height="1" fill="#FFFF00"/><rect x="10" y="11" width="3" height="1" fill="#008000"/><rect x="13" y="11" width="1" height="1" fill="#FFFF00"/><rect x="14" y="11" width="1" height="1" fill="#008000"/><rect x="15" y="11" width="1" height="1" fill="#000"/><rect x="0" y="12" width="7" height="1" fill="#008000"/><rect x="7" y="12" width="1" height="1" fill="#000"/><rect x="8" y="12" width="1" height="1" fill="#008000"/><rect x="9" y="12" width="1" height="1" fill="#FFFF00"/><rect x="10" y="12" width="3" height="1" fill="#008000"/><rect x="13" y="12" width="1" height="1" fill="#FFFF00"/><rect x="14" y="12" width="1" height="1" fill="#008000"/><rect x="15" y="12" width="1" height="1" fill="#000"/><rect x="0" y="13" width="7" height="1" fill="#008000"/><rect x="7" y="13" width="1" height="1" fill="#000"/><rect x="8" y="13" width="2" height="1" fill="#008000"/><rect x="10" y="13" width="3" height="1" fill="#FFFF00"/><rect x="13" y="13" width="2" height="1" fill="#008000"/><rect x="15" y="13" width="1" height="1" fill="#000"/><rect x="0" y="14" width="7" height="1" fill="#008000"/><rect x="7" y="14" width="1" height="1" fill="#000"/><rect x="8" y="14" width="3" height="1" fill="#008000"/><rect x="11" y="14" width="1" height="1" fill="#FFFF00"/><rect x="12" y="14" width="3" height="1" fill="#008000"/><rect x="15" y="14" width="1" height="1" fill="#000"/><rect x="0" y="15" width="16" height="1" fill="#000"/></svg>
<div style="left:846px;top:491px;width:488px;height:18px;overflow:hidden;">
<div class="t" style="top:4px;font-size:11px;line-height:11px;color:#D4D0C8;font-weight:bold;letter-spacing:0.4px;left:-1px;">S-7 : Anschalttemperatur : Analog Sum</div>
</div>
<div style="left:1370px;top:493px;width:16px;height:14px;background:#D4D0C8;box-shadow: inset -1px -1px #404040, inset 1px 1px #FFFFFF, inset -2px -2px #808080;"></div>
<svg style="left:1370px;top:493px;" width="16" height="14" viewBox="0 0 16 14" shape-rendering="crispEdges"><rect x="4" y="3" width="2" height="1" fill="#000"/><rect x="10" y="3" width="2" height="1" fill="#000"/><rect x="5" y="4" width="2" height="1" fill="#000"/><rect x="9" y="4" width="2" height="1" fill="#000"/><rect x="6" y="5" width="4" height="1" fill="#000"/><rect x="7" y="6" width="2" height="1" fill="#000"/><rect x="6" y="7" width="4" height="1" fill="#000"/><rect x="5" y="8" width="2" height="1" fill="#000"/><rect x="9" y="8" width="2" height="1" fill="#000"/><rect x="4" y="9" width="2" height="1" fill="#000"/><rect x="10" y="9" width="2" height="1" fill="#000"/></svg>
<div style="left:1352px;top:493px;width:16px;height:14px;background:#D4D0C8;box-shadow: inset -1px -1px #404040, inset 1px 1px #FFFFFF, inset -2px -2px #808080;"></div>
<svg style="left:1352px;top:493px;" width="16" height="14" viewBox="0 0 16 14" shape-rendering="crispEdges"><rect x="3.5" y="2.5" width="8" height="8" fill="none" stroke="#000"/><rect x="3" y="2" width="9" height="2" fill="#000"/></svg>
<div style="left:1336px;top:493px;width:16px;height:14px;background:#D4D0C8;box-shadow: inset -1px -1px #404040, inset 1px 1px #FFFFFF, inset -2px -2px #808080;"></div>
<svg style="left:1336px;top:493px;" width="16" height="14" viewBox="0 0 16 14" shape-rendering="crispEdges"><rect x="4" y="9" width="6" height="2" fill="#000"/></svg>
<div style="left:826px;top:510px;width:562px;height:133px;background:#FFF;"></div>
<div style="left:1045px;top:512px;width:124px;height:88px;background:#000;"></div>
<div style="left:1046px;top:513px;width:122px;height:86px;background:#FFFFFF;"></div>
<div style="left:1047px;top:514px;width:121px;height:85px;background:#808080;"></div>
<div style="left:1047px;top:514px;width:120px;height:84px;background:#C0C0C0;"></div>
<div style="left:1049px;top:517px;width:116px;height:20px;background:#C0C0C0;box-shadow: inset 1px 1px #808080, inset -1px -1px #FFFFFF;"></div>
<div class="t" style="top:521px;font-size:13px;line-height:13px;color:#000;left:1049px;width:116px;text-align:center;">Analog Sum</div>
<div style="left:831px;top:550px;width:214px;height:15px;background:#808080;"></div>
<div class="t" style="top:551px;font-size:13px;line-height:13px;color:#FFF;left:833px;">Heizung_Soll</div>
<div style="left:831px;top:566px;width:209px;height:2px;background:#FF0000;"></div>
<svg style="left:1039px;top:562px;shape-rendering:auto" width="6" height="10" viewBox="0 0 6 10" shape-rendering="crispEdges"><path d="M0.6 0.8 L5.4 5 L0.6 9.2 Z" fill="#FFF" stroke="#000" stroke-width="1.2"/></svg>
<div class="t" style="top:575px;font-size:13px;line-height:13px;color:#000;left:833px;">Hysterese-</div>
<div style="left:831px;top:590px;width:209px;height:2px;background:#FF0000;"></div>
<svg style="left:1039px;top:586px;shape-rendering:auto" width="6" height="10" viewBox="0 0 6 10" shape-rendering="crispEdges"><path d="M0.6 0.8 L5.4 5 L0.6 9.2 Z" fill="#FFF" stroke="#000" stroke-width="1.2"/></svg>
<div class="t" style="top:552px;font-size:13px;line-height:13px;color:#C00000;left:1050px;">ain1</div>
<div class="t" style="top:576px;font-size:13px;line-height:13px;color:#C00000;left:1050px;">ain2</div>
<div class="t" style="top:552px;font-size:13px;line-height:13px;color:#C00000;right:calc(100% - 1165px);text-align:right;">aout</div>
<div class="t" style="top:551px;font-size:13px;line-height:13px;color:#000;left:1171px;">Anschalttemperatur</div>
<div style="left:1169px;top:566px;width:209px;height:2px;background:#FF0000;"></div>
<svg style="left:1377px;top:562px;shape-rendering:auto" width="7" height="10" viewBox="0 0 7 10" shape-rendering="crispEdges"><path d="M0 0 L7 5 L0 10 Z" fill="#000"/></svg>
<div style="left:292px;top:647px;width:529px;height:189px;background:#D4D0C8;box-shadow: inset -1px -1px #404040, inset 1px 1px #D4D0C8, inset -2px -2px #808080, inset 2px 2px #FFFFFF;"></div>
<div style="left:296px;top:651px;width:521px;height:18px;background:linear-gradient(to right,#808080,#C0C0C0);"></div>
<svg style="left:298px;top:652px;" width="16" height="16" viewBox="0 0 16 16" shape-rendering="crispEdges"><rect x="0" y="0" width="5" height="1" fill="#FFF"/><rect x="5" y="0" width="1" height="1" fill="#000"/><rect x="6" y="0" width="10" height="1" fill="#FFF"/><rect x="0" y="1" width="5" height="1" fill="#FFF"/><rect x="5" y="1" width="1" height="1" fill="#000"/><rect x="6" y="1" width="10" height="1" fill="#FFF"/><rect x="0" y="2" width="4" height="1" fill="#FFF"/><rect x="4" y="2" width="3" height="1" fill="#000"/><rect x="7" y="2" width="9" height="1" fill="#FFF"/><rect x="0" y="3" width="3" height="1" fill="#FFF"/><rect x="3" y="3" width="1" height="1" fill="#000"/><rect x="4" y="3" width="3" height="1" fill="#FFFF00"/><rect x="7" y="3" width="1" height="1" fill="#000"/><rect x="8" y="3" width="8" height="1" fill="#FFF"/><rect x="0" y="4" width="2" height="1" fill="#FFF"/><rect x="2" y="4" width="1" height="1" fill="#000"/><rect x="3" y="4" width="2" height="1" fill="#FFFF00"/><rect x="5" y="4" width="1" height="1" fill="#FF0000"/><rect x="6" y="4" width="2" height="1" fill="#FFFF00"/><rect x="8" y="4" width="1" height="1" fill="#000"/><rect x="9" y="4" width="3" height="1" fill="#FFF"/><rect x="12" y="4" width="1" height="1" fill="#000"/><rect x="13" y="4" width="3" height="1" fill="#FFF"/><rect x="0" y="5" width="1" height="1" fill="#FFF"/><rect x="1" y="5" width="1" height="1" fill="#000"/><rect x="2" y="5" width="2" height="1" fill="#FFFF00"/><rect x="4" y="5" width="1" height="1" fill="#FF0000"/><rect x="5" y="5" width="1" height="1" fill="#FFFF00"/><rect x="6" y="5" width="1" height="1" fill="#FF0000"/><rect x="7" y="5" width="2" height="1" fill="#FFFF00"/><rect x="9" y="5" width="1" height="1" fill="#000"/><rect x="10" y="5" width="3" height="1" fill="#FFF"/><rect x="13" y="5" width="1" height="1" fill="#000"/><rect x="14" y="5" width="2" height="1" fill="#FFF"/><rect x="0" y="6" width="1" height="1" fill="#000"/><rect x="1" y="6" width="5" height="1" fill="#FFFF00"/><rect x="6" y="6" width="1" height="1" fill="#FF0000"/><rect x="7" y="6" width="3" height="1" fill="#FFFF00"/><rect x="10" y="6" width="5" height="1" fill="#000"/><rect x="15" y="6" width="1" height="1" fill="#FFF"/><rect x="0" y="7" width="1" height="1" fill="#FFF"/><rect x="1" y="7" width="1" height="1" fill="#000"/><rect x="2" y="7" width="3" height="1" fill="#FFFF00"/><rect x="5" y="7" width="1" height="1" fill="#FF0000"/><rect x="6" y="7" width="3" height="1" fill="#FFFF00"/><rect x="9" y="7" width="1" height="1" fill="#000"/><rect x="10" y="7" width="3" height="1" fill="#FFF"/><rect x="13" y="7" width="1" height="1" fill="#000"/><rect x="14" y="7" width="2" height="1" fill="#FFF"/><rect x="0" y="8" width="2" height="1" fill="#FFF"/><rect x="2" y="8" width="1" height="1" fill="#000"/><rect x="3" y="8" width="5" height="1" fill="#FFFF00"/><rect x="8" y="8" width="1" height="1" fill="#000"/><rect x="9" y="8" width="3" height="1" fill="#FFF"/><rect x="12" y="8" width="1" height="1" fill="#000"/><rect x="13" y="8" width="3" height="1" fill="#FFF"/><rect x="0" y="9" width="3" height="1" fill="#FFF"/><rect x="3" y="9" width="1" height="1" fill="#000"/><rect x="4" y="9" width="1" height="1" fill="#FFFF00"/><rect x="5" y="9" width="1" height="1" fill="#FF0000"/><rect x="6" y="9" width="1" height="1" fill="#FFFF00"/><rect x="7" y="9" width="1" height="1" fill="#000"/><rect x="8" y="9" width="8" height="1" fill="#FFF"/><rect x="0" y="10" width="4" height="1" fill="#FFF"/><rect x="4" y="10" width="3" height="1" fill="#000"/><rect x="7" y="10" width="9" height="1" fill="#FFF"/><rect x="0" y="11" width="5" height="1" fill="#FFF"/><rect x="5" y="11" width="1" height="1" fill="#000"/><rect x="6" y="11" width="10" height="1" fill="#FFF"/><rect x="0" y="12" width="5" height="1" fill="#FFF"/><rect x="5" y="12" width="1" height="1" fill="#000"/><rect x="6" y="12" width="10" height="1" fill="#FFF"/><rect x="0" y="13" width="3" height="1" fill="#FFF"/><rect x="3" y="13" width="1" height="1" fill="#000"/><rect x="4" y="13" width="1" height="1" fill="#FFF"/><rect x="5" y="13" width="1" height="1" fill="#000"/><rect x="6" y="13" width="1" height="1" fill="#FFF"/><rect x="7" y="13" width="1" height="1" fill="#000"/><rect x="8" y="13" width="8" height="1" fill="#FFF"/><rect x="0" y="14" width="4" height="1" fill="#FFF"/><rect x="4" y="14" width="3" height="1" fill="#000"/><rect x="7" y="14" width="9" height="1" fill="#FFF"/><rect x="0" y="15" width="5" height="1" fill="#FFF"/><rect x="5" y="15" width="1" height="1" fill="#000"/><rect x="6" y="15" width="10" height="1" fill="#FFF"/></svg>
<div style="left:316px;top:651px;width:447px;height:18px;overflow:hidden;">
<div class="t" style="top:4px;font-size:11px;line-height:11px;color:#D4D0C8;font-weight:bold;letter-spacing:0.4px;left:-1px;">S-8 : Analog Compare</div>
</div>
<div style="left:799px;top:653px;width:16px;height:14px;background:#D4D0C8;box-shadow: inset -1px -1px #404040, inset 1px 1px #FFFFFF, inset -2px -2px #808080;"></div>
<svg style="left:799px;top:653px;" width="16" height="14" viewBox="0 0 16 14" shape-rendering="crispEdges"><rect x="4" y="3" width="2" height="1" fill="#000"/><rect x="10" y="3" width="2" height="1" fill="#000"/><rect x="5" y="4" width="2" height="1" fill="#000"/><rect x="9" y="4" width="2" height="1" fill="#000"/><rect x="6" y="5" width="4" height="1" fill="#000"/><rect x="7" y="6" width="2" height="1" fill="#000"/><rect x="6" y="7" width="4" height="1" fill="#000"/><rect x="5" y="8" width="2" height="1" fill="#000"/><rect x="9" y="8" width="2" height="1" fill="#000"/><rect x="4" y="9" width="2" height="1" fill="#000"/><rect x="10" y="9" width="2" height="1" fill="#000"/></svg>
<div style="left:781px;top:653px;width:16px;height:14px;background:#D4D0C8;box-shadow: inset -1px -1px #404040, inset 1px 1px #FFFFFF, inset -2px -2px #808080;"></div>
<svg style="left:781px;top:653px;" width="16" height="14" viewBox="0 0 16 14" shape-rendering="crispEdges"><rect x="3.5" y="2.5" width="8" height="8" fill="none" stroke="#000"/><rect x="3" y="2" width="9" height="2" fill="#000"/></svg>
<div style="left:765px;top:653px;width:16px;height:14px;background:#D4D0C8;box-shadow: inset -1px -1px #404040, inset 1px 1px #FFFFFF, inset -2px -2px #808080;"></div>
<svg style="left:765px;top:653px;" width="16" height="14" viewBox="0 0 16 14" shape-rendering="crispEdges"><rect x="4" y="9" width="6" height="2" fill="#000"/></svg>
<div style="left:296px;top:670px;width:521px;height:162px;background:#FFF;"></div>
<div style="left:497px;top:672px;width:117px;height:112px;background:#000;"></div>
<div style="left:498px;top:673px;width:115px;height:110px;background:#FFFFFF;"></div>
<div style="left:499px;top:674px;width:114px;height:109px;background:#808080;"></div>
<div style="left:499px;top:674px;width:113px;height:108px;background:#C0C0C0;"></div>
<div style="left:502px;top:677px;width:108px;height:20px;background:#C0C0C0;box-shadow: inset 1px 1px #808080, inset -1px -1px #FFFFFF;"></div>
<div class="t" style="top:681px;font-size:13px;line-height:13px;color:#000;left:502px;width:108px;text-align:center;">Analog Compare</div>
<div style="left:301px;top:710px;width:196px;height:15px;background:#808080;"></div>
<div class="t" style="top:711px;font-size:13px;line-height:13px;color:#FFF;left:303px;">Temperatur</div>
<div style="left:301px;top:726px;width:191px;height:2px;background:#FF0000;"></div>
<svg style="left:491px;top:722px;shape-rendering:auto" width="6" height="10" viewBox="0 0 6 10" shape-rendering="crispEdges"><path d="M0 0 L6 5 L0 10 Z" fill="#000"/></svg>
<div class="t" style="top:735px;font-size:13px;line-height:13px;color:#000;left:303px;">Abschalttemperatur</div>
<div style="left:301px;top:750px;width:191px;height:2px;background:#FF0000;"></div>
<svg style="left:491px;top:746px;shape-rendering:auto" width="6" height="10" viewBox="0 0 6 10" shape-rendering="crispEdges"><path d="M0 0 L6 5 L0 10 Z" fill="#000"/></svg>
<div class="t" style="top:759px;font-size:13px;line-height:13px;color:#000;left:303px;">Anschalttemperatur</div>
<div style="left:301px;top:774px;width:191px;height:2px;background:#FF0000;"></div>
<svg style="left:491px;top:770px;shape-rendering:auto" width="6" height="10" viewBox="0 0 6 10" shape-rendering="crispEdges"><path d="M0 0 L6 5 L0 10 Z" fill="#000"/></svg>
<div class="t" style="top:712px;font-size:13px;line-height:13px;color:#C00000;left:503px;">+</div>
<div class="t" style="top:736px;font-size:13px;line-height:13px;color:#C00000;left:503px;">-</div>
<div class="t" style="top:760px;font-size:13px;line-height:13px;color:#C00000;left:503px;">[-]</div>
<div class="t" style="top:712px;font-size:13px;line-height:13px;color:#C00000;right:calc(100% - 610px);text-align:right;">out</div>
<div class="t" style="top:736px;font-size:13px;line-height:13px;color:#C00000;right:calc(100% - 610px);text-align:right;">[out*]</div>
<div class="t" style="top:711px;font-size:13px;line-height:13px;color:#000;left:616px;">Heizung_AUS</div>
<div style="left:614px;top:726px;width:193px;height:2px;background:#0000FF;"></div>
<svg style="left:806px;top:722px;shape-rendering:auto" width="7" height="10" viewBox="0 0 7 10" shape-rendering="crispEdges"><path d="M0 0 L7 5 L0 10 Z" fill="#000"/></svg>
<div class="t" style="top:735px;font-size:13px;line-height:13px;color:#000;left:616px;">Heizung_AN</div>
<div style="left:614px;top:750px;width:193px;height:2px;background:#0000FF;"></div>
<svg style="left:806px;top:746px;shape-rendering:auto" width="7" height="10" viewBox="0 0 7 10" shape-rendering="crispEdges"><path d="M0 0 L7 5 L0 10 Z" fill="#000"/></svg>
<div style="left:0px;top:1000px;width:1400px;height:1px;background:#808080;"></div>
<div style="left:0px;top:1001px;width:1px;height:19px;background:#808080;"></div>
<div class="t" style="top:1007px;font-size:11px;line-height:11px;color:#000;letter-spacing:-0.08px;left:4px;">Type a symbol name and press Enter to add it to the program.</div>
<div style="left:1311px;top:1004px;width:25px;height:16px;background:#D4D0C8;box-shadow: inset 1px 1px #808080, inset -1px -1px #FFFFFF;"></div>
<div style="left:1339px;top:1004px;width:27px;height:16px;background:#D4D0C8;box-shadow: inset 1px 1px #808080, inset -1px -1px #FFFFFF;"></div>
<div style="left:1369px;top:1004px;width:31px;height:16px;background:#D4D0C8;box-shadow: inset 1px 1px #808080, inset -1px -1px #FFFFFF;"></div>
<div style="left:0px;top:1021px;width:1400px;height:1px;background:#FFFFFF;"></div>
<div style="left:0px;top:1022px;width:1400px;height:28px;background:#D4D0C8;"></div>
<div style="left:2px;top:1024px;width:52px;height:22px;background:#D4D0C8;box-shadow: inset -1px -1px #404040, inset 1px 1px #FFFFFF, inset -2px -2px #808080;"></div>
<svg style="left:4px;top:1027px;shape-rendering:auto" width="16" height="14" viewBox="0 0 16 14" shape-rendering="crispEdges"><path d="M2.5 1.5 Q5 0 8.5 1 L7.8 6.5 Q5 5.5 1.8 6.8 Z" fill="#F26A1B"/><path d="M9.2 1.2 Q12 2.2 15.5 1.5 L14.6 7.2 Q11.5 7.8 8.5 6.8 Z" fill="#7CC825"/><path d="M1.6 7.4 Q4.5 6 7.7 7.2 L7 12.8 Q4 11.5 0.8 13 Z" fill="#3B7BEA"/><path d="M8.4 7.5 Q11.5 8.5 14.5 7.8 L13.7 13.3 Q10.5 14 7.6 13 Z" fill="#FFCB12"/></svg>
<div class="t" style="top:1030px;font-size:11px;line-height:11px;color:#000;font-weight:bold;letter-spacing:0.8px;left:22px;">Start</div>
<div style="left:61px;top:1026px;width:1px;height:20px;background:#808080;"></div>
<div style="left:62px;top:1026px;width:1px;height:20px;background:#FFFFFF;"></div>
<svg style="left:70px;top:1027px;shape-rendering:auto" width="16" height="16" viewBox="0 0 16 16" shape-rendering="crispEdges"><path d="M2 2.5 H13 V14.5 H2 Z" fill="#2A7FE0" stroke="#1A4FA0"/><path d="M4 5 Q8 3 11 5 Q9 6 9.5 8 Q10 10 12 11 Q8 13.5 4 12 Z" fill="#FFFBD8"/><path d="M7 8 L9.5 6 M7 9 L6 9.8" stroke="#222"/><circle cx="13.5" cy="6" r="1.3" fill="#E03020"/></svg>
<svg style="left:94px;top:1027px;shape-rendering:auto" width="16" height="16" viewBox="0 0 16 16" shape-rendering="crispEdges"><circle cx="8.5" cy="8" r="6.8" fill="#E8601A"/><circle cx="10" cy="6.5" r="4.3" fill="#2C6FD0"/><path d="M6 4.5 Q8.5 5.5 8 8.5 Q9 11 12 10.5 Q14.5 9.5 15.3 7 Q15.5 12 11.5 14.2 Q6.5 16 3 12.5 Q0.5 9 2.5 5 Q4 3 6 4.5 Z" fill="#EE6A1C"/><path d="M2.5 11 Q5 15 9.5 14.5 Q13.5 13.5 15.2 9.5" fill="none" stroke="#FFAE1A" stroke-width="1.3"/><path d="M4 2.5 Q6 1 8 2" fill="none" stroke="#F07A20" stroke-width="1.5"/></svg>
<svg style="left:117px;top:1027px;shape-rendering:auto" width="16" height="16" viewBox="0 0 16 16" shape-rendering="crispEdges"><path d="M8 8 L8 1 A7 7 0 0 0 1 8 Z" fill="#F0442A"/><path d="M8 8 L15 8 A7 7 0 0 0 8 1 Z" fill="#6CBF2A"/><path d="M8 8 L8 15 A7 7 0 0 0 15 8 Z" fill="#F7C416"/><path d="M8 8 L1 8 A7 7 0 0 0 8 15 Z" fill="#2A7CE0"/><circle cx="8" cy="8" r="4.6" fill="#FFF"/><path d="M6.3 5 L11 8 L6.3 11 Z" fill="#222"/></svg>
<svg style="left:141px;top:1027px;shape-rendering:auto" width="14" height="16" viewBox="0 0 14 16" shape-rendering="crispEdges"><path d="M2 1.5 L12 0.5 L12.8 14.5 L2.5 15.5 Z" fill="#A8C8F4" stroke="#7090D0"/><path d="M3.5 2.5 H10.5 V5 H3.5 Z" fill="#D8E8FC"/><path d="M4 7 H11 M4 9.5 H11 M4 12 H11" stroke="#5A7CC0" stroke-dasharray="1.2 1"/><rect x="9.5" y="6" width="2" height="2" fill="#F08030"/></svg>
<svg style="left:163px;top:1027px;shape-rendering:auto" width="17" height="16" viewBox="0 0 17 16" shape-rendering="crispEdges"><rect x="8.5" y="0.5" width="7" height="6" fill="#808080" stroke="#000"/><rect x="10" y="2" width="4" height="3" fill="#1A3AD0"/><path d="M9 8.5 H16" stroke="#000" stroke-width="1.5"/><rect x="1.5" y="6.5" width="7" height="6" fill="#808080" stroke="#000"/><rect x="3" y="8" width="4" height="3" fill="#1A3AD0"/><path d="M1 14.5 H9" stroke="#000" stroke-width="1.5"/><path d="M5 10 L12 3" stroke="#FFE800" stroke-width="2.2"/></svg>
<div style="left:265px;top:1026px;width:1px;height:20px;background:#808080;"></div>
<div style="left:266px;top:1026px;width:1px;height:20px;background:#FFFFFF;"></div>
<div style="left:271px;top:1024px;width:156px;height:22px;background:repeating-conic-gradient(#FFF 0 25%,#D4D0C8 0 50%) 0 0/2px 2px;box-shadow: inset 1px 1px #404040, inset -1px -1px #FFFFFF, inset 2px 2px #808080;"></div>
<svg style="left:277px;top:1028px;shape-rendering:auto" width="16" height="16" viewBox="0 0 16 16" shape-rendering="crispEdges"><g transform="translate(1 0.5)"><path d="M4 0 H13.5 V11 Q13.5 15 9.5 15 H0 V4 Q0 0 4 0 Z" fill="#22A050"/><path d="M4 1.5 H12 V11 Q12 13.5 9.5 13.5 H1.5 V4 Q1.5 1.5 4 1.5 Z" fill="#1E8A46"/><text x="7" y="12" font-family="Liberation Sans" font-size="12.5" fill="#A8DCB4" text-anchor="middle">S</text></g></svg>
<div style="left:295px;top:1024px;width:128px;height:22px;overflow:hidden;">
<div class="t" style="top:7px;font-size:11px;line-height:11px;color:#000;font-weight:bold;letter-spacing:0.2px;left:1px;">SIMPL Windows - C:\...</div>
</div>
<div style="left:429px;top:1024px;width:156px;height:22px;background:#D4D0C8;box-shadow: inset -1px -1px #404040, inset 1px 1px #FFFFFF, inset -2px -2px #808080;"></div>
<svg style="left:433px;top:1027px;shape-rendering:auto" width="16" height="16" viewBox="0 0 16 16" shape-rendering="crispEdges"><path d="M0.5 4.5 H7 L8.5 6 V15.5 H0.5 Z" fill="#FFF" stroke="#808080"/><path d="M1 15.5 H8" stroke="#000"/><path d="M3 8.5 H7 M3 10.5 H7 M3 12.5 H7" stroke="#808080"/><path d="M6.5 4 Q6.5 1 10 1 Q13.5 1 13.5 4 Q13.5 6 11 8 V11" fill="none" stroke="#000" stroke-width="3.2"/><path d="M6.5 4 Q6.5 1 10 1 Q13.5 1 13.5 4 Q13.5 6 11 8 V11" fill="none" stroke="#FFFF00" stroke-width="1.6"/><rect x="9.5" y="12.5" width="3" height="3" fill="#FFFF00" stroke="#000"/></svg>
<div style="left:453px;top:1024px;width:128px;height:22px;overflow:hidden;">
<div class="t" style="top:6px;font-size:11px;line-height:11px;color:#000;letter-spacing:-0.2px;left:0px;">SIMPL Windows</div>
</div>
<div style="left:588px;top:1024px;width:156px;height:22px;background:#D4D0C8;box-shadow: inset -1px -1px #404040, inset 1px 1px #FFFFFF, inset -2px -2px #808080;"></div>
<svg style="left:592px;top:1027px;shape-rendering:auto" width="16" height="16" viewBox="0 0 16 16" shape-rendering="crispEdges"><circle cx="8.5" cy="8" r="6.8" fill="#E8601A"/><circle cx="10" cy="6.5" r="4.3" fill="#2C6FD0"/><path d="M6 4.5 Q8.5 5.5 8 8.5 Q9 11 12 10.5 Q14.5 9.5 15.3 7 Q15.5 12 11.5 14.2 Q6.5 16 3 12.5 Q0.5 9 2.5 5 Q4 3 6 4.5 Z" fill="#EE6A1C"/><path d="M2.5 11 Q5 15 9.5 14.5 Q13.5 13.5 15.2 9.5" fill="none" stroke="#FFAE1A" stroke-width="1.3"/></svg>
<div style="left:612px;top:1024px;width:128px;height:22px;overflow:hidden;">
<div class="t" style="top:6px;font-size:11px;line-height:11px;color:#000;letter-spacing:-0.2px;left:0px;">Numeric Formats - Mozill...</div>
</div>
<div style="left:747px;top:1024px;width:156px;height:22px;background:#D4D0C8;box-shadow: inset -1px -1px #404040, inset 1px 1px #FFFFFF, inset -2px -2px #808080;"></div>
<svg style="left:751px;top:1027px;shape-rendering:auto" width="16" height="16" viewBox="0 0 16 16" shape-rendering="crispEdges"><path d="M2 6 L9 2 L14 5 V11 L7 15 L2 11 Z" fill="#E00000" stroke="#000"/><path d="M2 6 L8 9 L14 5 M8 9 V15" fill="none" stroke="#000"/></svg>
<div style="left:771px;top:1024px;width:128px;height:22px;overflow:hidden;">
<div class="t" style="top:6px;font-size:11px;line-height:11px;color:#000;letter-spacing:-0.2px;left:0px;">DefaultWorkspace.ctw -...</div>
</div>
<div style="left:905px;top:1024px;width:156px;height:22px;background:#D4D0C8;box-shadow: inset -1px -1px #404040, inset 1px 1px #FFFFFF, inset -2px -2px #808080;"></div>
<svg style="left:909px;top:1027px;shape-rendering:auto" width="16" height="16" viewBox="0 0 16 16" shape-rendering="crispEdges"><g transform="translate(1 0.5)"><path d="M4 0 H13.5 V11 Q13.5 15 9.5 15 H0 V4 Q0 0 4 0 Z" fill="#22A050"/><path d="M4 1.5 H12 V11 Q12 13.5 9.5 13.5 H1.5 V4 Q1.5 1.5 4 1.5 Z" fill="#1E8A46"/><text x="7" y="12" font-family="Liberation Sans" font-size="12.5" fill="#A8DCB4" text-anchor="middle">S</text></g></svg>
<div style="left:929px;top:1024px;width:128px;height:22px;overflow:hidden;">
<div class="t" style="top:6px;font-size:11px;line-height:11px;color:#000;letter-spacing:-0.2px;left:0px;">SIMPL+ - Heizungssteu...</div>
</div>
<div style="left:1064px;top:1024px;width:156px;height:22px;background:#D4D0C8;box-shadow: inset -1px -1px #404040, inset 1px 1px #FFFFFF, inset -2px -2px #808080;"></div>
<svg style="left:1068px;top:1027px;shape-rendering:auto" width="16" height="16" viewBox="0 0 16 16" shape-rendering="crispEdges"><path d="M2 14 L12 3 L15 6 L5 15 Z" fill="#F0A030" stroke="#800000"/><path d="M1 12 L10 2" stroke="#E02020" stroke-width="2"/></svg>
<div style="left:1088px;top:1024px;width:128px;height:22px;overflow:hidden;">
<div class="t" style="top:6px;font-size:11px;line-height:11px;color:#000;letter-spacing:-0.2px;left:0px;">Pixel Editor 2.23</div>
</div>
<div style="left:1230px;top:1026px;width:1px;height:20px;background:#808080;"></div>
<div style="left:1231px;top:1026px;width:1px;height:20px;background:#FFFFFF;"></div>
<div style="left:1239px;top:1028px;width:17px;height:15px;background:#0A246A;"></div>
<div class="t" style="top:1031px;font-size:11px;line-height:11px;color:#FFF;letter-spacing:0.3px;left:1240px;">DE</div>
<div style="left:1260px;top:1026px;width:1px;height:20px;background:#808080;"></div>
<div style="left:1261px;top:1026px;width:1px;height:20px;background:#FFFFFF;"></div>
<div style="left:1267px;top:1024px;width:133px;height:23px;background:#D4D0C8;box-shadow: inset 1px 1px #808080, inset -1px -1px #FFFFFF;"></div>
<div class="t" style="top:1029px;font-size:13px;line-height:13px;color:#000;font-weight:bold;left:1272px;">«</div>
<svg style="left:1285px;top:1028px;shape-rendering:auto" width="17" height="16" viewBox="0 0 17 16" shape-rendering="crispEdges"><path d="M4.5 0.5 L8.5 3 L4.5 5.5 L0.5 3 Z M12.5 0.5 L16.5 3 L12.5 5.5 L8.5 3 Z M4.5 5.5 L8.5 8 L4.5 10.5 L0.5 8 Z M12.5 5.5 L16.5 8 L12.5 10.5 L8.5 8 Z" fill="#6FB3EC" stroke="#3A7FD0"/><path d="M4 11 L8.5 14 L13 11" fill="#6FB3EC" stroke="#3A7FD0"/><circle cx="12" cy="11.5" r="4" fill="#1E9E2E" stroke="#0E6E1E"/><path d="M10 11.5 L11.7 13.2 L14.3 9.8" stroke="#FFF" stroke-width="1.5" fill="none"/></svg>
<svg style="left:1303px;top:1029px;shape-rendering:auto" width="16" height="14" viewBox="0 0 16 14" shape-rendering="crispEdges"><rect x="1.5" y="1.5" width="8" height="7" fill="#303878" stroke="#506090"/><ellipse cx="5.5" cy="11.5" rx="4.5" ry="2" fill="#E0E4F0" stroke="#404A90"/><path d="M11 1 Q12.5 4.5 11 8 M13.5 0 Q15.5 4.5 13.5 9" fill="none" stroke="#606060"/></svg>
<svg style="left:1321px;top:1028px;" width="16" height="16" viewBox="0 0 16 16" shape-rendering="crispEdges"><rect width="16" height="16" fill="#FFF"/><rect x="0" y="0" width="9" height="7" fill="#60D060" opacity="0.8"/><rect x="1.5" y="10.5" width="3" height="4" fill="#00FF00" stroke="#000"/><rect x="5.5" y="7.5" width="3" height="7" fill="#00FF00" stroke="#000"/><rect x="8.5" y="4.5" width="3" height="10" fill="#00FF00" stroke="#000"/><rect x="11.5" y="1.5" width="3" height="13" fill="#00FF00" stroke="#000"/><path d="M1 15.5 H15" stroke="#000"/></svg>
<svg style="left:1340px;top:1028px;shape-rendering:auto" width="14" height="16" viewBox="0 0 14 16" shape-rendering="crispEdges"><path d="M7 0.5 L13.5 2.5 V8 Q13.5 13 7 15.5 Q0.5 13 0.5 8 V2.5 Z" fill="#C81818" stroke="#5A70B0"/><path d="M4.5 5.5 L9.5 10.5 M9.5 5.5 L4.5 10.5" stroke="#FFF" stroke-width="1.8"/></svg>
<div class="t" style="top:1031px;font-size:11px;line-height:11px;color:#000;letter-spacing:0.2px;left:1361px;">22:44</div>
</body></html>
